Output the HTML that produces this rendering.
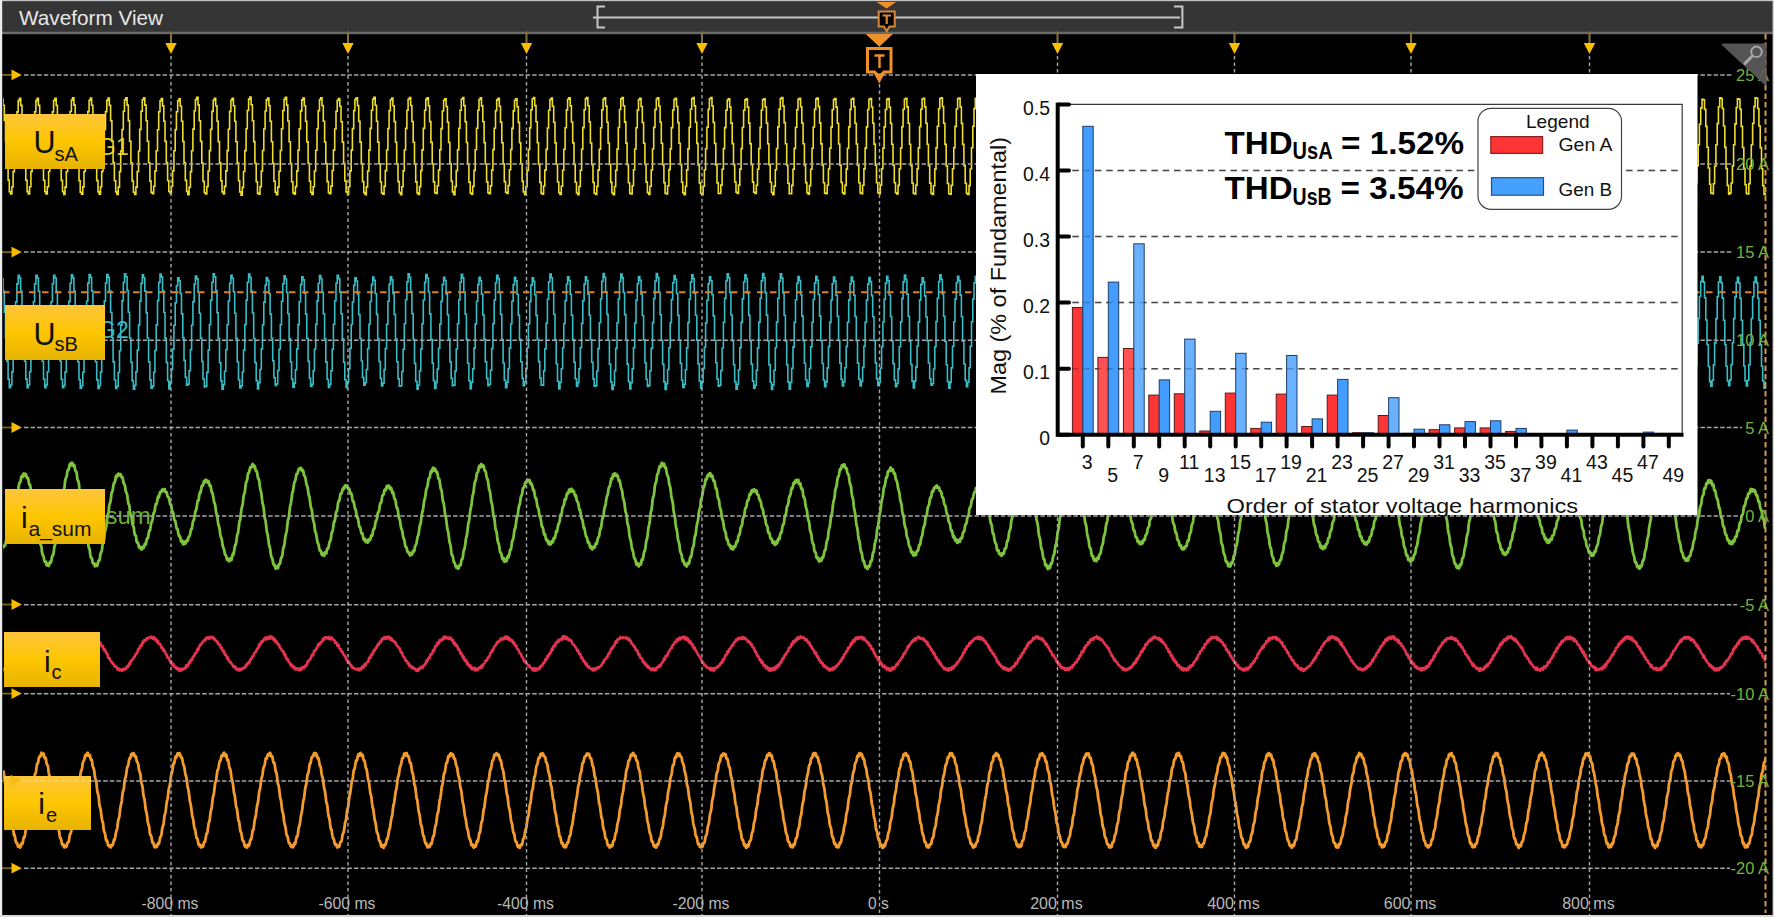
<!DOCTYPE html><html><head><meta charset="utf-8"><style>
html,body{margin:0;padding:0;background:#000;overflow:hidden}
body{width:1774px;height:917px;position:relative;font-family:"Liberation Sans",sans-serif}
svg{position:absolute;left:0;top:0}
text{font-family:"Liberation Sans",sans-serif}
</style></head><body>
<svg width="1774" height="917" viewBox="0 0 1774 917">
<defs>
<linearGradient id="lg" x1="0" y1="0" x2="0" y2="1"><stop offset="0" stop-color="#fdc53c"/><stop offset="0.5" stop-color="#fdc600"/><stop offset="1" stop-color="#e7b300"/></linearGradient>
<clipPath id="wc"><rect x="3" y="34" width="1763" height="881"/></clipPath>
</defs>
<rect width="1774" height="917" fill="#000"/>
<rect x="0" y="0" width="1774" height="1.5" fill="#c4c4c4"/>
<rect x="0" y="1.5" width="1774" height="30" fill="#353535"/>
<rect x="0" y="31.5" width="1774" height="2.7" fill="#6b6b6b"/>
<text x="19" y="25" font-size="21" fill="#e8e8e8" textLength="144" lengthAdjust="spacingAndGlyphs">Waveform View</text>
<g stroke="#c8c8c8" stroke-width="2" fill="none">
<path d="M593 17.4H1180"/>
<path d="M605 6.4H597.5V27.5H605"/>
<path d="M1174 6.4H1182.4V27.5H1174"/>
</g>
<path d="M876.5 2H896L886.7 8.4Z" fill="#f0902a"/>
<path d="M878.7 11.6H894.7V26.5H889.5L886.7 31L883.9 26.5H878.7Z" fill="#000" stroke="#d4883c" stroke-width="2"/>
<path d="M882.5 15.5H891M886.7 15.5V24" stroke="#d4883c" stroke-width="2.2"/>
<g clip-path="url(#wc)">
<text x="98" y="155" font-size="23" fill="#d8cc2a">G1</text>
<text x="98" y="338" font-size="23" fill="#35b8c2">G2</text>
<text x="60" y="524" font-size="24" fill="#6cae30">i_a_sum</text>
<path d="M3 98.2l0 7.1 1.3 0 0 15.2 1.2 0 0 20.3 1.3 0 0 21.3 1.3 0 0 18.1 1.2 0 0 11.4 1.3 0 0 2.4 1.3 0 0 -7.2 1.2 0 0 -15.2 1.3 0 0 -20.2 1.3 0 0 -21.3 1.2 0 0 -18.2 1.3 0 0 -11.3 1.3 0 0 -2.4 1.2 0 0 7.2 1.3 0 0 15.2 1.3 0 0 20.2 1.2 0 0 21.4 1.3 0 0 18.1 1.3 0 0 11.3 1.2 0 0 2.4 1.3 0 0 -7.2 1.3 0 0 -15.2 1.2 0 0 -20.3 1.3 0 0 -21.3 1.2 0 0 -18.1 1.3 0 0 -11.3 1.3 0 0 -2.4 1.2 0 0 7.2 1.3 0 0 15.2 1.3 0 0 20.3 1.2 0 0 21.3 1.3 0 0 18.1 1.3 0 0 11.4 1.2 0 0 2.3 1.3 0 0 -7.2 1.3 0 0 -15.3 1.2 0 0 -20.3 1.3 0 0 -21.3 1.3 0 0 -18 1.2 0 0 -11.4 1.3 0 0 -2.2 1.3 0 0 7.1 1.2 0 0 15.3 1.3 0 0 20.3 1.3 0 0 21.3 1.2 0 0 18.1 1.3 0 0 11.3 1.3 0 0 2.7 1.2 0 0 -7.3 1.3 0 0 -15.4 1.3 0 0 -20.5 1.2 0 0 -21.5 1.3 0 0 -18.2 1.3 0 0 -11.4 1.2 0 0 -2.3 1.3 0 0 7.3 1.3 0 0 15.4 1.2 0 0 20.5 1.3 0 0 21.5 1.3 0 0 18.3 1.2 0 0 11.4 1.3 0 0 1.9 1.3 0 0 -7.2 1.2 0 0 -15.4 1.3 0 0 -20.4 1.3 0 0 -21.4 1.2 0 0 -18.1 1.3 0 0 -11.3 1.3 0 0 -2.2 1.2 0 0 7.2 1.3 0 0 15.4 1.3 0 0 20.4 1.2 0 0 21.4 1.3 0 0 18.1 1.3 0 0 11.3 1.2 0 0 2.2 1.3 0 0 -7.3 1.2 0 0 -15.3 1.3 0 0 -20.4 1.3 0 0 -21.4 1.2 0 0 -18.1 1.3 0 0 -11.3 1.3 0 0 -2.2 1.2 0 0 7.3 1.3 0 0 15.4 1.3 0 0 20.4 1.2 0 0 21.3 1.3 0 0 18.2 1.3 0 0 11.2 1.2 0 0 2.6 1.3 0 0 -7.4 1.3 0 0 -15.5 1.2 0 0 -20.6 1.3 0 0 -21.5 1.3 0 0 -18.3 1.2 0 0 -11.3 1.3 0 0 -2.2 1.3 0 0 7.4 1.2 0 0 15.5 1.3 0 0 20.6 1.3 0 0 21.5 1.2 0 0 18.3 1.3 0 0 11.3 1.3 0 0 2.2 1.2 0 0 -7.4 1.3 0 0 -15.5 1.3 0 0 -20.6 1.2 0 0 -21.6 1.3 0 0 -18.2 1.3 0 0 -11.4 1.2 0 0 -2.1 1.3 0 0 7.4 1.3 0 0 15.6 1.2 0 0 20.6 1.3 0 0 21.5 1.3 0 0 18.3 1.2 0 0 11.3 1.3 0 0 1.2 1.3 0 0 -7.3 1.2 0 0 -15.3 1.3 0 0 -20.2 1.3 0 0 -21.1 1.2 0 0 -17.9 1.3 0 0 -11.1 1.2 0 0 -2.1 1.3 0 0 7.3 1.3 0 0 15.3 1.2 0 0 20.2 1.3 0 0 21.2 1.3 0 0 17.9 1.2 0 0 11 1.3 0 0 2 1.3 0 0 -7.3 1.2 0 0 -15.3 1.3 0 0 -20.2 1.3 0 0 -21.1 1.2 0 0 -17.8 1.3 0 0 -11.1 1.3 0 0 -2 1.2 0 0 7.3 1.3 0 0 15.3 1.3 0 0 20.2 1.2 0 0 21.1 1.3 0 0 17.8 1.3 0 0 11.1 1.2 0 0 3.3 1.3 0 0 -7.5 1.3 0 0 -15.7 1.2 0 0 -20.8 1.3 0 0 -21.7 1.3 0 0 -18.3 1.2 0 0 -11.3 1.3 0 0 -2.1 1.3 0 0 7.5 1.2 0 0 15.8 1.3 0 0 20.7 1.3 0 0 21.7 1.2 0 0 18.3 1.3 0 0 11.4 1.3 0 0 1.1 1.2 0 0 -7.4 1.3 0 0 -15.5 1.3 0 0 -20.4 1.2 0 0 -21.2 1.3 0 0 -18 1.3 0 0 -11.1 1.2 0 0 -2 1.3 0 0 7.5 1.3 0 0 15.4 1.2 0 0 20.4 1.3 0 0 21.3 1.3 0 0 17.9 1.2 0 0 11.1 1.3 0 0 2 1.2 0 0 -7.5 1.3 0 0 -15.5 1.3 0 0 -20.3 1.2 0 0 -21.3 1.3 0 0 -17.9 1.3 0 0 -11.1 1.2 0 0 -2 1.3 0 0 7.5 1.3 0 0 15.5 1.2 0 0 20.4 1.3 0 0 21.2 1.3 0 0 17.9 1.2 0 0 11.1 1.3 0 0 3.2 1.3 0 0 -7.7 1.2 0 0 -15.9 1.3 0 0 -20.9 1.3 0 0 -21.8 1.2 0 0 -18.3 1.3 0 0 -11.4 1.3 0 0 -2 1.2 0 0 7.7 1.3 0 0 15.9 1.3 0 0 20.9 1.2 0 0 21.8 1.3 0 0 18.4 1.3 0 0 11.3 1.2 0 0 1.1 1.3 0 0 -7.6 1.3 0 0 -15.6 1.2 0 0 -20.5 1.3 0 0 -21.5 1.3 0 0 -18 1.2 0 0 -11.1 1.3 0 0 -1.9 1.3 0 0 7.6 1.2 0 0 15.6 1.3 0 0 20.6 1.3 0 0 21.4 1.2 0 0 18 1.3 0 0 11.1 1.3 0 0 2.5 1.2 0 0 -7.7 1.3 0 0 -15.8 1.3 0 0 -20.8 1.2 0 0 -21.7 1.3 0 0 -18.3 1.3 0 0 -11.2 1.2 0 0 -1.9 1.3 0 0 7.7 1.2 0 0 15.9 1.3 0 0 20.8 1.3 0 0 21.7 1.2 0 0 18.2 1.3 0 0 11.2 1.3 0 0 1.3 1.2 0 0 -7.6 1.3 0 0 -15.7 1.3 0 0 -20.6 1.2 0 0 -21.4 1.3 0 0 -18 1.3 0 0 -11 1.2 0 0 -1.9 1.3 0 0 7.7 1.3 0 0 15.6 1.2 0 0 20.6 1.3 0 0 21.4 1.3 0 0 18 1.2 0 0 11 1.3 0 0 2.2 1.3 0 0 -7.8 1.2 0 0 -15.7 1.3 0 0 -20.7 1.3 0 0 -21.5 1.2 0 0 -18.1 1.3 0 0 -11.1 1.3 0 0 -1.9 1.2 0 0 7.8 1.3 0 0 15.8 1.3 0 0 20.7 1.2 0 0 21.5 1.3 0 0 18.1 1.3 0 0 11 1.2 0 0 1.1 1.3 0 0 -7.6 1.3 0 0 -15.6 1.2 0 0 -20.4 1.3 0 0 -21.1 1.3 0 0 -17.8 1.2 0 0 -10.9 1.3 0 0 -1.8 1.3 0 0 7.7 1.2 0 0 15.5 1.3 0 0 20.4 1.3 0 0 21.2 1.2 0 0 17.7 1.3 0 0 10.9 1.3 0 0 2.5 1.2 0 0 -7.7 1.3 0 0 -15.8 1.3 0 0 -20.8 1.2 0 0 -21.5 1.3 0 0 -18 1.2 0 0 -11 1.3 0 0 -1.8 1.3 0 0 7.8 1.2 0 0 15.8 1.3 0 0 20.7 1.3 0 0 21.5 1.2 0 0 18 1.3 0 0 11 1.3 0 0 2.2 1.2 0 0 -7.9 1.3 0 0 -15.9 1.3 0 0 -20.9 1.2 0 0 -21.7 1.3 0 0 -18.1 1.3 0 0 -11.1 1.2 0 0 -1.8 1.3 0 0 7.9 1.3 0 0 15.9 1.2 0 0 20.9 1.3 0 0 21.7 1.3 0 0 18.2 1.2 0 0 11 1.3 0 0 1.2 1.3 0 0 -7.8 1.2 0 0 -15.8 1.3 0 0 -20.6 1.3 0 0 -21.4 1.2 0 0 -18 1.3 0 0 -10.9 1.3 0 0 -1.7 1.2 0 0 7.8 1.3 0 0 15.8 1.3 0 0 20.6 1.2 0 0 21.5 1.3 0 0 17.9 1.3 0 0 10.9 1.2 0 0 2.1 1.3 0 0 -7.9 1.3 0 0 -15.9 1.2 0 0 -20.8 1.3 0 0 -21.6 1.3 0 0 -18.1 1.2 0 0 -11 1.3 0 0 -1.7 1.3 0 0 7.9 1.2 0 0 16 1.3 0 0 20.8 1.3 0 0 21.6 1.2 0 0 18 1.3 0 0 11 1.2 0 0 1.5 1.3 0 0 -7.8 1.3 0 0 -16 1.2 0 0 -20.7 1.3 0 0 -21.5 1.3 0 0 -18.1 1.2 0 0 -10.9 1.3 0 0 -1.6 1.3 0 0 7.9 1.2 0 0 15.9 1.3 0 0 20.8 1.3 0 0 21.5 1.2 0 0 18 1.3 0 0 10.9 1.3 0 0 0.7 1.2 0 0 -7.8 1.3 0 0 -15.6 1.3 0 0 -20.4 1.2 0 0 -21.1 1.3 0 0 -17.6 1.3 0 0 -10.7 1.2 0 0 -1.6 1.3 0 0 7.8 1.3 0 0 15.6 1.2 0 0 20.4 1.3 0 0 21.1 1.3 0 0 17.6 1.2 0 0 10.7 1.3 0 0 2.7 1.3 0 0 -8 1.2 0 0 -16 1.3 0 0 -20.9 1.3 0 0 -21.5 1.2 0 0 -18 1.3 0 0 -10.9 1.3 0 0 -1.7 1.2 0 0 8 1.3 0 0 16 1.3 0 0 20.9 1.2 0 0 21.6 1.3 0 0 18 1.3 0 0 10.9 1.2 0 0 1.3 1.3 0 0 -8 1.3 0 0 -15.9 1.2 0 0 -20.7 1.3 0 0 -21.5 1.3 0 0 -17.9 1.2 0 0 -10.8 1.3 0 0 -1.6 1.2 0 0 8 1.3 0 0 15.9 1.3 0 0 20.8 1.2 0 0 21.4 1.3 0 0 17.9 1.3 0 0 10.8 1.2 0 0 1.1 1.3 0 0 -7.9 1.3 0 0 -15.8 1.2 0 0 -20.5 1.3 0 0 -21.3 1.3 0 0 -17.7 1.2 0 0 -10.7 1.3 0 0 -1.5 1.3 0 0 7.9 1.2 0 0 15.8 1.3 0 0 20.6 1.3 0 0 21.2 1.2 0 0 17.7 1.3 0 0 10.7 1.3 0 0 1.1 1.2 0 0 -7.9 1.3 0 0 -15.7 1.3 0 0 -20.3 1.2 0 0 -21.1 1.3 0 0 -17.5 1.3 0 0 -10.6 1.2 0 0 -1.5 1.3 0 0 7.9 1.3 0 0 15.7 1.2 0 0 20.4 1.3 0 0 21 1.3 0 0 17.6 1.2 0 0 10.5 1.3 0 0 2.8 1.3 0 0 -8.1 1.2 0 0 -16.2 1.3 0 0 -20.9 1.3 0 0 -21.6 1.2 0 0 -18.1 1.3 0 0 -10.8 1.3 0 0 -1.5 1.2 0 0 8.1 1.3 0 0 16.2 1.3 0 0 21 1.2 0 0 21.6 1.3 0 0 18 1.3 0 0 10.8 1.2 0 0 0.9 1.3 0 0 -8.1 1.2 0 0 -15.9 1.3 0 0 -20.7 1.3 0 0 -21.4 1.2 0 0 -17.7 1.3 0 0 -10.7 1.3 0 0 -1.5 1.2 0 0 8.1 1.3 0 0 16 1.3 0 0 20.7 1.2 0 0 21.3 1.3 0 0 17.8 1.3 0 0 10.6 1.2 0 0 1.8 1.3 0 0 -8.1 1.3 0 0 -16.1 1.2 0 0 -20.9 1.3 0 0 -21.5 1.3 0 0 -17.9 1.2 0 0 -10.7 1.3 0 0 -1.4 1.3 0 0 8.1 1.2 0 0 16.1 1.3 0 0 20.9 1.3 0 0 21.5 1.2 0 0 17.9 1.3 0 0 10.7 1.3 0 0 1.7 1.2 0 0 -8.2 1.3 0 0 -16.2 1.3 0 0 -21 1.2 0 0 -21.7 1.3 0 0 -17.9 1.3 0 0 -10.8 1.2 0 0 -1.4 1.3 0 0 8.2 1.3 0 0 16.3 1.2 0 0 21 1.3 0 0 21.6 1.3 0 0 17.9 1.2 0 0 10.8 1.3 0 0 1.1 1.3 0 0 -8.2 1.2 0 0 -16.1 1.3 0 0 -20.9 1.3 0 0 -21.5 1.2 0 0 -17.9 1.3 0 0 -10.6 1.3 0 0 -1.4 1.2 0 0 8.2 1.3 0 0 16.2 1.2 0 0 20.8 1.3 0 0 21.5 1.3 0 0 17.9 1.2 0 0 10.6 1.3 0 0 1.7 1.3 0 0 -8.2 1.2 0 0 -16.3 1.3 0 0 -21.1 1.3 0 0 -21.6 1.2 0 0 -18 1.3 0 0 -10.7 1.3 0 0 -1.3 1.2 0 0 8.3 1.3 0 0 16.3 1.3 0 0 21 1.2 0 0 21.6 1.3 0 0 18 1.3 0 0 10.7 1.2 0 0 0.5 1.3 0 0 -8.2 1.3 0 0 -16 1.2 0 0 -20.7 1.3 0 0 -21.3 1.3 0 0 -17.6 1.2 0 0 -10.5 1.3 0 0 -1.3 1.3 0 0 8.2 1.2 0 0 16 1.3 0 0 20.7 1.3 0 0 21.3 1.2 0 0 17.6 1.3 0 0 10.5 1.3 0 0 1.9 1.2 0 0 -8.3 1.3 0 0 -16.2 1.3 0 0 -21 1.2 0 0 -21.6 1.3 0 0 -17.8 1.3 0 0 -10.6 1.2 0 0 -1.3 1.3 0 0 8.3 1.3 0 0 16.3 1.2 0 0 20.9 1.3 0 0 21.6 1.3 0 0 17.8 1.2 0 0 10.6 1.3 0 0 0.7 1.2 0 0 -8.2 1.3 0 0 -16.1 1.3 0 0 -20.7 1.2 0 0 -21.3 1.3 0 0 -17.6 1.3 0 0 -10.5 1.2 0 0 -1.2 1.3 0 0 8.2 1.3 0 0 16.1 1.2 0 0 20.7 1.3 0 0 21.3 1.3 0 0 17.7 1.2 0 0 10.4 1.3 0 0 2 1.3 0 0 -8.4 1.2 0 0 -16.4 1.3 0 0 -21 1.3 0 0 -21.7 1.2 0 0 -17.9 1.3 0 0 -10.6 1.3 0 0 -1.2 1.2 0 0 8.4 1.3 0 0 16.4 1.3 0 0 21.1 1.2 0 0 21.6 1.3 0 0 17.9 1.3 0 0 10.6 1.2 0 0 1.1 1.3 0 0 -8.4 1.3 0 0 -16.4 1.2 0 0 -21 1.3 0 0 -21.6 1.3 0 0 -17.8 1.2 0 0 -10.6 1.3 0 0 -1.2 1.3 0 0 8.4 1.2 0 0 16.4 1.3 0 0 21 1.3 0 0 21.6 1.2 0 0 17.9 1.3 0 0 10.5 1.3 0 0 0 1.2 0 0 -8.3 1.3 0 0 -15.9 1.3 0 0 -20.6 1.2 0 0 -21 1.3 0 0 -17.4 1.3 0 0 -10.2 1.2 0 0 -1.2 1.3 0 0 8.3 1.2 0 0 16 1.3 0 0 20.5 1.3 0 0 21 1.2 0 0 17.4 1.3 0 0 10.2 1.3 0 0 1.2 1.2 0 0 -8.3 1.3 0 0 -16 1.3 0 0 -20.5 1.2 0 0 -21.1 1.3 0 0 -17.3 1.3 0 0 -10.3 1.2 0 0 -1.1 1.3 0 0 8.3 1.3 0 0 16 1.2 0 0 20.5 1.3 0 0 21.1 1.3 0 0 17.4 1.2 0 0 10.2 1.3 0 0 1.2 1.3 0 0 -8.3 1.2 0 0 -16 1.3 0 0 -20.7 1.3 0 0 -21.1 1.2 0 0 -17.4 1.3 0 0 -10.2 1.3 0 0 -1.1 1.2 0 0 8.3 1.3 0 0 16.1 1.3 0 0 20.6 1.2 0 0 21.1 1.3 0 0 17.4 1.3 0 0 10.3 1.2 0 0 2.2 1.3 0 0 -8.6 1.3 0 0 -16.4 1.2 0 0 -21.2 1.3 0 0 -21.6 1.3 0 0 -17.8 1.2 0 0 -10.5 1.3 0 0 -1.1 1.3 0 0 8.6 1.2 0 0 16.5 1.3 0 0 21.1 1.3 0 0 21.6 1.2 0 0 17.9 1.3 0 0 10.4 1.3 0 0 0.2 1.2 0 0 -8.4 1.3 0 0 -16.2 1.2 0 0 -20.8 1.3 0 0 -21.2 1.3 0 0 -17.5 1.2 0 0 -10.3 1.3 0 0 -1 1.3 0 0 8.4 1.2 0 0 16.2 1.3 0 0 20.8 1.3 0 0 21.3 1.2 0 0 17.5 1.3 0 0 10.2 1.3 0 0 1.3 1.2 0 0 -8.5 1.3 0 0 -16.3 1.3 0 0 -21 1.2 0 0 -21.3 1.3 0 0 -17.6 1.3 0 0 -10.3 1.2 0 0 -1 1.3 0 0 8.5 1.3 0 0 16.3 1.2 0 0 21 1.3 0 0 21.4 1.3 0 0 17.5 1.2 0 0 10.3 1.3 0 0 0.5 1.3 0 0 -8.4 1.2 0 0 -16.2 1.3 0 0 -20.7 1.3 0 0 -21.2 1.2 0 0 -17.4 1.3 0 0 -10.1 1.3 0 0 -1 1.2 0 0 8.5 1.3 0 0 16.2 1.3 0 0 20.7 1.2 0 0 21.1 1.3 0 0 17.4 1.3 0 0 10.2 1.2 0 0 1.2 1.3 0 0 -8.5 1.3 0 0 -16.3 1.2 0 0 -20.9 1.3 0 0 -21.3 1.3 0 0 -17.5 1.2 0 0 -10.2 1.3 0 0 -0.9 1.3 0 0 8.5 1.2 0 0 16.4 1.3 0 0 20.8 1.2 0 0 21.3 1.3 0 0 17.5 1.3 0 0 10.2 1.2 0 0 0.7 1.3 0 0 -8.5 1.3 0 0 -16.3 1.2 0 0 -20.8 1.3 0 0 -21.2 1.3 0 0 -17.4 1.2 0 0 -10.1 1.3 0 0 -0.9 1.3 0 0 8.5 1.2 0 0 16.3 1.3 0 0 20.8 1.3 0 0 21.2 1.2 0 0 17.4 1.3 0 0 10.1 1.3 0 0 0.8 1.2 0 0 -8.5 1.3 0 0 -16.3 1.3 0 0 -20.7 1.2 0 0 -21.2 1.3 0 0 -17.4 1.3 0 0 -10.1 1.2 0 0 -0.8 1.3 0 0 8.5 1.3 0 0 16.3 1.2 0 0 20.8 1.3 0 0 21.1 1.3 0 0 17.4 1.2 0 0 10.1 1.3 0 0 1.2 1.3 0 0 -8.6 1.2 0 0 -16.5 1.3 0 0 -20.9 1.3 0 0 -21.3 1.2 0 0 -17.5 1.3 0 0 -10.2 1.3 0 0 -0.8 1.2 0 0 8.7 1.3 0 0 16.4 1.3 0 0 20.9 1.2 0 0 21.4 1.3 0 0 17.4 1.3 0 0 10.2 1.2 0 0 0.8 1.3 0 0 -8.7 1.3 0 0 -16.4 1.2 0 0 -21 1.3 0 0 -21.3 1.2 0 0 -17.4 1.3 0 0 -10.2 1.3 0 0 -0.8 1.2 0 0 8.7 1.3 0 0 16.4 1.3 0 0 21 1.2 0 0 21.3 1.3 0 0 17.5 1.3 0 0 10.1 1.2 0 0 1.3 1.3 0 0 -8.8 1.3 0 0 -16.6 1.2 0 0 -21.2 1.3 0 0 -21.6 1.3 0 0 -17.6 1.2 0 0 -10.2 1.3 0 0 -0.8 1.3 0 0 8.8 1.2 0 0 16.7 1.3 0 0 21.2 1.3 0 0 21.5 1.2 0 0 17.6 1.3 0 0 10.2 1.3 0 0 0.4 1.2 0 0 -8.7 1.3 0 0 -16.6 1.3 0 0 -21 1.2 0 0 -21.4 1.3 0 0 -17.4 1.3 0 0 -10.2 1.2 0 0 -0.7 1.3 0 0 8.8 1.3 0 0 16.5 1.2 0 0 21 1.3 0 0 21.4 1.3 0 0 17.5 1.2 0 0 10.1 1.3 0 0 1.1 1.3 0 0 -8.9 1.2 0 0 -16.6 1.3 0 0 -21.3 1.3 0 0 -21.5 1.2 0 0 -17.6 1.3 0 0 -10.2 1.3 0 0 -0.7 1.2 0 0 8.9 1.3 0 0 16.7 1.3 0 0 21.2 1.2 0 0 21.5 1.3 0 0 17.6 1.2 0 0 10.2 1.3 0 0 0.6 1.3 0 0 -8.9 1.2 0 0 -16.7 1.3 0 0 -21.1 1.3 0 0 -21.5 1.2 0 0 -17.6 1.3 0 0 -10.1 1.3 0 0 -0.7 1.2 0 0 8.9 1.3 0 0 16.7 1.3 0 0 21.2 1.2 0 0 21.4 1.3 0 0 17.6 1.3 0 0 10.1 1.2 0 0 0.9 1.3 0 0 -9 1.3 0 0 -16.7 1.2 0 0 -21.3 1.3 0 0 -21.6 1.3 0 0 -17.6 1.2 0 0 -10.1 1.3 0 0 -0.7 1.3 0 0 9 1.2 0 0 16.8 1.3 0 0 21.2 1.3 0 0 21.6 1.2 0 0 17.6 1.3 0 0 10.1 1.3 0 0 0.1 1.2 0 0 -8.8 1.3 0 0 -16.6 1.3 0 0 -21.1 1.2 0 0 -21.3 1.3 0 0 -17.4 1.3 0 0 -10 1.2 0 0 -0.6 1.3 0 0 8.8 1.3 0 0 16.6 1.2 0 0 21.1 1.3 0 0 21.4 1.3 0 0 17.3 1.2 0 0 10 1.3 0 0 -0.2 1.3 0 0 -8.7 1.2 0 0 -16.4 1.3 0 0 -20.7 1.3 0 0 -21 1.2 0 0 -17 1.3 0 0 -9.8 1.2 0 0 -0.6 1.3 0 0 8.7 1.3 0 0 16.4 1.2 0 0 20.7 1.3 0 0 21 1.3 0 0 17.1 1.2 0 0 9.8 1.3 0 0 1.6 1.3 0 0 -9 1.2 0 0 -16.7 1.3 0 0 -21.2 1.3 0 0 -21.5 1.2 0 0 -17.4 1.3 0 0 -10 1.3 0 0 -0.6 1.2 0 0 9 1.3 0 0 16.7 1.3 0 0 21.2 1.2 0 0 21.5 1.3 0 0 17.5 1.3 0 0 10 1.2 0 0 0.7 1.3 0 0 -9.1 1.3 0 0 -16.8 1.2 0 0 -21.3 1.3 0 0 -21.5 1.3 0 0 -17.5 1.2 0 0 -10 1.3 0 0 -0.6 1.3 0 0 9.1 1.2 0 0 16.8 1.3 0 0 21.3 1.3 0 0 21.5 1.2 0 0 17.5 1.3 0 0 10 1.3 0 0 0.5 1.2 0 0 -9.1 1.3 0 0 -16.8 1.3 0 0 -21.2 1.2 0 0 -21.5 1.3 0 0 -17.5 1.3 0 0 -9.9 1.2 0 0 -0.6 1.3 0 0 9.1 1.3 0 0 16.8 1.2 0 0 21.3 1.3 0 0 21.5 1.3 0 0 17.4 1.2 0 0 10 1.3 0 0 -0.1 1.2 0 0 -9 1.3 0 0 -16.6 1.3 0 0 -21 1.2 0 0 -21.3 1.3 0 0 -17.2 1.3 0 0 -9.8 1.2 0 0 -0.5 1.3 0 0 9 1.3 0 0 16.6 1.2 0 0 21.1 1.3 0 0 21.2 1.3 0 0 17.2 1.2 0 0 9.9 1.3 0 0 0.6 1.3 0 0 -9 1.2 0 0 -16.8 1.3 0 0 -21.1 1.3 0 0 -21.3 1.2 0 0 -17.3 1.3 0 0 -9.9 1.3 0 0 -0.4 1.2 0 0 9 1.3 0 0 16.8 1.3 0 0 21.1 1.2 0 0 21.4 1.3 0 0 17.3 1.3 0 0 9.8 1.2 0 0 -0.4 1.3 0 0 -8.9 1.3 0 0 -16.5 1.2 0 0 -20.8 1.3 0 0 -21 1.3 0 0 -17 1.2 0 0 -9.6 1.3 0 0 -0.4 1.3 0 0 8.9 1.2 0 0 16.5 1.3 0 0 20.8 1.3 0 0 21 1.2 0 0 17 1.3 0 0 9.6 1.3 0 0 1.4 1.2 0 0 -9.1 1.3 0 0 -16.9 1.3 0 0 -21.2 1.2 0 0 -21.4 1.3 0 0 -17.4 1.3 0 0 -9.8 1.2 0 0 -0.4 1.3 0 0 9.2 1.2 0 0 16.8 1.3 0 0 21.3 1.3 0 0 21.4 1.2 0 0 17.3 1.3 0 0 9.8 1.3 0 0 0 1.2 0 0 -9.1 1.3 0 0 -16.7 1.3 0 0 -21.1 1.2 0 0 -21.2 1.3 0 0 -17.2 1.3 0 0 -9.7 1.2 0 0 -0.4 1.3 0 0 9.1 1.3 0 0 16.8 1.2 0 0 21 1.3 0 0 21.3 1.3 0 0 17.1 1.2 0 0 9.7 1.3 0 0 -0.1 1.3 0 0 -9 1.2 0 0 -16.6 1.3 0 0 -20.9 1.3 0 0 -21 1.2 0 0 -17 1.3 0 0 -9.6 1.3 0 0 -0.3 1.2 0 0 9 1.3 0 0 16.6 1.3 0 0 20.9 1.2 0 0 21 1.3 0 0 17 1.3 0 0 9.6 1.2 0 0 -0.1 1.3 0 0 -8.9 1.3 0 0 -16.5 1.2 0 0 -20.8 1.3 0 0 -20.8 1.3 0 0 -16.9 1.2 0 0 -9.5 1.3 0 0 -0.2 1.3 0 0 9 1.2 0 0 16.5 1.3 0 0 20.7 1.3 0 0 20.8 1.2 0 0 16.9 1.3 0 0 9.5 1.3 0 0 1.5 1.2 0 0 -9.3 1.3 0 0 -16.9 1.3 0 0 -21.3 1.2 0 0 -21.4 1.3 0 0 -17.3 1.2 0 0 -9.7 1.3 0 0 -0.3 1.3 0 0 9.3 1.2 0 0 17 1.3 0 0 21.2 1.3 0 0 21.4 1.2 0 0 17.3 1.3 0 0 9.7 1.3 0 0 0.5 1.2 0 0 -9.4 1.3 0 0 -17 1.3 0 0 -21.4 1.2 0 0 -21.5 1.3 0 0 -17.3 1.3 0 0 -9.7 1.2 0 0 -0.3 1.3 0 0 9.4 1.3 0 0 17 1.2 0 0 21.4 1.3 0 0 21.5 1.3 0 0 17.3 1.2 0 0 9.7 1.3 0 0 -1.2 1.3 0 0 -9 1.2 0 0 -16.6 1.3 0 0 -20.8 1.3 0 0 -20.8 1.2 0 0 -16.8 1.3 0 0 -9.4 1.3 0 0 -0.2 1.2 0 0 9.1 1.3 0 0 16.5 1.3 0 0 20.8 1.2 0 0 20.8 1.3 0 0 16.8 1.3 0 0 9.5 1.2 0 0 1.2 1.3 0 0 -9.3 1.3 0 0 -17 1.2 0 0 -21.2 1.3 0 0 -21.4 1.3 0 0 -17.1 1.2 0 0 -9.7 1.3 0 0 -0.1 1.3 0 0 9.3 1.2 0 0 17 1.3 0 0 21.3 1.3 0 0 21.3 1.2 0 0 17.2 1.3 0 0 9.6 1.2 0 0 -0.5 1.3 0 0 -9.2 1.3 0 0 -16.8 1.2 0 0 -21 1.3 0 0 -21 1.3 0 0 -17 1.2 0 0 -9.5 1.3 0 0 -0.1 1.3 0 0 9.2 1.2 0 0 16.8 1.3 0 0 21 1.3 0 0 21.1 1.2 0 0 16.9 1.3 0 0 9.5 1.3 0 0 -0.3 1.2 0 0 -9.2 1.3 0 0 -16.6 1.3 0 0 -20.9 1.2 0 0 -20.8 1.3 0 0 -16.8 1.3 0 0 -9.4 1.2 0 0 -0.1 1.3 0 0 9.2 1.3 0 0 16.7 1.2 0 0 20.8 1.3 0 0 20.9 1.3 0 0 16.7 1.2 0 0 9.4 1.3 0 0 0.3 1.3 0 0 -9.2 1.2 0 0 -16.8 1.3 0 0 -20.9 1.3 0 0 -21 1.2 0 0 -16.8 1.3 0 0 -9.4 1.3 0 0 -0.1 1.2 0 0 9.3 1.3 0 0 16.7 1.3 0 0 21 1.2 0 0 20.9 1.3 0 0 16.9 1.3 0 0 9.3 1.2 0 0 0.8 1.3 0 0 -9.4 1.3 0 0 -17 1.2 0 0 -21.3 1.3 0 0 -21.3 1.3 0 0 -17.1 1.2 0 0 -9.5 1.3 0 0 0 1.2 0 0 9.4 1.3 0 0 17.1 1.3 0 0 21.2 1.2 0 0 21.3 1.3 0 0 17.1 1.3 0 0 9.5 1.2 0 0 0.2 1.3 0 0 -9.5 1.3 0 0 -17.1 1.2 0 0 -21.4 1.3 0 0 -21.3 1.3 0 0 -17.1 1.2 0 0 -9.6 1.3 0 0 0 1.3 0 0 9.5 1.2 0 0 17.1 1.3 0 0 21.4 1.3 0 0 21.4 1.2 0 0 17.1 1.3 0 0 9.5 1.3 0 0 -1.3 1.2 0 0 -9.3 1.3 0 0 -16.7 1.3 0 0 -20.7 1.2 0 0 -20.8 1.3 0 0 -16.7 1.3 0 0 -9.2 1.2 0 0 0 1.3 0 0 9.3 1.3 0 0 16.7 1.2 0 0 20.8 1.3 0 0 20.7 1.3 0 0 16.7 1.2 0 0 9.2 1.3 0 0 0.8 1.3 0 0 -9.4 1.2 0 0 -17 1.3 0 0 -21.2 1.3 0 0 -21.2 1.2 0 0 -16.9 1.3 0 0 -9.4 1.3 0 0 0.1 1.2 0 0 9.4 1.3 0 0 17.1 1.3 0 0 21.1 1.2 0 0 21.2 1.3 0 0 16.9 1.3 0 0 9.4 1.2 0 0 -1 1.3 0 0 -9.3 1.2 0 0 -16.7 1.3 0 0 -20.8 1.3 0 0 -20.7 1.2 0 0 -16.6 1.3 0 0 -9.2 1.3 0 0 0.1 1.2 0 0 9.3 1.3 0 0 16.7 1.3 0 0 20.8 1.2 0 0 20.8 1.3 0 0 16.6 1.3 0 0 9.1 1.2 0 0 1 1.3 0 0 -9.6 1.3 0 0 -17.1 1.2 0 0 -21.2 1.3 0 0 -21.3 1.3 0 0 -16.9 1.2 0 0 -9.4 1.3 0 0 0.1 1.3 0 0 9.6 1.2 0 0 17.1 1.3 0 0 21.3 1.3 0 0 21.2 1.2 0 0 16.9 1.3 0 0 9.4 1.3 0 0 -0.7 1.2 0 0 -9.5 1.3 0 0 -16.9 1.3 0 0 -21 1.2 0 0 -21 1.3 0 0 -16.7 1.3 0 0 -9.2 1.2 0 0 0.2 1.3 0 0 9.4 1.3 0 0 16.9 1.2 0 0 21 1.3 0 0 21 1.3 0 0 16.7 1.2 0 0 9.2 1.3 0 0 0.7 1.3 0 0 -9.7 1.2 0 0 -17.2 1.3 0 0 -21.4 1.3 0 0 -21.3 1.2 0 0 -17 1.3 0 0 -9.4 1.3 0 0 0.2 1.2 0 0 9.7 1.3 0 0 17.2 1.2 0 0 21.4 1.3 0 0 21.3 1.3 0 0 17 1.2 0 0 9.4 1.3 0 0 -0.1 1.3 0 0 -9.7 1.2 0 0 -17.3 1.3 0 0 -21.5 1.3 0 0 -21.3 1.2 0 0 -17.1 1.3 0 0 -9.3 1.3 0 0 0.2 1.2 0 0 9.7 1.3 0 0 17.3 1.3 0 0 21.5 1.2 0 0 21.4 1.3 0 0 17 1.3 0 0 9.3 1.2 0 0 -0.9 1.3 0 0 -9.6 1.3 0 0 -17.1 1.2 0 0 -21.1 1.3 0 0 -21.1 1.3 0 0 -16.7 1.2 0 0 -9.2 1.3 0 0 0.2 1.3 0 0 9.6 1.2 0 0 17.1 1.3 0 0 21.2 1.3 0 0 21 1.2 0 0 16.8 1.3 0 0 9.1 1.3 0 0 0.5 1.2 0 0 -9.7 1.3 0 0 -17.4 1.3 0 0 -21.5 1.2 0 0 -21.4 1.3 0 0 -17 1.3 0 0 -9.3 1.2 0 0 0.3 1.3 0 0 9.8 1.3 0 0 17.3 1.2 0 0 21.5 1.3 0 0 21.4 1.3 0 0 17 1.2 0 0 9.3 1.3 0 0 -1.4 1.3 0 0 -9.5 1.2 0 0 -17 1.3 0 0 -21.1 1.2 0 0 -20.8 1.3 0 0 -16.7 1.3 0 0 -9 1.2 0 0 0.3 1.3 0 0 9.6 1.3 0 0 17 1.2 0 0 21 1.3 0 0 20.9 1.3 0 0 16.6 1.2 0 0 9 1.3 0 0 -0.6 1.3 0 0 -9.6 1.2 0 0 -16.8 1.3 0 0 -20.9 1.3 0 0 -20.7 1.2 0 0 -16.5 1.3 0 0 -9 1.3 0 0 0.3 1.2 0 0 9.6 1.3 0 0 16.9 1.3 0 0 20.8 1.2 0 0 20.8 1.3 0 0 16.4 1.3 0 0 9 1.2 0 0 0.5 1.3 0 0 -9.8 1.3 0 0 -17.2 1.2 0 0 -21.2 1.3 0 0 -21.1 1.3 0 0 -16.7 1.2 0 0 -9.1 1.3 0 0 0.4 1.3 0 0 9.7 1.2 0 0 17.2 1.3 0 0 21.2 1.3 0 0 21.1 1.2 0 0 16.7 1.3 0 0 9.1 1.3 0 0 -1.2 1.2 0 0 -9.6 1.3 0 0 -16.9 1.3 0 0 -20.8 1.2 0 0 -20.7 1.3 0 0 -16.4 1.3 0 0 -8.9 1.2 0 0 0.4 1.3 0 0 9.5 1.3 0 0 16.9 1.2 0 0 20.9 1.3 0 0 20.7 1.2 0 0 16.4 1.3 0 0 8.8 1.3 0 0 -0.1 1.2 0 0 -9.7 1.3 0 0 -17 1.3 0 0 -20.9 1.2 0 0 -20.8 1.3 0 0 -16.5 1.3 0 0 -8.9 1.2 0 0 0.4 1.3 0 0 9.7 1.3 0 0 17 1.2 0 0 21 1.3 0 0 20.7 1.3 0 0 16.5 1.2 0 0 8.9 1.3 0 0 -0.1 1.3 0 0 -9.7 1.2 0 0 -17.2 1.3 0 0 -21.1 1.3 0 0 -20.9 1.2 0 0 -16.6 1.3 0 0 -9 1.3 0 0 0.5 1.2 0 0 9.8 1.3 0 0 17.1 1.3 0 0 21.1 1.2 0 0 21 1.3 0 0 16.5 1.3 0 0 9 1.2 0 0 -0.2 1.3 0 0 -9.8 1.3 0 0 -17.3 1.2 0 0 -21.3 1.3 0 0 -21 1.3 0 0 -16.7 1.2 0 0 -9 1.3 0 0 0.5 1.3 0 0 9.9 1.2 0 0 17.2 1.3 0 0 21.3 1.3 0 0 21.1 1.2 0 0 16.6 1.3 0 0 9 1.3 0 0 -1.2 1.2 0 0 -9.7 1.3 0 0 -17.1 1.3 0 0 -20.9 1.2 0 0 -20.8 1.3 0 0 -16.4 1.2 0 0 -8.8 1.3 0 0 0.5 1.3 0 0 9.8 1.2 0 0 17 1.3 0 0 21 1.3 0 0 20.7 1.2 0 0 16.4 1.3 0 0 8.8 1.3 0 0 -0.7 1.2 0 0 -9.7 1.3 0 0 -17 1.3 0 0 -20.9 1.2 0 0 -20.6 1.3 0 0 -16.4 1.3 0 0 -8.7 1.2 0 0 0.5 1.3 0 0 9.7 1.3 0 0 17 1.2 0 0 20.9 1.3 0 0 20.7 1.3 0 0 16.3 1.2 0 0 8.7 1.3 0 0 0.8 1.3 0 0 -10.1 1.2 0 0 -17.4 1.3 0 0 -21.5 1.3 0 0 -21.2 1.2 0 0 -16.8 1.3 0 0 -8.9 1.3 0 0 0.6 1.2 0 0 10 1.3 0 0 17.5 1.3 0 0 21.4 1.2 0 0 21.2 1.3 0 0 16.8 1.3 0 0 8.9 1.2 0 0 -1.4 1.3 0 0 -9.9 1.3 0 0 -17.1 1.2 0 0 -21.1 1.3 0 0 -20.9 1.3 0 0 -16.4 1.2 0 0 -8.8 1.3 0 0 0.6 1.3 0 0 9.9 1.2 0 0 17.2 1.3 0 0 21.1 1.3 0 0 20.8 1.2 0 0 16.4 1.3 0 0 8.8 1.2 0 0 0.4 1.3 0 0 -10.1 1.3 0 0 -17.6 1.2 0 0 -21.5 1.3 0 0 -21.3 1.3 0 0 -16.8 1.2 0 0 -8.9 1.3 0 0 0.6 1.3 0 0 10.2 1.2 0 0 17.5 1.3 0 0 21.6 1.3 0 0 21.2 1.2 0 0 16.8 1.3 0 0 8.9 1.3 0 0 -0.8 1.2 0" fill="none" stroke="#eedd2c" stroke-width="1.6" stroke-linejoin="miter"/>
<path d="M3 277.9l0 13.2 1.3 0 0 21.2 1.2 0 0 25 1.3 0 0 23.8 1.3 0 0 18 1.2 0 0 8.5 1.3 0 0 -2.6 1.3 0 0 -13.1 1.2 0 0 -21.2 1.3 0 0 -25 1.3 0 0 -23.8 1.2 0 0 -18 1.3 0 0 -8.5 1.3 0 0 2.6 1.2 0 0 13.2 1.3 0 0 21.2 1.3 0 0 24.9 1.2 0 0 23.9 1.3 0 0 17.9 1.3 0 0 8.5 1.2 0 0 -2.6 1.3 0 0 -13.2 1.3 0 0 -21.2 1.2 0 0 -25 1.3 0 0 -23.8 1.2 0 0 -17.9 1.3 0 0 -8.5 1.3 0 0 2.6 1.2 0 0 13.2 1.3 0 0 21.2 1.3 0 0 25 1.2 0 0 23.8 1.3 0 0 18 1.3 0 0 8.4 1.2 0 0 -2.6 1.3 0 0 -13.3 1.3 0 0 -21.2 1.2 0 0 -25 1.3 0 0 -23.8 1.3 0 0 -17.9 1.2 0 0 -8.4 1.3 0 0 2.6 1.3 0 0 13.3 1.2 0 0 21.2 1.3 0 0 25 1.3 0 0 23.8 1.2 0 0 17.9 1.3 0 0 8.4 1.3 0 0 -2.1 1.2 0 0 -13.4 1.3 0 0 -21.5 1.3 0 0 -25.2 1.2 0 0 -24 1.3 0 0 -18.1 1.3 0 0 -8.5 1.2 0 0 2.8 1.3 0 0 13.4 1.3 0 0 21.4 1.2 0 0 25.2 1.3 0 0 24.1 1.3 0 0 18 1.2 0 0 8.5 1.3 0 0 -2.5 1.3 0 0 -13.5 1.2 0 0 -21.6 1.3 0 0 -25.3 1.3 0 0 -24.1 1.2 0 0 -18.1 1.3 0 0 -8.5 1.3 0 0 2.8 1.2 0 0 13.5 1.3 0 0 21.5 1.3 0 0 25.3 1.2 0 0 24.1 1.3 0 0 18.1 1.3 0 0 8.5 1.2 0 0 -2.8 1.3 0 0 -13.5 1.2 0 0 -21.5 1.3 0 0 -25.4 1.3 0 0 -24.1 1.2 0 0 -18.1 1.3 0 0 -8.4 1.3 0 0 2.8 1.2 0 0 13.5 1.3 0 0 21.6 1.3 0 0 25.3 1.2 0 0 24.1 1.3 0 0 18.1 1.3 0 0 8.4 1.2 0 0 -2.2 1.3 0 0 -13.7 1.3 0 0 -21.8 1.2 0 0 -25.6 1.3 0 0 -24.4 1.3 0 0 -18.2 1.2 0 0 -8.6 1.3 0 0 2.9 1.3 0 0 13.7 1.2 0 0 21.8 1.3 0 0 25.7 1.3 0 0 24.3 1.2 0 0 18.3 1.3 0 0 8.5 1.3 0 0 -3.8 1.2 0 0 -13.5 1.3 0 0 -21.5 1.3 0 0 -25.2 1.2 0 0 -24 1.3 0 0 -17.9 1.3 0 0 -8.4 1.2 0 0 2.9 1.3 0 0 13.5 1.3 0 0 21.5 1.2 0 0 25.3 1.3 0 0 23.9 1.3 0 0 18 1.2 0 0 8.3 1.3 0 0 -2.1 1.3 0 0 -13.8 1.2 0 0 -21.8 1.3 0 0 -25.6 1.3 0 0 -24.3 1.2 0 0 -18.2 1.3 0 0 -8.4 1.2 0 0 2.9 1.3 0 0 13.8 1.3 0 0 21.8 1.2 0 0 25.6 1.3 0 0 24.3 1.3 0 0 18.2 1.2 0 0 8.4 1.3 0 0 -6.7 1.3 0 0 -12.8 1.2 0 0 -20.4 1.3 0 0 -23.8 1.3 0 0 -22.7 1.2 0 0 -16.9 1.3 0 0 -7.8 1.3 0 0 2.8 1.2 0 0 12.8 1.3 0 0 20.4 1.3 0 0 23.9 1.2 0 0 22.6 1.3 0 0 16.9 1.3 0 0 7.8 1.2 0 0 -1 1.3 0 0 -13.3 1.3 0 0 -21.1 1.2 0 0 -24.7 1.3 0 0 -23.4 1.3 0 0 -17.5 1.2 0 0 -8.1 1.3 0 0 2.9 1.3 0 0 13.3 1.2 0 0 21.1 1.3 0 0 24.8 1.3 0 0 23.4 1.2 0 0 17.5 1.3 0 0 8 1.3 0 0 -0.9 1.2 0 0 -13.9 1.3 0 0 -21.9 1.3 0 0 -25.6 1.2 0 0 -24.3 1.3 0 0 -18.2 1.3 0 0 -8.3 1.2 0 0 3 1.3 0 0 13.9 1.3 0 0 21.9 1.2 0 0 25.7 1.3 0 0 24.3 1.3 0 0 18.1 1.2 0 0 8.3 1.3 0 0 -4.3 1.2 0 0 -13.5 1.3 0 0 -21.5 1.3 0 0 -25.1 1.2 0 0 -23.7 1.3 0 0 -17.7 1.3 0 0 -8.1 1.2 0 0 3 1.3 0 0 13.6 1.3 0 0 21.4 1.2 0 0 25.1 1.3 0 0 23.7 1.3 0 0 17.7 1.2 0 0 8.2 1.3 0 0 -2 1.3 0 0 -13.9 1.2 0 0 -21.9 1.3 0 0 -25.6 1.3 0 0 -24.2 1.2 0 0 -18 1.3 0 0 -8.3 1.3 0 0 3.2 1.2 0 0 13.8 1.3 0 0 22 1.3 0 0 25.5 1.2 0 0 24.2 1.3 0 0 18 1.3 0 0 8.3 1.2 0 0 -6.4 1.3 0 0 -13.1 1.3 0 0 -20.6 1.2 0 0 -24 1.3 0 0 -22.8 1.3 0 0 -16.9 1.2 0 0 -7.7 1.3 0 0 2.9 1.3 0 0 13.1 1.2 0 0 20.6 1.3 0 0 24.1 1.3 0 0 22.7 1.2 0 0 16.9 1.3 0 0 7.7 1.3 0 0 -1.5 1.2 0 0 -13.5 1.3 0 0 -21.2 1.3 0 0 -24.7 1.2 0 0 -23.4 1.3 0 0 -17.4 1.3 0 0 -7.9 1.2 0 0 3.1 1.3 0 0 13.5 1.2 0 0 21.2 1.3 0 0 24.8 1.3 0 0 23.3 1.2 0 0 17.4 1.3 0 0 7.9 1.3 0 0 -4 1.2 0 0 -13.3 1.3 0 0 -20.9 1.3 0 0 -24.3 1.2 0 0 -22.9 1.3 0 0 -17.1 1.3 0 0 -7.7 1.2 0 0 3 1.3 0 0 13.3 1.3 0 0 20.9 1.2 0 0 24.3 1.3 0 0 23 1.3 0 0 17 1.2 0 0 7.7 1.3 0 0 -1.8 1.3 0 0 -13.6 1.2 0 0 -21.4 1.3 0 0 -24.9 1.3 0 0 -23.5 1.2 0 0 -17.4 1.3 0 0 -7.9 1.3 0 0 3.1 1.2 0 0 13.7 1.3 0 0 21.4 1.3 0 0 24.9 1.2 0 0 23.4 1.3 0 0 17.4 1.3 0 0 7.9 1.2 0 0 -3 1.3 0 0 -13.7 1.3 0 0 -21.5 1.2 0 0 -24.9 1.3 0 0 -23.5 1.3 0 0 -17.5 1.2 0 0 -7.9 1.3 0 0 3.3 1.3 0 0 13.6 1.2 0 0 21.5 1.3 0 0 24.9 1.3 0 0 23.6 1.2 0 0 17.4 1.3 0 0 7.9 1.3 0 0 -5.6 1.2 0 0 -13.1 1.3 0 0 -20.5 1.3 0 0 -23.9 1.2 0 0 -22.5 1.3 0 0 -16.6 1.2 0 0 -7.5 1.3 0 0 3.1 1.3 0 0 13.1 1.2 0 0 20.5 1.3 0 0 23.9 1.3 0 0 22.5 1.2 0 0 16.6 1.3 0 0 7.5 1.3 0 0 -2.3 1.2 0 0 -13.3 1.3 0 0 -20.9 1.3 0 0 -24.3 1.2 0 0 -22.8 1.3 0 0 -16.9 1.3 0 0 -7.6 1.2 0 0 3.2 1.3 0 0 13.3 1.3 0 0 20.9 1.2 0 0 24.3 1.3 0 0 22.8 1.3 0 0 16.9 1.2 0 0 7.6 1.3 0 0 -2.9 1.3 0 0 -13.5 1.2 0 0 -21 1.3 0 0 -24.4 1.3 0 0 -22.9 1.2 0 0 -17 1.3 0 0 -7.6 1.3 0 0 3.2 1.2 0 0 13.5 1.3 0 0 21 1.3 0 0 24.4 1.2 0 0 23 1.3 0 0 16.9 1.3 0 0 7.6 1.2 0 0 -0.6 1.3 0 0 -14.2 1.3 0 0 -22.1 1.2 0 0 -25.6 1.3 0 0 -24.1 1.3 0 0 -17.8 1.2 0 0 -8 1.3 0 0 3.5 1.3 0 0 14.1 1.2 0 0 22.1 1.3 0 0 25.7 1.3 0 0 24.1 1.2 0 0 17.8 1.3 0 0 7.9 1.2 0 0 -4.1 1.3 0 0 -14 1.3 0 0 -21.9 1.2 0 0 -25.3 1.3 0 0 -23.8 1.3 0 0 -17.6 1.2 0 0 -7.8 1.3 0 0 3.4 1.3 0 0 14 1.2 0 0 21.9 1.3 0 0 25.4 1.3 0 0 23.8 1.2 0 0 17.5 1.3 0 0 7.8 1.3 0 0 -5.9 1.2 0 0 -13.4 1.3 0 0 -20.9 1.3 0 0 -24.1 1.2 0 0 -22.7 1.3 0 0 -16.8 1.3 0 0 -7.4 1.2 0 0 3.3 1.3 0 0 13.4 1.3 0 0 20.9 1.2 0 0 24.2 1.3 0 0 22.7 1.3 0 0 16.7 1.2 0 0 7.4 1.3 0 0 -0.7 1.3 0 0 -14.1 1.2 0 0 -22 1.3 0 0 -25.4 1.3 0 0 -23.8 1.2 0 0 -17.6 1.3 0 0 -7.8 1.3 0 0 3.5 1.2 0 0 14.2 1.3 0 0 21.9 1.3 0 0 25.4 1.2 0 0 23.9 1.3 0 0 17.5 1.3 0 0 7.8 1.2 0 0 -6.3 1.3 0 0 -13.4 1.3 0 0 -20.8 1.2 0 0 -24.2 1.3 0 0 -22.6 1.3 0 0 -16.7 1.2 0 0 -7.3 1.3 0 0 3.4 1.2 0 0 13.4 1.3 0 0 20.9 1.3 0 0 24.1 1.2 0 0 22.6 1.3 0 0 16.7 1.3 0 0 7.3 1.2 0 0 -1.4 1.3 0 0 -14 1.3 0 0 -21.7 1.2 0 0 -25 1.3 0 0 -23.5 1.3 0 0 -17.3 1.2 0 0 -7.6 1.3 0 0 3.5 1.3 0 0 14 1.2 0 0 21.7 1.3 0 0 25.1 1.3 0 0 23.5 1.2 0 0 17.2 1.3 0 0 7.6 1.3 0 0 -5.6 1.2 0 0 -13.4 1.3 0 0 -20.9 1.3 0 0 -24.1 1.2 0 0 -22.6 1.3 0 0 -16.6 1.3 0 0 -7.3 1.2 0 0 3.5 1.3 0 0 13.5 1.3 0 0 20.8 1.2 0 0 24.2 1.3 0 0 22.5 1.3 0 0 16.6 1.2 0 0 7.3 1.3 0 0 -4 1.3 0 0 -13.4 1.2 0 0 -20.6 1.3 0 0 -23.9 1.3 0 0 -22.4 1.2 0 0 -16.4 1.3 0 0 -7.1 1.3 0 0 3.4 1.2 0 0 13.4 1.3 0 0 20.7 1.3 0 0 23.9 1.2 0 0 22.3 1.3 0 0 16.4 1.3 0 0 7.1 1.2 0 0 0.1 1.3 0 0 -14.3 1.2 0 0 -22.2 1.3 0 0 -25.5 1.3 0 0 -24 1.2 0 0 -17.5 1.3 0 0 -7.7 1.3 0 0 3.8 1.2 0 0 14.3 1.3 0 0 22.2 1.3 0 0 25.6 1.2 0 0 23.9 1.3 0 0 17.5 1.3 0 0 7.7 1.2 0 0 -6.5 1.3 0 0 -13.7 1.3 0 0 -21 1.2 0 0 -24.3 1.3 0 0 -22.7 1.3 0 0 -16.6 1.2 0 0 -7.3 1.3 0 0 3.6 1.3 0 0 13.7 1.2 0 0 21.1 1.3 0 0 24.2 1.3 0 0 22.7 1.2 0 0 16.6 1.3 0 0 7.3 1.3 0 0 -3.6 1.2 0 0 -13.7 1.3 0 0 -21.1 1.3 0 0 -24.3 1.2 0 0 -22.7 1.3 0 0 -16.6 1.3 0 0 -7.2 1.2 0 0 3.6 1.3 0 0 13.7 1.3 0 0 21.1 1.2 0 0 24.3 1.3 0 0 22.7 1.3 0 0 16.6 1.2 0 0 7.2 1.3 0 0 -0.5 1.3 0 0 -14.6 1.2 0 0 -22.4 1.3 0 0 -25.8 1.3 0 0 -24 1.2 0 0 -17.6 1.3 0 0 -7.7 1.3 0 0 3.9 1.2 0 0 14.6 1.3 0 0 22.4 1.2 0 0 25.8 1.3 0 0 24.1 1.3 0 0 17.6 1.2 0 0 7.6 1.3 0 0 -4.4 1.3 0 0 -14.4 1.2 0 0 -22.3 1.3 0 0 -25.6 1.3 0 0 -23.8 1.2 0 0 -17.5 1.3 0 0 -7.5 1.3 0 0 3.9 1.2 0 0 14.5 1.3 0 0 22.2 1.3 0 0 25.6 1.2 0 0 23.9 1.3 0 0 17.4 1.3 0 0 7.5 1.2 0 0 -6.3 1.3 0 0 -13.8 1.3 0 0 -21.3 1.2 0 0 -24.5 1.3 0 0 -22.8 1.3 0 0 -16.6 1.2 0 0 -7.1 1.3 0 0 3.7 1.3 0 0 13.9 1.2 0 0 21.3 1.3 0 0 24.4 1.3 0 0 22.8 1.2 0 0 16.6 1.3 0 0 7.1 1.3 0 0 -1 1.2 0 0 -14.6 1.3 0 0 -22.4 1.3 0 0 -25.8 1.2 0 0 -24 1.3 0 0 -17.5 1.3 0 0 -7.5 1.2 0 0 4 1.3 0 0 14.6 1.3 0 0 22.5 1.2 0 0 25.7 1.3 0 0 24 1.3 0 0 17.5 1.2 0 0 7.5 1.3 0 0 -5.7 1.2 0 0 -14.2 1.3 0 0 -21.7 1.3 0 0 -25 1.2 0 0 -23.2 1.3 0 0 -16.9 1.3 0 0 -7.2 1.2 0 0 3.8 1.3 0 0 14.2 1.3 0 0 21.8 1.2 0 0 24.9 1.3 0 0 23.2 1.3 0 0 16.9 1.2 0 0 7.2 1.3 0 0 -3.3 1.3 0 0 -14.4 1.2 0 0 -21.9 1.3 0 0 -25.3 1.3 0 0 -23.4 1.2 0 0 -17.1 1.3 0 0 -7.3 1.3 0 0 4 1.2 0 0 14.4 1.3 0 0 22 1.3 0 0 25.2 1.2 0 0 23.5 1.3 0 0 17 1.3 0 0 7.3 1.2 0 0 -5.9 1.3 0 0 -13.9 1.3 0 0 -21.2 1.2 0 0 -24.3 1.3 0 0 -22.6 1.3 0 0 -16.4 1.2 0 0 -7 1.3 0 0 3.9 1.3 0 0 13.9 1.2 0 0 21.2 1.3 0 0 24.3 1.3 0 0 22.5 1.2 0 0 16.4 1.3 0 0 7 1.3 0 0 -0.9 1.2 0 0 -14.7 1.3 0 0 -22.5 1.3 0 0 -25.7 1.2 0 0 -23.9 1.3 0 0 -17.4 1.3 0 0 -7.3 1.2 0 0 4.1 1.3 0 0 14.7 1.2 0 0 22.5 1.3 0 0 25.7 1.3 0 0 24 1.2 0 0 17.3 1.3 0 0 7.3 1.3 0 0 -5.1 1.2 0 0 -14.5 1.3 0 0 -22.1 1.3 0 0 -25.2 1.2 0 0 -23.5 1.3 0 0 -16.9 1.3 0 0 -7.2 1.2 0 0 4 1.3 0 0 14.5 1.3 0 0 22.1 1.2 0 0 25.3 1.3 0 0 23.4 1.3 0 0 17 1.2 0 0 7.1 1.3 0 0 -2.9 1.3 0 0 -14.9 1.2 0 0 -22.5 1.3 0 0 -25.8 1.3 0 0 -23.9 1.2 0 0 -17.3 1.3 0 0 -7.3 1.3 0 0 4.1 1.2 0 0 14.9 1.3 0 0 22.5 1.3 0 0 25.8 1.2 0 0 24 1.3 0 0 17.3 1.3 0 0 7.2 1.2 0 0 -4.5 1.3 0 0 -14.7 1.3 0 0 -22.5 1.2 0 0 -25.6 1.3 0 0 -23.8 1.3 0 0 -17.2 1.2 0 0 -7.2 1.3 0 0 4.2 1.3 0 0 14.8 1.2 0 0 22.4 1.3 0 0 25.7 1.3 0 0 23.7 1.2 0 0 17.2 1.3 0 0 7.2 1.3 0 0 -6.6 1.2 0 0 -14.1 1.3 0 0 -21.5 1.2 0 0 -24.5 1.3 0 0 -22.7 1.3 0 0 -16.4 1.2 0 0 -6.8 1.3 0 0 4 1.3 0 0 14.2 1.2 0 0 21.4 1.3 0 0 24.5 1.3 0 0 22.7 1.2 0 0 16.4 1.3 0 0 6.8 1.3 0 0 -3.8 1.2 0 0 -14.2 1.3 0 0 -21.6 1.3 0 0 -24.6 1.2 0 0 -22.8 1.3 0 0 -16.4 1.3 0 0 -6.9 1.2 0 0 4.1 1.3 0 0 14.2 1.3 0 0 21.6 1.2 0 0 24.6 1.3 0 0 22.8 1.3 0 0 16.5 1.2 0 0 6.8 1.3 0 0 -4.9 1.3 0 0 -14 1.2 0 0 -21.3 1.3 0 0 -24.2 1.3 0 0 -22.4 1.2 0 0 -16.2 1.3 0 0 -6.7 1.3 0 0 4 1.2 0 0 14.1 1.3 0 0 21.2 1.3 0 0 24.3 1.2 0 0 22.4 1.3 0 0 16.1 1.3 0 0 6.7 1.2 0 0 -4.1 1.3 0 0 -14.1 1.3 0 0 -21.2 1.2 0 0 -24.2 1.3 0 0 -22.4 1.3 0 0 -16.1 1.2 0 0 -6.7 1.3 0 0 4.1 1.3 0 0 14.1 1.2 0 0 21.2 1.3 0 0 24.2 1.2 0 0 22.4 1.3 0 0 16.1 1.3 0 0 6.7 1.2 0 0 -4.5 1.3 0 0 -14 1.3 0 0 -21.1 1.2 0 0 -24 1.3 0 0 -22.2 1.3 0 0 -16 1.2 0 0 -6.6 1.3 0 0 4.1 1.3 0 0 14 1.2 0 0 21.1 1.3 0 0 24 1.3 0 0 22.2 1.2 0 0 16 1.3 0 0 6.6 1.3 0 0 -3.1 1.2 0 0 -14.3 1.3 0 0 -21.5 1.3 0 0 -24.6 1.2 0 0 -22.6 1.3 0 0 -16.3 1.3 0 0 -6.7 1.2 0 0 4.3 1.3 0 0 14.3 1.3 0 0 21.5 1.2 0 0 24.5 1.3 0 0 22.6 1.3 0 0 16.3 1.2 0 0 6.7 1.3 0 0 -3.1 1.3 0 0 -14.6 1.2 0 0 -22.1 1.3 0 0 -25.1 1.3 0 0 -23.1 1.2 0 0 -16.7 1.3 0 0 -6.8 1.3 0 0 4.4 1.2 0 0 14.6 1.3 0 0 22.1 1.3 0 0 25.1 1.2 0 0 23.2 1.3 0 0 16.6 1.3 0 0 6.8 1.2 0 0 -6.8 1.3 0 0 -14 1.3 0 0 -21.1 1.2 0 0 -23.9 1.3 0 0 -22 1.2 0 0 -15.9 1.3 0 0 -6.5 1.3 0 0 4.2 1.2 0 0 14 1.3 0 0 21.1 1.3 0 0 23.9 1.2 0 0 22.1 1.3 0 0 15.8 1.3 0 0 6.5 1.2 0 0 -1.5 1.3 0 0 -14.8 1.3 0 0 -22.2 1.2 0 0 -25.3 1.3 0 0 -23.2 1.3 0 0 -16.7 1.2 0 0 -6.8 1.3 0 0 4.4 1.3 0 0 14.8 1.2 0 0 22.3 1.3 0 0 25.2 1.3 0 0 23.3 1.2 0 0 16.6 1.3 0 0 6.8 1.3 0 0 -5.8 1.2 0 0 -14.5 1.3 0 0 -21.6 1.3 0 0 -24.6 1.2 0 0 -22.6 1.3 0 0 -16.3 1.3 0 0 -6.5 1.2 0 0 4.3 1.3 0 0 14.5 1.3 0 0 21.6 1.2 0 0 24.6 1.3 0 0 22.7 1.3 0 0 16.2 1.2 0 0 6.5 1.3 0 0 -4.5 1.3 0 0 -14.4 1.2 0 0 -21.6 1.3 0 0 -24.5 1.3 0 0 -22.6 1.2 0 0 -16.2 1.3 0 0 -6.5 1.3 0 0 4.4 1.2 0 0 14.4 1.3 0 0 21.7 1.3 0 0 24.5 1.2 0 0 22.6 1.3 0 0 16.1 1.2 0 0 6.5 1.3 0 0 -2.3 1.3 0 0 -15.1 1.2 0 0 -22.5 1.3 0 0 -25.5 1.3 0 0 -23.5 1.2 0 0 -16.8 1.3 0 0 -6.7 1.3 0 0 4.6 1.2 0 0 15 1.3 0 0 22.5 1.3 0 0 25.6 1.2 0 0 23.4 1.3 0 0 16.8 1.3 0 0 6.7 1.2 0 0 -5.9 1.3 0 0 -14.7 1.3 0 0 -22 1.2 0 0 -24.8 1.3 0 0 -22.9 1.3 0 0 -16.3 1.2 0 0 -6.6 1.3 0 0 4.6 1.3 0 0 14.6 1.2 0 0 22 1.3 0 0 24.9 1.3 0 0 22.8 1.2 0 0 16.3 1.3 0 0 6.6 1.3 0 0 -5.2 1.2 0 0 -14.6 1.3 0 0 -21.6 1.3 0 0 -24.6 1.2 0 0 -22.5 1.3 0 0 -16.1 1.3 0 0 -6.4 1.2 0 0 4.5 1.3 0 0 14.5 1.3 0 0 21.7 1.2 0 0 24.5 1.3 0 0 22.6 1.3 0 0 16 1.2 0 0 6.4 1.3 0 0 -3.8 1.3 0 0 -14.7 1.2 0 0 -22 1.3 0 0 -24.9 1.3 0 0 -22.8 1.2 0 0 -16.3 1.3 0 0 -6.5 1.2 0 0 4.6 1.3 0 0 14.8 1.3 0 0 22 1.2 0 0 24.8 1.3 0 0 22.9 1.3 0 0 16.2 1.2 0 0 6.5 1.3 0 0 -3.7 1.3 0 0 -15.1 1.2 0 0 -22.3 1.3 0 0 -25.4 1.3 0 0 -23.2 1.2 0 0 -16.5 1.3 0 0 -6.6 1.3 0 0 4.7 1.2 0 0 15.1 1.3 0 0 22.4 1.3 0 0 25.3 1.2 0 0 23.2 1.3 0 0 16.5 1.3 0 0 6.6 1.2 0 0 -7.4 1.3 0 0 -14.3 1.3 0 0 -21.3 1.2 0 0 -24 1.3 0 0 -22 1.3 0 0 -15.7 1.2 0 0 -6.2 1.3 0 0 4.5 1.3 0 0 14.3 1.2 0 0 21.3 1.3 0 0 24 1.3 0 0 22.1 1.2 0 0 15.6 1.3 0 0 6.2 1.3 0 0 -0.8 1.2 0 0 -15.4 1.3 0 0 -22.9 1.3 0 0 -25.8 1.2 0 0 -23.7 1.3 0 0 -16.8 1.3 0 0 -6.7 1.2 0 0 4.9 1.3 0 0 15.4 1.3 0 0 22.9 1.2 0 0 25.9 1.3 0 0 23.6 1.3 0 0 16.8 1.2 0 0 6.7 1.3 0 0 -8.8 1.2 0 0 -14.3 1.3 0 0 -21.2 1.3 0 0 -24 1.2 0 0 -22 1.3 0 0 -15.6 1.3 0 0 -6.1 1.2 0 0 4.6 1.3 0 0 14.3 1.3 0 0 21.3 1.2 0 0 24 1.3 0 0 21.9 1.3 0 0 15.6 1.2 0 0 6.1 1.3 0 0 -1.7 1.3 0 0 -15.2 1.2 0 0 -22.5 1.3 0 0 -25.4 1.3 0 0 -23.2 1.2 0 0 -16.5 1.3 0 0 -6.5 1.3 0 0 4.9 1.2 0 0 15.2 1.3 0 0 22.5 1.3 0 0 25.4 1.2 0 0 23.3 1.3 0 0 16.4 1.3 0 0 6.5 1.2 0 0 -4.5 1.3 0 0 -15.4 1.3 0 0 -22.7 1.2 0 0 -25.6 1.3 0 0 -23.4 1.3 0 0 -16.5 1.2 0 0 -6.5 1.3 0 0 4.9 1.3 0 0 15.4 1.2 0 0 22.7 1.3 0 0 25.6 1.3 0 0 23.4 1.2 0 0 16.6 1.3 0 0 6.4 1.3 0 0 -8.3 1.2 0 0 -14.4 1.3 0 0 -21.3 1.3 0 0 -23.9 1.2 0 0 -21.9 1.3 0 0 -15.5 1.3 0 0 -6.1 1.2 0 0 4.7 1.3 0 0 14.4 1.2 0 0 21.3 1.3 0 0 24 1.3 0 0 21.9 1.2 0 0 15.5 1.3 0 0 6 1.3 0 0 -1.6 1.2 0 0 -15.3 1.3 0 0 -22.7 1.3 0 0 -25.5 1.2 0 0 -23.2 1.3 0 0 -16.5 1.3 0 0 -6.3 1.2 0 0 4.9 1.3 0 0 15.4 1.3 0 0 22.6 1.2 0 0 25.5 1.3 0 0 23.3 1.3 0 0 16.4 1.2 0 0 6.3 1.3 0 0 -6.6 1.3 0 0 -14.9 1.2 0 0 -21.9 1.3 0 0 -24.7 1.3 0 0 -22.5 1.2 0 0 -15.9 1.3 0 0 -6.1 1.3 0 0 4.9 1.2 0 0 14.8 1.3 0 0 22 1.3 0 0 24.6 1.2 0 0 22.5 1.3 0 0 15.9 1.3 0 0 6.1 1.2 0 0 -4 1.3 0 0 -15.2 1.3 0 0 -22.3 1.2 0 0 -25.1 1.3 0 0 -22.8 1.3 0 0 -16.1 1.2 0 0 -6.2 1.3 0 0 4.9 1.3 0 0 15.2 1.2 0 0 22.3 1.3 0 0 25.1 1.3 0 0 22.8 1.2 0 0 16.2 1.3 0 0 6.1 1.3 0 0 -7.2 1.2 0 0 -14.5 1.3 0 0 -21.4 1.3 0 0 -23.9 1.2 0 0 -21.9 1.3 0 0 -15.3 1.2 0 0 -5.9 1.3 0 0 4.8 1.3 0 0 14.5 1.2 0 0 21.3 1.3 0 0 24 1.3 0 0 21.8 1.2 0 0 15.4 1.3 0 0 5.8 1.3 0 0 -4.6 1.2 0 0 -14.6 1.3 0 0 -21.4 1.3 0 0 -24 1.2 0 0 -21.9 1.3 0 0 -15.4 1.3 0 0 -5.9 1.2 0 0 4.8 1.3 0 0 14.6 1.3 0 0 21.4 1.2 0 0 24.1 1.3 0 0 21.9 1.3 0 0 15.3 1.2 0 0 5.9 1.3 0 0 -4.3 1.3 0 0 -14.8 1.2 0 0 -21.6 1.3 0 0 -24.3 1.3 0 0 -22.1 1.2 0 0 -15.6 1.3 0 0 -5.9 1.3 0 0 4.9 1.2 0 0 14.8 1.3 0 0 21.7 1.3 0 0 24.3 1.2 0 0 22.1 1.3 0 0 15.5 1.3 0 0 5.9 1.2 0 0 -1.9 1.3 0 0 -15.7 1.3 0 0 -23 1.2 0 0 -25.8 1.3 0 0 -23.5 1.3 0 0 -16.5 1.2 0 0 -6.2 1.3 0 0 5.3 1.3 0 0 15.7 1.2 0 0 23 1.3 0 0 25.8 1.3 0 0 23.5 1.2 0 0 16.5 1.3 0 0 6.2 1.2 0 0 -8.3 1.3 0 0 -14.8 1.3 0 0 -21.8 1.2 0 0 -24.3 1.3 0 0 -22.1 1.3 0 0 -15.5 1.2 0 0 -5.9 1.3 0 0 5 1.3 0 0 14.9 1.2 0 0 21.7 1.3 0 0 24.3 1.3 0 0 22.1 1.2 0 0 15.5 1.3 0 0 5.9 1.3 0 0 -2.8 1.2 0 0 -15.5 1.3 0 0 -22.8 1.3 0 0 -25.4 1.2 0 0 -23.1 1.3 0 0 -16.2 1.3 0 0 -6 1.2 0 0 5.2 1.3 0 0 15.6 1.3 0 0 22.7 1.2 0 0 25.4 1.3 0 0 23.1 1.3 0 0 16.2 1.2 0 0 6 1.3 0 0 -4.6 1.3 0 0 -15.7 1.2 0 0 -23.1 1.3 0 0 -25.7 1.3 0 0 -23.4 1.2 0 0 -16.4 1.3 0 0 -6.1 1.3 0 0 5.4 1.2 0 0 15.7 1.3 0 0 23.1 1.3 0 0 25.8 1.2 0 0 23.3 1.3 0 0 16.4 1.3 0 0 6.1 1.2 0 0 -5.3 1.3 0 0 -15.8 1.3 0 0 -23.1 1.2 0 0 -25.8 1.3 0 0 -23.4 1.3 0 0 -16.4 1.2 0 0 -6 1.3 0 0 5.4 1.2 0 0 15.8 1.3 0 0 23.1 1.3 0 0 25.8 1.2 0 0 23.3 1.3 0 0 16.4 1.3 0 0 6 1.2 0 0 -7.8 1.3 0 0 -15.1 1.3 0 0 -22 1.2 0 0 -24.6 1.3 0 0 -22.4 1.3 0 0 -15.5 1.2 0 0 -5.8 1.3 0 0 5.2 1.3 0 0 15.1 1.2 0 0 22.1 1.3 0 0 24.6 1.3 0 0 22.3 1.2 0 0 15.6 1.3 0 0 5.7 1.3 0 0 -5.2 1.2 0 0 -15.1 1.3 0 0 -22.1 1.3 0 0 -24.6 1.2 0 0 -22.3 1.3 0 0 -15.6 1.3 0 0 -5.8 1.2 0 0 5.3 1.3 0 0 15.1 1.3 0 0 22.1 1.2 0 0 24.7 1.3 0 0 22.3 1.3 0 0 15.5 1.2 0 0 5.8 1.3 0 0 -4.6 1.3 0 0 -15.4 1.2 0 0 -22.4 1.3 0 0 -25 1.3 0 0 -22.6 1.2 0 0 -15.7 1.3 0 0 -5.8 1.3 0 0 5.3 1.2 0 0 15.4 1.3 0 0 22.4 1.3 0 0 25 1.2 0 0 22.6 1.3 0 0 15.7 1.3 0 0 5.8 1.2 0 0 -4.3 1.3 0 0 -15.8 1.2 0 0 -22.8 1.3 0 0 -25.5 1.3 0 0 -23 1.2 0 0 -16 1.3 0 0 -5.9 1.3 0 0 5.5 1.2 0 0 15.7 1.3 0 0 22.9 1.3 0 0 25.4 1.2 0 0 23 1.3 0 0 16.1 1.3 0 0 5.8 1.2 0 0 -8.1 1.3 0 0 -15 1.3 0 0 -21.7 1.2 0 0 -24.1 1.3 0 0 -21.9 1.3 0 0 -15.1 1.2 0 0 -5.6 1.3 0 0 5.3 1.3 0 0 14.9 1.2 0 0 21.7 1.3 0 0 24.2 1.3 0 0 21.8 1.2 0 0 15.2 1.3 0 0 5.5 1.3 0 0 -2.7 1.2 0 0 -15.8 1.3 0 0 -22.8 1.3 0 0 -25.4 1.2 0 0 -23 1.3 0 0 -15.9 1.3 0 0 -5.8 1.2 0 0 5.5 1.3 0 0 15.8 1.3 0 0 22.8 1.2 0 0 25.5 1.3 0 0 22.9 1.3 0 0 15.9 1.2 0 0 5.8 1.3 0 0 -5.4 1.3 0 0 -15.8 1.2 0 0 -22.9 1.3 0 0 -25.5 1.3 0 0 -23.1 1.2 0 0 -15.9 1.3 0 0 -5.8 1.3 0 0 5.6 1.2 0 0 15.8 1.3 0 0 23 1.2 0 0 25.5 1.3 0 0 23 1.3 0 0 16 1.2 0 0 5.7 1.3 0 0 -5.4 1.3 0 0 -15.9 1.2 0 0 -23 1.3 0 0 -25.7 1.3 0 0 -23.1 1.2 0 0 -16 1.3 0 0 -5.8 1.3 0 0 5.7 1.2 0 0 15.9 1.3 0 0 23.1 1.3 0 0 25.6 1.2 0 0 23.1 1.3 0 0 16 1.3 0 0 5.8 1.2 0 0 -9 1.3 0 0 -14.9 1.3 0 0 -21.6 1.2 0 0 -24.1 1.3 0 0 -21.6 1.3 0 0 -15 1.2 0 0 -5.4 1.3 0 0 5.4 1.3 0 0 14.9 1.2 0 0 21.7 1.3 0 0 24 1.3 0 0 21.6 1.2 0 0 15 1.3 0 0 9.4 1.3 0 0 -5.8 1.2 0 0 -16.1 1.3 0 0 -23.2 1.3 0 0 -25.8 1.2 0 0 -23.3 1.3 0 0 -16 1.3 0 0 -5.8 1.2 0 0 5.8 1.3 0 0 16.1 1.3 0 0 23.3 1.2 0 0 25.8 1.3 0 0 23.2 1.3 0 0 16.1 1.2 0 0 1.9 1.3 0 0 -5.4 1.3 0 0 -15.1 1.2 0 0 -21.7 1.3 0 0 -24.2 1.2 0 0 -21.7 1.3 0 0 -15 1.3 0 0 -5.3 1.2 0 0 5.4 1.3 0 0 15.1 1.3 0 0 21.8 1.2 0 0 24.1 1.3 0 0 21.7 1.3 0 0 15 1.2 0 0 6.4 1.3 0 0 -5.5 1.3 0 0 -15.5 1.2 0 0 -22.2 1.3 0 0 -24.6 1.3 0 0 -22.1 1.2 0 0 -15.3 1.3 0 0 -5.4 1.3 0 0 5.6 1.2 0 0 15.4 1.3 0 0 22.2 1.3 0 0 24.6 1.2 0 0 22.2 1.3 0 0 15.2 1.3 0 0 6.6 1.2 0 0 -5.7 1.3 0 0 -15.8 1.3 0 0 -22.7 1.2 0 0 -25.1 1.3 0 0 -22.6 1.3 0 0 -15.6 1.2 0 0 -5.5 1.3 0 0 5.7 1.3 0 0 15.8 1.2 0 0 22.7 1.3 0 0 25.2 1.3 0 0 22.6 1.2 0 0 15.5 1.3 0 0 6.8 1.3 0 0 -5.8 1.2 0 0 -16.2 1.3 0 0 -23.3 1.3 0 0 -25.7 1.2 0 0 -23.1 1.3 0 0 -16 1.3 0 0 -5.5 1.2 0 0 5.9 1.3 0 0 16.1 1.3 0 0 23.3 1.2 0 0 25.8 1.3 0 0 23.1 1.2 0 0 15.9 1.3 0 0 3 1.3 0 0 -5.7 1.2 0 0 -15.4 1.3 0 0 -22.3 1.3 0 0 -24.6 1.2 0 0 -22.1 1.3 0 0 -15.2 1.3 0 0 -5.3 1.2 0 0 5.7 1.3 0 0 15.5 1.3 0 0 22.2 1.2 0 0 24.6 1.3 0 0 22.1 1.3 0 0 15.2 1.2 0 0 7.9 1.3 0 0 -6 1.3 0 0 -16.2 1.2 0 0 -23.3 1.3 0 0 -25.8 1.3 0 0 -23.1 1.2 0 0 -15.9 1.3 0 0 -5.5 1.3 0 0 6 1.2 0 0 16.2 1.3 0 0 23.4 1.3 0 0 25.7 1.2 0 0 23.1 1.3 0 0 15.9 1.3 0 0 3.8 1.2 0 0 -5.8 1.3 0 0 -15.8 1.3 0 0 -22.7 1.2 0 0 -25 1.3 0 0 -22.4 1.3 0 0 -15.4 1.2 0 0 -5.3 1.3 0 0 5.8 1.3 0 0 15.8 1.2 0 0 22.7 1.3 0 0 25 1.3 0 0 22.4 1.2 0 0 15.4 1.3 0 0 4.3 1.3 0 0 -5.8 1.2 0 0 -15.5 1.3 0 0 -22.2 1.3 0 0 -24.6 1.2 0 0 -22 1.3 0 0 -15.1 1.2 0 0 -5.2 1.3 0 0 5.8 1.3 0 0 15.5 1.2 0 0 22.3 1.3 0 0 24.5 1.3 0 0 22 1.2 0 0 15.1 1.3 0 0 5.2 1.3 0 0 -5.8 1.2 0 0 -15.5 1.3 0 0 -22.3 1.3 0 0 -24.6 1.2 0 0 -22 1.3 0 0 -15 1.3 0 0 -5.2 1.2 0 0 5.8 1.3 0 0 15.6 1.3 0 0 22.3 1.2 0 0 24.5 1.3 0 0 22 1.3 0 0 15.1 1.2 0 0 4.5 1.3 0 0 -5.8 1.3 0 0 -15.4 1.2 0 0 -22 1.3 0 0 -24.3 1.3 0 0 -21.8 1.2 0 0 -14.8 1.3 0 0 -5.1 1.3 0 0 5.8 1.2 0 0 15.4 1.3 0 0 22.1 1.3 0 0 24.3 1.2 0 0 21.7 1.3 0 0 14.8 1.3 0 0 4.6 1.2 0 0 -5.7 1.3 0 0 -15.3 1.3 0 0 -21.9 1.2 0 0 -24.1 1.3 0 0 -21.5 1.3 0 0 -14.8 1.2 0 0 -4.9 1.3 0 0 5.7 1.3 0 0 15.3 1.2 0 0 21.9 1.3 0 0 24.1 1.3 0 0 21.6 1.2 0 0 14.7 1.3 0 0 5.2 1.2 0 0 -5.7 1.3 0 0 -15.5 1.3 0 0 -22 1.2 0 0 -24.2 1.3 0 0 -21.7 1.3 0 0 -14.8 1.2 0 0 -4.9 1.3 0 0 5.8 1.3 0 0 15.4 1.2 0 0 22 1.3 0 0 24.3 1.3 0 0 21.6 1.2 0 0 14.8 1.3 0 0 7.3 1.3 0 0 -6.1 1.2 0" fill="none" stroke="#38bcc6" stroke-width="1.6" stroke-linejoin="miter"/>
<path d="M3 548.5l0.6 -2.7 0.5 -0.3 0.5 0.5 0.6 -0.5 0.5 -3.4 0.6 -1.9 0.5 0.8 0.6 -2.2 0.5 -3.5 0.6 -2.6 0.5 -0.2 0.6 -1.9 0.6 -4 0.5 -3.4 0.6 -0.6 0.5 -2.1 0.6 -4.4 0.5 -3.3 0.6 -1 0.5 -2.1 0.6 -5.7 0.5 -2.1 0.6 -1.3 0.5 -2.6 0.6 -4.6 0.5 -2.4 0.6 0.1 0.5 -2.7 0.6 -3.7 0.5 -2 0.6 -0.1 0.5 -1.3 0.6 -3.9 0.5 -1.4 0.6 1.1 0.5 -0.1 0.6 -2.9 0.5 -0.6 0.6 2.1 0.5 0.1 0.6 -1.8 0.5 0.9 0.6 2.7 0.5 0.7 0.6 -0.4 0.5 1.3 0.6 4 0.5 1.8 0.6 -0.3 0.5 2.8 0.6 3.5 0.5 3 0.6 1.1 0.5 2.1 0.6 5.3 0.5 2.8 0.6 1.8 0.5 3.2 0.6 5 0.5 3.8 0.6 0.8 0.5 3.6 0.5 5.2 0.6 3.4 0.5 1.1 0.6 3.4 0.5 5.1 0.6 2.6 0.5 1 0.6 2 0.5 5.1 0.6 2.4 0.5 0.6 0.6 1.6 0.5 3.2 0.6 1.8 0.5 -0.4 0.6 0.2 0.5 3.3 0.6 0.4 0.5 -1.7 0.6 -0.2 0.5 2.5 0.6 -1 0.5 -2.5 0.6 -1 0.5 1.2 0.6 -2.1 0.5 -3.3 0.6 -2 0.5 0.2 0.6 -2.3 0.5 -4.5 0.6 -3.5 0.5 -0.8 0.6 -2.9 0.5 -4.7 0.6 -3.4 0.5 -2.2 0.6 -3.4 0.5 -5.5 0.6 -3.8 0.5 -1.4 0.6 -3.4 0.5 -6 0.6 -4 0.5 -1.2 0.6 -3.4 0.5 -5.3 0.6 -3 0.5 -1.5 0.6 -3.1 0.5 -4.8 0.6 -2.9 0.5 -1.2 0.6 -1.3 0.5 -4.3 0.6 -1.9 0.5 0.2 0.6 -1.7 0.5 -3.2 0.6 -1.3 0.5 1.8 0.6 -0.8 0.5 -2.1 0.6 0.1 0.5 2.3 0.6 1 0.5 -1.3 0.6 1 0.5 3.5 0.6 1.8 0.5 0.2 0.6 1.7 0.5 5.2 0.6 2.4 0.5 0.3 0.6 2.9 0.5 5.1 0.6 3.4 0.5 1.1 0.6 4.1 0.5 5.6 0.6 3.2 0.5 1.7 0.6 3.1 0.5 5.7 0.6 4.1 0.5 1.5 0.6 4.1 0.5 4.8 0.6 3.4 0.5 2.3 0.6 2.7 0.5 4.6 0.6 3.5 0.5 0.3 0.6 2.9 0.5 4.8 0.6 2.2 0.5 -0.2 0.6 1.1 0.5 3.6 0.6 1.1 0.5 -0.3 0.6 0.3 0.5 2.7 0.6 -0.1 0.5 -2.1 0.6 0.1 0.5 1.6 0.6 -0.8 0.5 -3.1 0.6 -1.4 0.5 0.3 0.6 -2.1 0.5 -3.6 0.6 -2.5 0.5 -0.7 0.6 -2.4 0.5 -4.4 0.6 -3 0.5 -0.5 0.6 -2.7 0.5 -5.7 0.6 -2.8 0.5 -1.3 0.6 -3.2 0.5 -6 0.6 -3.6 0.5 -1.4 0.6 -3.2 0.5 -5.2 0.6 -2.9 0.5 -0.9 0.6 -2.9 0.5 -5.2 0.6 -2.7 0.5 -0.5 0.6 -3.1 0.5 -3.6 0.6 -2 0.5 0 0.6 -1.6 0.5 -3.8 0.6 -1.7 0.5 1.6 0.6 -1.1 0.5 -2.1 0.6 -0.3 0.5 1.3 0.6 0.2 0.5 -1 0.6 0.2 0.5 2.2 0.6 1.1 0.5 -0.7 0.6 2 0.5 3.5 0.6 1.2 0.5 0.7 0.6 2.1 0.5 3.9 0.6 2.2 0.5 0.7 0.6 2.1 0.5 4.5 0.6 3.8 0.5 0.5 0.6 2.5 0.5 5.3 0.6 2.4 0.5 1.3 0.6 2.6 0.5 4.1 0.6 2.8 0.5 0.7 0.6 2.3 0.5 4.7 0.6 2.1 0.5 0.3 0.6 1.6 0.5 4.6 0.6 1.2 0.5 -0.4 0.6 1.3 0.5 3.5 0.6 0.6 0.5 -0.8 0.6 0 0.5 2.4 0.6 0.2 0.5 -2.5 0.6 0 0.5 1.3 0.6 -0.7 0.5 -2 0.6 -1.8 0.5 1.1 0.6 -0.9 0.5 -3.7 0.6 -2 0.5 0.4 0.6 -1.7 0.5 -3.7 0.6 -2.9 0.5 0.3 0.6 -2.4 0.6 -4.3 0.5 -1.9 0.6 -0.6 0.5 -2.2 0.6 -4.1 0.5 -2.3 0.6 -0.8 0.5 -1.9 0.6 -4.2 0.5 -2.2 0.6 0.2 0.5 -2 0.6 -3.6 0.5 -1.9 0.6 1 0.5 -1.5 0.6 -3 0.5 -1.1 0.6 0.5 0.5 -0.3 0.6 -2.1 0.5 -0.6 0.6 1.1 0.5 0.2 0.6 -1.5 0.5 -0.1 0.6 2.7 0.5 0.7 0.6 -0.5 0.5 1 0.6 3.3 0.5 0.7 0.6 0.1 0.5 1.4 0.6 3.2 0.5 2.7 0.6 0 0.5 1.1 0.6 4.8 0.5 1.7 0.6 0.2 0.5 2.6 0.6 4 0.5 1.6 0.6 0.4 0.5 2.1 0.6 3.9 0.5 2 0.6 0.1 0.5 2.1 0.6 3 0.5 2.3 0.6 -0.6 0.5 0.8 0.6 3.5 0.5 1.5 0.6 -1.1 0.5 0.1 0.6 3.5 0.5 0.3 0.6 -1.5 0.5 -1 0.6 2 0.5 -0.4 0.6 -1.8 0.5 -1.3 0.6 0.9 0.5 -0.6 0.6 -2.7 0.5 -1.6 0.6 -0.1 0.5 -1.6 0.6 -3 0.5 -2.5 0.6 0.1 0.5 -2.6 0.6 -4.2 0.5 -1.9 0.6 -0.6 0.5 -2.6 0.6 -3.6 0.5 -2.9 0.6 -0.3 0.5 -3 0.6 -3.6 0.5 -3.3 0.6 0.4 0.5 -2.5 0.6 -4.2 0.5 -2 0.6 0.4 0.5 -2.3 0.6 -3.8 0.5 -1.2 0.6 0.3 0.5 -1.1 0.6 -2.9 0.5 -1.1 0.6 1.5 0.5 -0.1 0.6 -2.2 0.5 0.3 0.6 1.7 0.5 0.8 0.6 -1.6 0.5 0.8 0.6 2.7 0.5 1.6 0.6 -0.7 0.5 2.2 0.6 3.6 0.5 1.7 0.6 0.5 0.5 2.6 0.6 3.5 0.5 3.4 0.6 0.3 0.5 2.7 0.6 5.2 0.5 2.6 0.6 1 0.5 3.1 0.6 5.2 0.5 2.5 0.6 1.5 0.5 2.7 0.6 4.8 0.5 2.7 0.6 0.7 0.5 2.2 0.6 4.5 0.5 2.5 0.6 0.9 0.5 1.5 0.6 3.7 0.5 1.8 0.6 0.3 0.5 1.2 0.6 2.9 0.5 0.6 0.6 -1.4 0.5 0.3 0.6 2.3 0.5 -0.2 0.6 -2 0.5 -0.9 0.6 1.9 0.5 -0.9 0.6 -3.6 0.5 -2 0.6 1 0.5 -2.4 0.6 -4.1 0.5 -2.8 0.6 -0.2 0.5 -2.4 0.6 -4.8 0.5 -3.4 0.6 -0.8 0.5 -3.5 0.6 -5.1 0.5 -3.6 0.6 -1.2 0.5 -3.7 0.6 -5.4 0.5 -3.4 0.6 -1.5 0.5 -3 0.6 -5.4 0.5 -3.2 0.6 -1.3 0.5 -2.9 0.6 -4.8 0.5 -3.4 0.6 -0.8 0.5 -1.7 0.6 -5.1 0.5 -1.7 0.6 0 0.5 -2.1 0.6 -2.6 0.5 -1.3 0.6 0.8 0.5 -0.5 0.6 -2.3 0.5 -1 0.6 2.5 0.5 0.5 0.6 -1.1 0.5 0.8 0.6 3.1 0.5 1.3 0.6 0 0.5 1.5 0.6 4.1 0.5 2 0.6 0.3 0.5 2.7 0.6 5.1 0.5 2.9 0.6 1.9 0.5 3 0.6 5.4 0.5 3.7 0.6 1.7 0.5 3.3 0.6 5.2 0.5 4.6 0.6 1.7 0.5 3.3 0.6 5.7 0.5 3.8 0.6 1 0.5 3.9 0.6 4.8 0.5 3.1 0.6 1.2 0.5 3.2 0.6 4.1 0.5 3.2 0.6 0.5 0.5 1.4 0.6 3.6 0.5 1.8 0.6 -0.4 0.5 1 0.6 2.6 0.5 0.7 0.6 -2.3 0.5 0 0.6 1.8 0.5 0.1 0.6 -3.2 0.5 -1 0.6 0.1 0.5 -1.3 0.6 -3.6 0.5 -1.7 0.6 -0.3 0.5 -2.3 0.6 -5 0.5 -2.7 0.6 -1 0.5 -3 0.6 -5.5 0.5 -2.7 0.6 -2.2 0.5 -2.6 0.6 -5.5 0.5 -4.7 0.6 -1.2 0.5 -3.1 0.6 -5.4 0.5 -4.2 0.6 -1.6 0.5 -3.4 0.6 -4.5 0.5 -4.1 0.6 -0.7 0.5 -3.2 0.6 -4.3 0.5 -2.3 0.6 -1.2 0.5 -1.4 0.6 -4.2 0.5 -1.5 0.6 0.2 0.5 -1.6 0.6 -2.3 0.5 -1.4 0.6 1 0.5 -0.2 0.6 -1.5 0.5 0 0.6 2.3 0.5 0.7 0.6 -0.8 0.5 1 0.6 3.9 0.5 0.9 0.6 0.6 0.5 1.9 0.6 3.5 0.5 3.3 0.6 0.4 0.5 2.7 0.6 4.1 0.5 3.1 0.6 1.1 0.5 3.5 0.6 4.7 0.5 3.1 0.6 1.3 0.5 2.9 0.6 4.9 0.5 3.3 0.6 1.9 0.5 2.3 0.6 5.6 0.5 2.3 0.6 0.8 0.5 2.8 0.6 4.1 0.5 2.6 0.6 0.8 0.5 1.8 0.6 3.7 0.5 1.5 0.6 -0.2 0.5 1 0.6 2.6 0.5 1.1 0.6 -2.1 0.5 0.8 0.6 1.8 0.5 0.3 0.6 -2.4 0.5 -1.1 0.6 1 0.5 0.1 0.6 -4 0.5 -1.1 0.6 0.3 0.5 -1.6 0.6 -3.4 0.5 -1.9 0.6 -0.8 0.5 -1.8 0.6 -4.6 0.5 -2.3 0.6 -0.7 0.5 -2.7 0.6 -4.6 0.5 -2.7 0.6 0 0.5 -2.9 0.6 -4.9 0.5 -2 0.6 -0.5 0.5 -2.8 0.6 -4.7 0.5 -2.4 0.6 -0.3 0.5 -1.6 0.6 -4.2 0.5 -1.8 0.6 0.4 0.5 -1 0.6 -3 0.5 -1.4 0.6 0.7 0.5 -0.6 0.6 -2.4 0.5 -0.7 0.6 1.7 0.5 -0.1 0.6 -1.5 0.5 0.9 0.6 1.7 0.5 1.2 0.6 -0.9 0.5 1.2 0.6 2.6 0.5 1.5 0.6 -0.4 0.5 1.6 0.6 3.8 0.5 2.6 0.6 -0.2 0.5 2 0.6 3.2 0.5 2.3 0.6 0.9 0.5 2.3 0.6 3.8 0.5 2.5 0.6 -0.4 0.5 2.4 0.6 4.7 0.5 2.1 0.6 0 0.5 1.9 0.6 3 0.5 1.7 0.6 -0.4 0.5 1.7 0.6 3.4 0.5 1.5 0.6 -1.2 0.5 0.6 0.6 2.7 0.5 0.3 0.6 -1.6 0.5 -0.5 0.6 2.6 0.5 -0.6 0.6 -1.7 0.5 -1.1 0.6 0.9 0.5 -1 0.6 -2.9 0.5 -1 0.6 0.7 0.5 -2 0.6 -3.7 0.5 -1.4 0.6 0.1 0.5 -2 0.6 -4.2 0.5 -1.8 0.6 -0.8 0.5 -1.8 0.6 -4 0.5 -1.9 0.6 -0.5 0.5 -1.9 0.6 -4.5 0.5 -2.5 0.6 -0.1 0.5 -1.1 0.6 -4.1 0.5 -2.4 0.6 0.1 0.5 -1 0.6 -3.2 0.5 -1.6 0.6 0.7 0.5 -0.4 0.6 -2.5 0.5 -1.5 0.6 1.4 0.5 0.2 0.6 -1.9 0.5 0.2 0.6 1.9 0.5 1.3 0.6 -1.4 0.5 0.6 0.6 2.7 0.5 2.2 0.6 -1.2 0.5 2 0.6 3.1 0.5 2 0.6 0.6 0.5 1.5 0.6 4.9 0.5 2.1 0.6 0.1 0.5 2.4 0.6 4.7 0.5 3 0.6 1 0.5 1.7 0.6 4.8 0.5 2.6 0.6 1.3 0.5 1.5 0.6 4.4 0.5 2.5 0.6 0.6 0.5 2.5 0.6 3.9 0.5 1.9 0.6 0 0.5 1.3 0.6 2.8 0.5 1.1 0.6 -0.2 0.5 0.5 0.6 1.8 0.5 1.2 0.6 -2.2 0.5 -0.2 0.6 1.7 0.5 -0.5 0.6 -2.9 0.5 -0.8 0.6 0.9 0.5 -0.7 0.6 -4.3 0.5 -1.1 0.6 -0.7 0.5 -1.9 0.6 -3.8 0.5 -2.6 0.6 -1 0.5 -2.9 0.6 -4.4 0.5 -3.2 0.6 -0.5 0.5 -3.6 0.6 -5 0.5 -2.8 0.6 -2 0.5 -2.7 0.6 -4.7 0.5 -3.3 0.6 -1.8 0.5 -2.9 0.6 -4.8 0.5 -2.1 0.6 -1.4 0.5 -1.9 0.6 -4.2 0.5 -2.9 0.6 -0.1 0.5 -1 0.6 -4 0.5 -1.9 0.6 1.3 0.5 -1.3 0.6 -2.7 0.5 -0.9 0.6 2.5 0.5 0.3 0.6 -2 0.5 0.7 0.6 1.8 0.5 1.4 0.6 -0.5 0.5 1.8 0.6 3.7 0.5 1.5 0.6 0.1 0.5 2.4 0.6 4.6 0.5 3.3 0.6 0.1 0.5 3.5 0.6 5.1 0.5 3.5 0.6 1.4 0.5 3.1 0.6 5.2 0.5 3.7 0.6 1.7 0.5 3.9 0.6 4.8 0.5 3.8 0.6 2.1 0.5 2.8 0.6 5.1 0.5 3.4 0.6 1.6 0.5 2.6 0.6 5.5 0.5 2.7 0.6 0.5 0.5 1.4 0.6 3.8 0.5 2 0.6 0 0.5 1.4 0.6 2.8 0.5 0.8 0.6 -1.3 0.5 0.4 0.6 2 0.5 0 0.6 -2.4 0.5 -1.1 0.6 0.4 0.5 -0.4 0.6 -4.1 0.5 -1.6 0.6 -0.3 0.5 -1.7 0.6 -4.9 0.5 -2.8 0.6 -0.8 0.5 -3 0.6 -4.4 0.5 -3.7 0.6 -1.7 0.5 -3.2 0.6 -5 0.5 -4.3 0.6 -2 0.5 -3 0.6 -5.8 0.5 -3.5 0.6 -2.6 0.5 -3.1 0.6 -5.2 0.5 -3.5 0.6 -1.3 0.5 -3.9 0.6 -4.8 0.5 -3.3 0.6 -0.6 0.5 -1.7 0.6 -4.7 0.5 -1.9 0.6 -0.5 0.5 -1 0.6 -3.8 0.5 -1.5 0.6 1.6 0.5 -0.3 0.6 -3.2 0.5 0.2 0.6 2.1 0.5 0.2 0.6 -1.2 0.5 0.6 0.6 3.2 0.5 1.6 0.6 0 0.5 1.8 0.6 3.6 0.5 2.2 0.6 0.9 0.5 2.8 0.6 4.3 0.5 3.3 0.6 1 0.5 3.6 0.6 5 0.5 3.1 0.6 1.5 0.5 3.6 0.6 5.6 0.5 3.7 0.6 1 0.5 3.4 0.6 5.8 0.5 3.2 0.6 1.1 0.5 3 0.6 5.6 0.5 2.4 0.6 1 0.5 2.1 0.6 4.4 0.5 2.8 0.6 0.1 0.5 1 0.6 3.3 0.5 2 0.6 -1.5 0.5 0.5 0.6 3.5 0.5 0 0.6 -1.5 0.5 -0.7 0.6 2.1 0.5 -0.9 0.6 -3.1 0.5 -1.4 0.6 1.2 0.5 -1.2 0.6 -3.4 0.5 -2.9 0.6 0.5 0.5 -2.4 0.6 -4.2 0.5 -3 0.6 -0.5 0.5 -2.4 0.6 -4.3 0.5 -3.9 0.6 -0.6 0.5 -2.5 0.6 -4.8 0.5 -3.9 0.6 -1.1 0.5 -2 0.6 -4.9 0.5 -3.5 0.6 -1.2 0.5 -1.7 0.6 -5.1 0.5 -2.1 0.6 -0.6 0.5 -1.8 0.6 -4.7 0.5 -1.3 0.6 -0.3 0.5 -1.1 0.6 -2.8 0.5 -1.3 0.6 0.5 0.5 -0.5 0.6 -2.3 0.5 -0.3 0.6 1.8 0.5 0.1 0.6 -1.5 0.5 0.9 0.6 3 0.5 0.2 0.6 -0.3 0.5 1.4 0.6 2.7 0.5 2.6 0.6 -0.9 0.5 2.2 0.6 4 0.5 2.4 0.6 -0.1 0.5 2.3 0.6 4.5 0.5 2.4 0.6 0.7 0.5 2.1 0.6 4.5 0.5 2.1 0.6 1.1 0.5 2.1 0.6 4.1 0.5 2.9 0.6 0.2 0.5 1.6 0.6 3.7 0.5 2.2 0.6 -0.6 0.5 1.4 0.6 3.7 0.5 1.1 0.6 -0.6 0.5 0.9 0.6 2.2 0.5 1.3 0.6 -2.1 0.5 0.6 0.6 2.1 0.5 -0.3 0.6 -2.8 0.5 -0.3 0.6 1.2 0.5 -0.2 0.6 -3.8 0.5 -0.7 0.6 0.8 0.5 -1.6 0.6 -3.5 0.5 -2.5 0.6 1 0.5 -2.3 0.6 -3.5 0.5 -2.2 0.6 -0.9 0.5 -1.4 0.6 -4 0.5 -3.2 0.6 0.1 0.5 -1.6 0.6 -4.7 0.5 -1.5 0.6 -0.6 0.5 -1.3 0.6 -4.5 0.5 -1.5 0.6 0.8 0.5 -2.1 0.6 -3.3 0.5 -1.1 0.6 0.7 0.5 -1.1 0.6 -2.6 0.5 -0.7 0.6 2.3 0.5 -0.4 0.6 -1.8 0.5 -0.7 0.6 2.9 0.5 -0.1 0.6 -0.9 0.5 0.8 0.6 2.7 0.5 1.8 0.6 -1 0.5 1.3 0.6 3.9 0.5 1.1 0.6 0.8 0.5 1.4 0.6 3.8 0.5 2.7 0.6 -0.3 0.5 2.8 0.6 3.8 0.5 2.3 0.6 0.7 0.5 1.9 0.6 4 0.5 3 0.6 -0.4 0.5 2.8 0.6 3.5 0.5 2.5 0.6 0.2 0.5 1.3 0.6 3.7 0.5 1.3 0.6 -0.9 0.5 1.1 0.6 3.1 0.5 1.4 0.6 -1.4 0.5 0.4 0.6 2.6 0.5 -0.5 0.6 -2 0.5 0 0.6 0.8 0.5 -0.5 0.6 -2.6 0.5 -1.4 0.6 0.9 0.5 -1.4 0.6 -3.3 0.5 -1.9 0.6 -0.4 0.5 -1.5 0.6 -4.4 0.5 -2.8 0.6 0.3 0.5 -3.1 0.6 -4.8 0.5 -2.9 0.5 -0.2 0.6 -2.4 0.5 -4.9 0.6 -3.3 0.5 -1 0.6 -2.9 0.5 -4.1 0.6 -2.8 0.5 -0.9 0.6 -2 0.5 -4.6 0.6 -1.9 0.5 -0.3 0.6 -2.3 0.5 -3.1 0.6 -2.7 0.5 1.1 0.6 -1.3 0.5 -3.1 0.6 -1.2 0.5 2.1 0.6 -1 0.5 -1.6 0.6 0.4 0.5 1.4 0.6 0.8 0.5 -0.8 0.6 0.8 0.5 3.3 0.6 1.8 0.5 -1 0.6 1.9 0.5 4 0.6 2.1 0.5 1.3 0.6 2.3 0.5 4.7 0.6 2.3 0.5 1.8 0.6 2.8 0.5 4.9 0.6 3.7 0.5 1 0.6 3 0.5 5.2 0.6 3.6 0.5 1.1 0.6 3.5 0.5 5.6 0.6 3.3 0.5 1.2 0.6 2.7 0.5 4.3 0.6 3.2 0.5 0.4 0.6 2.6 0.5 3.9 0.6 1.8 0.5 0.2 0.6 1.7 0.5 2.6 0.6 1.9 0.5 -2 0.6 0.7 0.5 2.2 0.6 0.8 0.5 -2 0.6 -0.8 0.5 0.9 0.6 -0.3 0.5 -3.7 0.6 -1.7 0.5 1 0.6 -2.1 0.5 -4 0.6 -2.5 0.5 -0.3 0.6 -3.1 0.5 -4.5 0.6 -3.3 0.5 -1.1 0.6 -3.6 0.5 -5.1 0.6 -3.8 0.5 -1.9 0.6 -3.6 0.5 -5.2 0.6 -4.4 0.5 -0.8 0.6 -4.3 0.5 -5.7 0.6 -3.6 0.5 -0.6 0.6 -3.8 0.5 -5.4 0.6 -3.4 0.5 -0.9 0.6 -2 0.5 -4.6 0.6 -2.4 0.5 -0.2 0.6 -2.5 0.5 -3.1 0.6 -1.8 0.5 1.2 0.6 -0.8 0.5 -2.6 0.6 -1.4 0.5 2.6 0.6 0.3 0.5 -1.6 0.6 -0.3 0.5 3 0.6 1.2 0.5 -0.7 0.6 2.4 0.5 3.8 0.6 2.1 0.5 0.6 0.6 2.2 0.5 4.3 0.6 2.9 0.5 1.1 0.6 3.7 0.5 4.7 0.6 3.7 0.5 1.7 0.6 3 0.5 5.8 0.6 3.9 0.5 2.1 0.6 3.2 0.5 5.6 0.6 4.3 0.5 1.1 0.6 3.7 0.5 5.1 0.6 2.7 0.5 1.5 0.6 2.8 0.5 5.1 0.6 2.3 0.5 0.8 0.6 1.8 0.5 3.7 0.6 2.5 0.5 -1.3 0.6 1.9 0.5 2.3 0.6 0.7 0.5 -1.3 0.6 0.7 0.5 2.1 0.6 -1.1 0.5 -2 0.6 -1 0.5 1.3 0.6 -1.8 0.5 -3.1 0.6 -2.1 0.5 0.6 0.6 -2.6 0.5 -3.6 0.6 -3.3 0.5 -0.8 0.6 -2.2 0.5 -5.1 0.6 -3.6 0.5 -0.6 0.6 -3.7 0.5 -4.5 0.6 -3.6 0.5 -1.2 0.6 -3.4 0.5 -5.6 0.6 -3.4 0.5 -1.3 0.6 -2.5 0.5 -5.9 0.6 -2.3 0.5 -1.8 0.6 -2.4 0.5 -4.6 0.6 -1.9 0.5 -0.7 0.6 -2.1 0.5 -3.4 0.6 -2.5 0.5 0.8 0.6 -1.1 0.5 -2.8 0.6 -0.9 0.5 1.2 0.6 -0.5 0.5 -2.1 0.6 -0.2 0.5 3 0.6 0.5 0.5 -1.1 0.6 0.3 0.5 3.4 0.6 1.9 0.5 -0.6 0.6 1.2 0.5 4.2 0.6 2.7 0.5 -0.4 0.6 2.2 0.5 4.5 0.6 3.1 0.5 0.9 0.6 1.8 0.5 4.8 0.6 3 0.5 0.9 0.6 2.9 0.5 4.4 0.6 3.1 0.5 0.6 0.6 3.3 0.5 4.3 0.6 2 0.5 1.3 0.6 1.2 0.5 4.4 0.6 2.7 0.5 -0.3 0.6 1.5 0.5 3.1 0.6 1.2 0.5 -0.4 0.6 0.3 0.5 2.8 0.6 0.9 0.5 -2 0.6 0.4 0.5 2.3 0.6 -0.3 0.5 -2.6 0.6 -0.6 0.5 1 0.6 -1.2 0.5 -2.7 0.6 -1.7 0.5 0.9 0.6 -1.4 0.5 -4.2 0.6 -1.8 0.5 0.1 0.6 -2.2 0.5 -4.4 0.6 -1.8 0.5 -0.2 0.6 -2.2 0.5 -4.4 0.6 -2.3 0.5 -0.5 0.6 -2.2 0.5 -4.4 0.6 -2.5 0.5 0.1 0.6 -2.4 0.5 -3.7 0.6 -1.6 0.5 0.2 0.6 -1.6 0.5 -3.8 0.6 -1.3 0.5 0.8 0.6 -0.7 0.5 -3.1 0.6 -0.5 0.5 1.7 0.6 -1 0.5 -1.6 0.6 0 0.5 1.8 0.6 0.6 0.5 -0.9 0.6 -0.4 0.5 3.4 0.6 0.8 0.5 -0.1 0.6 1.3 0.5 3.1 0.6 1.3 0.5 0.2 0.6 1.7 0.5 4.1 0.6 1.9 0.5 0.2 0.6 2.2 0.5 3.8 0.6 2.2 0.5 0.7 0.6 1.3 0.5 4.6 0.6 2 0.5 0.4 0.6 1.3 0.5 4.7 0.6 1.4 0.5 -0.5 0.6 1.7 0.5 3.6 0.6 1.1 0.5 -0.4 0.6 1 0.5 3.1 0.6 0.6 0.5 -1.5 0.6 0.2 0.5 2.7 0.6 0.4 0.5 -2.6 0.6 -0.7 0.5 2 0.6 -1 0.5 -3 0.6 -1.3 0.5 1.4 0.6 -1.2 0.5 -3.7 0.6 -2 0.5 0.3 0.6 -2.1 0.5 -3.3 0.6 -2.9 0.5 0 0.6 -2 0.5 -4.4 0.6 -2.9 0.5 -0.6 0.6 -2.1 0.5 -4.9 0.6 -1.9 0.5 -0.9 0.6 -1.7 0.5 -4.9 0.6 -2.3 0.5 -0.3 0.6 -1.8 0.5 -4.1 0.6 -2.1 0.5 1 0.6 -1.8 0.5 -3.4 0.6 -1.3 0.5 1.2 0.6 -0.7 0.5 -2.4 0.6 -0.5 0.5 1.4 0.6 0.8 0.5 -1.9 0.6 -0.5 0.5 3.4 0.6 1 0.5 -1 0.6 0.4 0.5 4.2 0.6 1.5 0.5 -0.8 0.6 1.9 0.5 5 0.6 2.2 0.5 0 0.6 2.3 0.5 4.7 0.6 3 0.5 1.4 0.6 2.3 0.5 4.7 0.6 3.9 0.5 0.9 0.6 2.3 0.5 5.7 0.6 2.8 0.5 1.1 0.6 2.6 0.5 4.9 0.6 2.7 0.5 0.6 0.6 1.6 0.5 4.7 0.6 2.1 0.5 0.2 0.6 1.2 0.5 4 0.6 1.1 0.5 -1.1 0.6 0.7 0.5 2.5 0.6 1 0.5 -2.3 0.6 0.2 0.5 1.4 0.6 -0.1 0.5 -2.7 0.6 -1.1 0.5 1 0.6 -2.2 0.5 -2.8 0.6 -2.5 0.5 0 0.6 -2.1 0.5 -4.3 0.6 -3.3 0.5 -0.8 0.6 -2.2 0.5 -6 0.6 -2.8 0.5 -1.3 0.6 -3.8 0.5 -4.9 0.6 -3.5 0.5 -1.3 0.6 -3.9 0.5 -4.8 0.6 -4.1 0.5 -1.4 0.6 -2.8 0.5 -6 0.6 -2.6 0.5 -1.1 0.6 -3 0.5 -4.1 0.6 -3.2 0.5 -0.2 0.6 -2 0.5 -3.6 0.6 -2.4 0.5 0.7 0.6 -1 0.5 -2.9 0.6 -0.5 0.5 0.9 0.6 0.5 0.5 -2.3 0.6 0.3 0.5 2.4 0.6 1.2 0.5 -0.4 0.6 0.9 0.5 3.7 0.6 1.6 0.5 0.1 0.6 2.1 0.5 4.8 0.6 2.9 0.5 1 0.6 2.2 0.5 5.8 0.6 3.6 0.5 1.1 0.6 2.9 0.5 5.9 0.6 3.5 0.5 1.9 0.6 4.3 0.5 5.3 0.6 3.9 0.5 1.8 0.6 3.6 0.5 5.2 0.6 3.6 0.5 1.3 0.6 3.1 0.5 4.9 0.6 3.1 0.5 0.2 0.6 2.8 0.5 4 0.6 2.5 0.5 -0.8 0.6 1.6 0.5 3.1 0.6 2 0.5 -1 0.6 0.1 0.5 2 0.6 0.6 0.5 -2.2 0.6 -0.9 0.5 0.9 0.6 -0.9 0.5 -3.1 0.6 -1.8 0.5 0.3 0.6 -1.6 0.5 -3.9 0.6 -3.4 0.5 -0.1 0.6 -3.2 0.5 -4.8 0.6 -2.6 0.5 -1.5 0.6 -2.8 0.5 -5.9 0.6 -4 0.5 -1.2 0.6 -3.2 0.5 -5.3 0.6 -3.7 0.5 -2.1 0.6 -3.4 0.5 -5.8 0.6 -3 0.5 -1.7 0.6 -3.1 0.5 -5.2 0.6 -3.1 0.5 -0.1 0.6 -3 0.5 -3.5 0.6 -3.2 0.5 0.8 0.6 -2.4 0.5 -3.6 0.6 -0.7 0.5 0.4 0.6 -0.2 0.5 -3.1 0.6 -0.6 0.5 2.7 0.6 0.3 0.5 -1.4 0.6 0.4 0.5 2.2 0.6 1.9 0.5 -0.5 0.6 1.2 0.5 4.2 0.6 1.5 0.5 0.9 0.6 1.9 0.5 3.8 0.6 2.8 0.5 1.4 0.6 2.9 0.5 4.3 0.6 3.4 0.5 1.5 0.6 2.5 0.5 5.8 0.6 3 0.5 0.7 0.6 3.3 0.5 5.3 0.6 3.1 0.5 1.2 0.6 2.1 0.5 5.4 0.6 2.3 0.5 0.8 0.6 2.2 0.5 3.9 0.6 2.1 0.5 0.2 0.6 1.6 0.5 3.3 0.6 1.1 0.5 -1.3 0.6 0.4 0.5 3.4 0.6 0.2 0.5 -1.7 0.6 -0.8 0.5 2 0.6 -0.1 0.5 -2.8 0.6 -1.4 0.5 0.6 0.6 -1.1 0.5 -3 0.6 -2.4 0.5 0.5 0.6 -1.9 0.5 -3.8 0.6 -2.5 0.5 -0.9 0.6 -2.5 0.5 -4.2 0.6 -2.6 0.5 -0.4 0.6 -2.3 0.5 -4.5 0.6 -3.6 0.5 0.1 0.6 -2.4 0.5 -4.5 0.6 -2.8 0.5 -0.7 0.6 -1.6 0.5 -4.2 0.6 -2.3 0.5 0.3 0.6 -2.2 0.5 -3.9 0.6 -1.1 0.5 0.9 0.6 -1.5 0.5 -2.4 0.6 -0.7 0.5 0.7 0.6 0.1 0.5 -2.1 0.6 -0.3 0.5 1.9 0.6 0.6 0.5 -0.9 0.6 0.6 0.5 2.6 0.6 0.8 0.5 0 0.6 1.2 0.5 3 0.6 2.1 0.5 0.1 0.6 1.8 0.5 3.5 0.6 2.2 0.5 0.2 0.6 1.6 0.5 4.2 0.6 2.4 0.5 0.7 0.6 1.8 0.5 4.4 0.6 2.1 0.5 0.3 0.6 1.5 0.5 3.8 0.6 3 0.5 -0.8 0.6 1.3 0.5 4 0.6 1.7 0.5 -1.3 0.6 1.4 0.5 2.7 0.6 1.1 0.5 -1.8 0.6 0.3 0.5 3.2 0.6 0.1 0.5 -2.4 0.6 -0.3 0.5 1.2 0.6 0.1 0.5 -3.1 0.6 -0.6 0.5 0.7 0.6 -1.1 0.5 -3.2 0.6 -2.4 0.5 0.1 0.6 -1.4 0.5 -3.9 0.6 -2.2 0.5 -0.1 0.6 -1.5 0.5 -3.8 0.6 -2.8 0.5 0.3 0.6 -2.2 0.5 -5 0.6 -1.8 0.5 -0.4 0.6 -2.3 0.5 -3.2 0.6 -2.8 0.5 0.4 0.6 -1.6 0.5 -3.3 0.6 -2 0.5 0.3 0.6 -1.1 0.5 -3.4 0.6 -0.3 0.5 1.3 0.6 -1.3 0.5 -2.5 0.6 -0.2 0.5 2 0.6 0.9 0.5 -1.6 0.6 0.3 0.5 1.9 0.6 1.8 0.5 -1 0.6 1.1 0.5 3.7 0.6 0.9 0.5 -0.2 0.6 2.4 0.5 4.2 0.6 2 0.5 -0.1 0.6 2.6 0.5 4.5 0.6 2.1 0.5 0.8 0.6 2.4 0.5 4.5 0.6 3.1 0.5 0.3 0.6 2.6 0.5 4.4 0.6 3.2 0.5 -0.2 0.6 3 0.5 3.7 0.6 2.1 0.5 1 0.6 1 0.5 4.4 0.6 1.6 0.5 -0.5 0.6 0.3 0.5 3.3 0.6 0.6 0.5 -0.6 0.6 0.2 0.5 1.9 0.6 -0.1 0.5 -2.4 0.6 -0.1 0.5 0.9 0.6 -0.7 0.5 -3.6 0.6 -1.4 0.5 0.2 0.6 -0.9 0.5 -4.1 0.6 -2.7 0.5 0.4 0.6 -2.9 0.5 -4.4 0.6 -3.2 0.5 -0.7 0.6 -2.2 0.5 -5.5 0.6 -3.4 0.5 -0.9 0.6 -3.2 0.5 -4.6 0.6 -4.1 0.5 -0.3 0.6 -3.9 0.5 -4.3 0.6 -3.3 0.5 -1.4 0.6 -2.4 0.5 -4.9 0.6 -2.7 0.5 -0.5 0.6 -1.9 0.5 -3.4 0.6 -2 0.5 0.2 0.6 -2.1 0.5 -3 0.6 -0.5 0.5 0.4 0.6 0.3 0.5 -2.7 0.6 0.5 0.5 1.3 0.6 1.4 0.5 -1.7 0.6 0.7 0.5 3.1 0.6 2.4 0.5 -0.6 0.6 1.5 0.5 4.4 0.6 2.9 0.5 -0.1 0.6 2.9 0.5 4.4 0.6 3.3 0.5 1.7 0.6 3.1 0.5 4.9 0.6 3.4 0.5 1.6 0.6 4 0.5 5.4 0.6 3.5 0.5 1.6 0.6 3.8 0.5 5.6 0.6 3.7 0.5 1.1 0.6 2.8 0.5 4.9 0.6 3.8 0.5 0.6 0.6 2.8 0.5 3.8 0.6 3.1 0.5 -0.4 0.6 2.2 0.5 3.6 0.6 1.1 0.5 -1.3 0.6 1.6 0.5 2.1 0.6 0.9 0.5 -2.6 0.6 -0.4 0.5 2.1 0.6 -1 0.5 -3.2 0.6 -1.2 0.5 0.7 0.6 -2.2 0.5 -3.5 0.6 -2.4 0.5 -0.4 0.6 -2.9 0.5 -4.2 0.6 -3 0.5 -1.1 0.6 -3.7 0.5 -4.9 0.6 -4 0.5 -1.2 0.6 -4.2 0.5 -4.9 0.6 -3.7 0.5 -2.2 0.6 -3.6 0.5 -5.6 0.6 -3.8 0.5 -2 0.6 -2.4 0.5 -6.1 0.6 -3.4 0.5 -1.2 0.6 -2.6 0.5 -4.1 0.6 -3.5 0.5 -0.3 0.6 -1.4 0.5 -4.4 0.6 -2 0.5 1.1 0.6 -1.1 0.5 -2.9 0.6 -0.7 0.5 1 0.6 0.8 0.5 -2 0.6 -0.5 0.5 2.7 0.6 1.4 0.5 -0.8 0.6 1 0.5 3.5 0.6 2.3 0.5 -0.2 0.6 2.6 0.5 4.7 0.6 2 0.5 1.3 0.6 3 0.5 4.4 0.6 4 0.5 1.4 0.6 2.7 0.5 5.4 0.6 4.1 0.5 1.1 0.6 3.3 0.5 5.9 0.6 3.4 0.5 1 0.6 3.1 0.5 5.3 0.6 3.3 0.5 1.6 0.6 2.5 0.5 4.8 0.6 2.6 0.5 0.4 0.6 1.2 0.5 4.4 0.6 2.4 0.5 -0.5 0.6 0.5 0.5 3.2 0.6 1.2 0.5 -1.7 0.6 0.4 0.5 1.7 0.6 0.3 0.5 -2.2 0.6 -1.2 0.5 1.2 0.6 -0.1 0.5 -3.4 0.6 -1.5 0.5 0 0.6 -1.5 0.5 -3.9 0.6 -2.4 0.5 -1.2 0.6 -1.8 0.5 -4.9 0.6 -2.5 0.5 -1.2 0.6 -2.4 0.5 -4.6 0.6 -3.4 0.5 -1.4 0.6 -2.6 0.5 -5 0.6 -2.6 0.5 -1.6 0.6 -2.7 0.5 -4.4 0.6 -3.3 0.5 -0.1 0.6 -2 0.5 -4.7 0.6 -2.5 0.5 0.1 0.6 -1.6 0.5 -4 0.6 -1.7 0.5 0.7 0.6 -0.7 0.5 -2.8 0.6 -0.9 0.5 1.5 0.6 -0.3 0.5 -1.6 0.6 0.3 0.5 2.2 0.6 0.6 0.5 -1.1 0.6 0.4 0.5 3.6 0.6 1.2 0.5 -0.4 0.6 1.5 0.5 3.6 0.6 1.9 0.5 0 0.6 2 0.5 4.5 0.6 2.3 0.5 0.6 0.6 1.6 0.5 4.8 0.6 3.1 0.5 -0.1 0.6 2.6 0.5 4.3 0.6 2.3 0.5 1.1 0.6 1.4 0.5 4.6 0.6 1.6 0.5 -0.1 0.6 2.5 0.5 3.2 0.6 1.3 0.5 -0.2 0.6 1.1 0.5 3.4 0.6 0.4 0.5 -1.1 0.6 1.1 0.5 2.1 0.6 -0.3 0.5 -1.7 0.6 -0.4 0.5 2 0.6 -0.5 0.5 -2.5 0.6 -1 0.5 0.6 0.6 -0.8 0.5 -3.3 0.6 -1.6 0.5 0 0.6 -1.2 0.5 -3.9 0.6 -1.9 0.5 -0.8 0.6 -1.1 0.5 -5 0.6 -1.5 0.5 -0.4 0.6 -2.1 0.5 -3.7 0.6 -2.7 0.5 -0.3 0.6 -1.5 0.5 -3.9 0.6 -2.4 0.5 0 0.6 -1.6 0.5 -3.6 0.6 -1.3 0.5 0.1 0.6 -1 0.5 -2.9 0.6 -1.2 0.5 1.2 0.6 0 0.5 -2.3 0.6 -0.7 0.5 1.8 0.6 0 0.5 -1.5 0.6 0.2 0.5 3 0.6 1 0.5 -1.5 0.6 1.9 0.5 2.7 0.6 2.1 0.5 -0.3 0.6 1.7 0.5 3 0.6 2.4 0.5 0.5 0.6 1.1 0.5 4.2 0.6 3 0.5 0.2 0.6 2.6 0.5 4.2 0.6 2.2 0.5 0.8 0.6 1.7 0.5 4.2 0.6 2.5 0.5 -0.2 0.6 1.9 0.5 4.1 0.6 1.7 0.5 0.2 0.6 1.1 0.5 3.2 0.6 1 0.5 -0.7 0.6 0.7 0.5 2.8 0.6 0.7 0.5 -1.4 0.6 0.1 0.5 1.3 0.6 -0.2 0.5 -2.3 0.6 -0.4 0.5 0.4 0.6 -0.8 0.5 -2.9 0.6 -2.3 0.5 0.5 0.6 -1 0.5 -4.1 0.6 -2.6 0.5 -0.6 0.6 -1.5 0.5 -4.6 0.6 -2.6 0.5 -0.5 0.6 -2.7 0.5 -5.2 0.6 -3.3 0.5 -0.7 0.6 -2.4 0.5 -4.8 0.6 -3.3 0.5 -0.8 0.6 -2.1 0.5 -4.6 0.6 -2.9 0.5 0.3 0.6 -2.5 0.5 -4.7 0.6 -1.8 0.5 0.6 0.6 -2 0.5 -3.1 0.6 -2 0.5 1.2 0.6 -0.2 0.5 -2.8 0.6 -0.5 0.5 1.4 0.6 0.5 0.5 -1.6 0.6 0.1 0.5 3.1 0.6 1 0.5 -0.3 0.6 0.9 0.5 3.5 0.6 1.7 0.5 0.1 0.6 2.7 0.5 3.7 0.6 2.7 0.5 0.9 0.6 3 0.5 5.3 0.6 3 0.5 1.4 0.6 2.4 0.5 5.2 0.6 4.2 0.5 1 0.6 3.6 0.5 4.9 0.6 3.3 0.5 1.4 0.6 2.8 0.5 5.9 0.6 2.8 0.5 0.7 0.6 2.6 0.5 4.5 0.6 2.2 0.5 1 0.6 1.6 0.5 4.1 0.6 1.2 0.5 -0.4 0.6 0.6 0.5 2.6 0.6 1.6 0.5 -1.6 0.6 -0.6 0.5 2.4 0.6 -0.4 0.5 -3.2 0.6 -0.7 0.5 1.1 0.6 -1.7 0.5 -3.2 0.6 -2.8 0.5 0 0.6 -1.9 0.5 -5 0.6 -2.7 0.5 -0.4 0.6 -3.3 0.5 -4.8 0.6 -4 0.5 -1.6 0.6 -3.1 0.5 -5.8 0.6 -3 0.5 -2.3 0.6 -3.3 0.5 -6.1 0.6 -3.4 0.5 -1.8 0.6 -3.3 0.5 -5.8 0.6 -3.4 0.5 -0.6 0.6 -3.4 0.5 -5.1 0.6 -2.9 0.5 -0.6 0.6 -2.3 0.5 -4.3 0.6 -1.5 0.5 -0.1 0.6 -1.5 0.5 -2.7 0.6 -1.7 0.5 1.4 0.6 0.3 0.5 -2.9 0.6 0.3 0.5 2.7 0.6 0.7 0.5 -1.7 0.6 1.2 0.5 3.7 0.6 1.5 0.5 0.5 0.6 1.2 0.5 5 0.6 2.2 0.5 0.5 0.6 2.9 0.5 4.7 0.6 3.9 0.5 0.9 0.6 3.9 0.5 5.2 0.6 3.5 0.5 1.5 0.6 3.9 0.5 5.3 0.6 4.4 0.5 0.9 0.6 3.9 0.5 5.5 0.6 3.3 0.5 1.9 0.6 2.7 0.5 5.3 0.6 3 0.5 0.6 0.6 2.5 0.5 4.1 0.6 2.4 0.5 0.7 0.6 1 0.5 3.9 0.6 0.8 0.5 -0.5 0.6 0.4 0.5 2.7 0.6 0.2 0.5 -2.3 0.6 -0.1 0.5 1.3 0.6 -0.7 0.5 -2.4 0.6 -1.8 0.5 0.6 0.6 -1.1 0.5 -4 0.6 -2.1 0.5 -0.4 0.6 -3.1 0.5 -4.5 0.6 -3.1 0.5 -0.3 0.6 -2.9 0.5 -5.4 0.6 -3.3 0.5 -1.1 0.6 -3.1 0.5 -5.8 0.6 -2.8 0.5 -1.9 0.6 -2.9 0.5 -5.6 0.6 -3.4 0.5 -0.3 0.6 -3.1 0.5 -4.8 0.6 -3.6 0.5 -0.6 0.6 -2.2 0.5 -4.2 0.6 -2.2 0.5 0.2 0.6 -1.9 0.5 -3.2 0.6 -1.1 0.5 0.5 0.6 -0.1 0.5 -2.8 0.6 -0.4 0.5 1.4 0.6 0.4 0.5 -1.4 0.6 0.1 0.5 2.4 0.6 1.9 0.5 -0.8 0.6 0.7 0.5 3.3 0.6 2.7 0.5 -0.3 0.6 1.4 0.5 4.4 0.6 2.3 0.5 1.2 0.6 1.8 0.5 5.3 0.6 2.7 0.5 0.1 0.6 3.3 0.5 4.5 0.6 3.3 0.5 0.8 0.6 2.1 0.5 4.5 0.6 3.6 0.5 0.1 0.6 2.9 0.5 4.1 0.6 2.4 0.5 0.2 0.6 1.7 0.5 3.6 0.6 1.4 0.5 0.1 0.6 0.9 0.5 3.2 0.6 1.5 0.5 -2 0.6 1 0.5 1.6 0.6 0.9 0.5 -1.9 0.6 -0.9 0.5 1.8 0.6 -0.1 0.5 -3.1 0.6 -1.2 0.5 0.5 0.6 -1.4 0.5 -3.2 0.6 -1.7 0.5 0 0.6 -1.6 0.5 -4.1 0.6 -1.6 0.5 -0.2 0.6 -2.5 0.5 -4.3 0.6 -2.1 0.5 -0.4 0.6 -1.7 0.5 -4.9 0.6 -2.5 0.5 0.3 0.6 -2.8 0.5 -3.6 0.6 -2.5 0.5 0.5 0.6 -1.9 0.5 -3.5 0.6 -2.4 0.5 1 0.6 -1.2 0.5 -3.3 0.6 -0.9 0.5 1.2 0.6 -1.2 0.5 -2.3 0.6 -0.4 0.5 1.6 0.6 0.1 0.5 -1.6 0.6 0.2 0.5 3 0.6 0.7 0.5 -1.4 0.6 1.1 0.5 3.3 0.6 1.4 0.5 -0.7 0.6 1.4 0.5 3.7 0.6 2.9 0.5 -0.3 0.6 1.2 0.5 4.7 0.6 2.5 0.5 -0.3 0.6 1.6 0.5 4.6 0.6 2.2 0.5 0 0.6 2.3 0.5 3.5 0.6 3.1 0.5 -0.4 0.6 1.7 0.5 4 0.6 1.5 0.5 -0.8 0.6 1.2 0.5 3.1 0.6 1.1 0.5 -0.3 0.6 0.6 0.5 2 0.6 0.4 0.5 -1.3 0.6 0.1 0.5 1.9 0.6 -0.9 0.5 -1.9 0.6 -0.8 0.5 1 0.6 -1.4 0.5 -3.3 0.6 -0.9 0.5 -0.1 0.6 -1.5 0.5 -3.6 0.6 -2.3 0.5 0.4 0.6 -2.6 0.5 -4.4 0.6 -2 0.5 -0.3 0.6 -2.1 0.5 -4.6 0.6 -2.4 0.5 -0.5 0.6 -2.8 0.5 -4.4 0.6 -2.9 0.5 -0.2 0.6 -1.8 0.5 -4.7 0.6 -1.6 0.5 -0.5 0.6 -1.4 0.5 -3.1 0.6 -2.5 0.5 0.5 0.6 -0.6 0.5 -3.2 0.6 -0.5 0.5 0.7 0.6 0.5 0.5 -2.1 0.6 -0.3 0.5 1.9 0.6 0.4 0.5 -1 0.6 0.6 0.5 2.9 0.6 1.3 0.5 -0.4 0.6 1.7 0.5 3.9 0.6 2.2 0.5 -0.5 0.6 2.2 0.5 4.6 0.6 2.8 0.5 0.5 0.6 2.5 0.5 4.7 0.6 3.3 0.5 1.1 0.6 3.4 0.5 4.9 0.6 3.2 0.5 1.1 0.6 2.8 0.5 4.6 0.6 3.2 0.5 0 0.6 3.1 0.5 4.5 0.6 2.2 0.5 0.6 0.6 2.4 0.5 3.4 0.6 2 0.5 -0.7 0.6 1.2 0.5 3.7 0.6 0.2 0.5 -1.2 0.6 0.8 0.5 2 0.6 -0.3 0.5 -1.7 0.6 -0.9 0.5 1.4 0.6 -1.1 0.5 -3.1 0.6 -1.5 0.5 0.1 0.6 -2.1 0.5 -4 0.6 -1.7 0.5 -0.9 0.6 -3 0.5 -4 0.6 -3.7 0.5 -1.3 0.6 -2.6 0.5 -5.6 0.6 -3.3 0.5 -1.4 0.6 -3.6 0.5 -5.1 0.6 -4.1 0.5 -1.2 0.6 -3.2 0.5 -5.9 0.6 -3.1 0.5 -1.6 0.6 -2.6 0.5 -4.6 0.6 -3.3 0.5 -0.6 0.6 -2.3 0.5 -5 0.6 -1.4 0.5 -0.3 0.6 -2.1 0.5 -2.8 0.6 -1.8 0.5 0.8 0.6 0.2 0.5 -2.9 0.6 -0.1 0.5 1.4 0.6 1.1 0.5 -2.2 0.6 0.9 0.5 3.2 0.6 1.2 0.5 0.2 0.6 1.3 0.5 4.1 0.6 2.8 0.5 0.3 0.6 3 0.5 4.5 0.6 3.5 0.5 0.9 0.6 3.5 0.5 5.3 0.6 3 0.5 2.2 0.6 3.1 0.5 6.1 0.6 3.8 0.5 1.8 0.6 2.9 0.5 5.9 0.6 4.1 0.5 1.7 0.6 3.1 0.5 4.6 0.6 3.9 0.5 0.6 0.6 3.1 0.5 5 0.6 1.9 0.5 1.1 0.6 1.7 0.5 3.4 0.6 1.7 0.5 -0.4 0.6 1.4 0.5 2.5 0.6 0.3 0.5 -1.7 0.6 -0.1 0.5 2.5 0.6 -1 0.5 -2.3 0.6 -1.4 0.5 1.1 0.6 -1.7 0.5 -4 0.6 -1.3 0.5 -0.6 0.6 -2.1 0.5 -4.4 0.6 -2.8 0.5 -1.9 0.6 -2.6 0.5 -5.3 0.6 -3.1 0.5 -1.1 0.6 -3.4 0.5 -6.3 0.6 -3.5 0.5 -1 0.6 -3.6 0.5 -5.8 0.6 -3.6 0.5 -1.8 0.6 -2.6 0.5 -5.7 0.6 -2.9 0.5 -1.3 0.6 -3.3 0.5 -4.5 0.6 -2.9 0.5 0.3 0.6 -2.4 0.5 -4.5 0.6 -1.8 0.5 0.7 0.6 -1.1 0.5 -3 0.6 -1.1 0.5 1.4 0.6 -0.6 0.5 -1.5 0.6 -0.2 0.5 2.1 0.6 1.2 0.5 -0.5 0.6 0 0.5 3.5 0.6 2.2 0.5 -0.6 0.6 1.9 0.5 4.3 0.6 2.3 0.5 0.8 0.6 2.4 0.5 5.2 0.6 3 0.5 0 0.6 3.5 0.5 5.2 0.6 3.4 0.5 1.1 0.6 2.9 0.5 5.1 0.6 3 0.5 1 0.6 3.4 0.5 5 0.6 3.1 0.5 0.5 0.6 2.1 0.5 4.9 0.6 2.4 0.5 0 0.6 1.9 0.5 3.5 0.6 2 0.5 -0.7 0.6 0.7 0.5 3.2 0.6 0.9 0.5 -0.7 0.6 -0.4 0.5 2 0.6 -0.1 0.5 -2.3 0.6 -0.5 0.5 1 0.6 -0.9 0.5 -2.3 0.6 -1.9 0.5 0.5 0.6 -1.4 0.5 -4.1 0.6 -2.2 0.5 -0.2 0.6 -1.9 0.5 -4.3 0.6 -2.1 0.5 -0.7 0.6 -2 0.5 -5.1 0.6 -2.2 0.5 -1 0.6 -3 0.5 -4.4 0.6 -2.3 0.5 -0.1 0.6 -3 0.5 -3.9 0.6 -2.7 0.5 0.2 0.6 -2.7 0.5 -3.4 0.6 -1.5 0.5 -0.3 0.6 -1.3 0.5 -3.5 0.6 -1.1 0.5 1.1 0.6 -0.1 0.5 -3.1 0.6 -0.3 0.5 1.6 0.6 0.5 0.5 -1.5 0.6 0.1 0.5 2.1 0.6 1.4 0.5 -0.9 0.6 0.6 0.5 2.7 0.6 2.3 0.5 -0.4 0.6 1 0.5 3.5 0.6 2.1 0.5 0.3 0.6 2.2 0.5 3.9 0.6 2.6 0.5 -0.5 0.6 2.2 0.5 4.6 0.6 2.2 0.5 0 0.6 2.3 0.5 3.7 0.6 1.9 0.5 0.4 0.6 1.4 0.5 4.3 0.6 1.5 0.5 -0.3 0.6 1.4 0.5 2.9 0.6 1.5 0.5 -1.5 0.6 1.5 0.5 2.3 0.6 1 0.5 -2.6 0.6 0.5 0.5 2 0.6 -0.6 0.5 -2.6 0.6 -0.7 0.5 1.2 0.6 -0.2 0.5 -3.8 0.6 -0.6 0.5 0.1 0.6 -1.2 0.5 -3.6 0.6 -2 0.5 0.2 0.6 -1.9 0.5 -4.3 0.6 -1.8 0.5 -0.7 0.6 -1.6 0.5 -4.2 0.6 -2.3 0.5 -0.8 0.6 -1.6 0.5 -3.9 0.6 -2.8 0.5 -0.3 0.6 -1.6 0.5 -3.5 0.6 -2.7 0.5 0.2 0.6 -1 0.5 -3.2 0.6 -1.3 0.5 0.5 0.6 -0.2 0.5 -3.5 0.6 -0.2 0.5 0.9 0.6 -0.2 0.5 -1.9 0.6 -0.1 0.5 2.8 0.6 0.7 0.5 -1.6 0.6 1.5 0.5 2.5 0.6 1.2 0.5 -0.5 0.6 2.1 0.5 3.9 0.6 1.3 0.5 -0.1 0.6 2.8 0.5 3.7 0.6 3.3 0.5 0 0.6 2.5 0.5 4.3 0.6 3.2 0.5 0.3 0.6 2.4 0.5 5.2 0.6 2 0.5 1.2 0.6 1.8 0.5 5 0.6 2.3 0.5 0.7 0.6 1.2 0.5 4.6 0.6 1.8 0.5 0.3 0.6 1.5 0.5 3 0.6 1 0.5 -1 0.6 0.7 0.5 2.8 0.6 0.3 0.5 -1.8 0.6 0.3 0.5 1.6 0.6 -0.7 0.5 -2 0.6 -1.8 0.5 1.2 0.6 -1.7 0.5 -2.8 0.6 -1.9 0.5 -0.6 0.6 -1.5 0.5 -4.2 0.6 -3.1 0.5 -0.6 0.6 -2.4 0.5 -4.4 0.6 -3.9 0.5 -0.5 0.6 -3 0.5 -5.3 0.6 -3.2 0.5 -0.9 0.6 -3.8 0.5 -4.5 0.6 -3.8 0.5 -0.7 0.6 -2.8 0.5 -5.6 0.6 -2.3 0.5 -0.6 0.6 -3.1 0.5 -4.7 0.6 -2.3 0.5 0.8 0.6 -2.7 0.5 -2.8 0.6 -2.3 0.5 1.3 0.6 -1.5 0.5 -2.7 0.6 -0.1 0.5 1.1 0.6 0.3 0.5 -1.1 0.6 0.1 0.5 2.9 0.6 1.2 0.5 -1.7 0.6 1.5 0.5 4.2 0.6 2 0.5 -0.5 0.6 2.7 0.5 4.2 0.6 3 0.5 0.6 0.6 2.8 0.5 6.1 0.6 2.8 0.5 1.9 0.6 2.6 0.5 5.9 0.6 3.3 0.5 2 0.6 3.2 0.5 6.1 0.6 3.1 0.5 2.2 0.6 3.1 0.5 4.9 0.6 3.7 0.5 1.3 0.6 3.3 0.5 4.2 0.6 2.7 0.5 1.3 0.6 2 0.5 3.9 0.6 1.6 0.5 -0.5 0.6 1.3 0.5 2.9 0.6 1 0.5 -0.9 0.6 0.1 0.5 2.2 0.6 -0.2 0.5 -2.8 0.6 -0.2 0.5 1 0.6 -1.3 0.5 -3.4 0.6 -1.8 0.5 0.3 0.6 -2.1 0.5 -4.6 0.6 -3 0.5 -0.9 0.6 -2.8 0.5 -4.5 0.6 -4 0.5 -1.4 0.6 -3.3 0.5 -5.8 0.6 -2.9 0.5 -2.7 0.6 -3 0.5 -5.4 0.6 -4.5 0.5 -1.3 0.6 -3.7 0.5 -5.7 0.6 -3.6 0.5 -1.5 0.6 -2.3 0.5 -5.2 0.6 -2.9 0.5 -1.6 0.6 -1.8 0.5 -4.7 0.6 -2 0.5 -0.1 0.6 -1.8 0.5 -2.7 0.6 -2.4 0.5 1.8 0.6 -0.4 0.5 -2.8 0.6 -0.2 0.5 2.5 0.6 -0.3 0.5 -1 0.6 0.9 0.5 2.7 0.6 1.9 0.5 -0.7 0.6 1.8 0.5 4.1 0.6 2.4 0.5 0.2 0.6 2.7 0.5 4.7 0.6 2.8 0.5 1.4 0.6 2.7 0.5 5.9 0.6 3 0.5 1.7 0.6 3.1 0.5 5.4 0.6 3.4 0.5 1.4 0.6 4.1 0.5 4.9 0.6 3.4 0.5 1.3 0.6 3.2 0.5 4.4 0.6 3 0.5 1.3 0.6 2.1 0.5 4.5 0.6 2.5 0.5 0 0.6 1.6 0.5 2.7 0.6 1.8 0.5 -0.4 0.6 0.7 0.5 1.9 0.6 0.5 0.5 -1.7 0.6 -0.4 0.5 1.9 0.6 0 0.5 -3.1 0.6 -1.2 0.5 0.3 0.6 -1 0.5 -3 0.6 -2.3 0.5 -0.3 0.6 -2 0.5 -4 0.6 -2.6 0.5 -1.3 0.6 -2 0.5 -5 0.6 -2.9 0.5 -1.2 0.6 -2.7 0.5 -5 0.6 -3.1 0.5 -1.3 0.6 -2.6 0.5 -4.5 0.6 -3.5 0.5 -0.7 0.6 -2 0.5 -4.9 0.6 -2.6 0.5 -0.4 0.6 -1.4 0.5 -4.7 0.6 -1.5 0.5 0.6 0.6 -2 0.5 -3 0.6 -0.9 0.5 0.9 0.6 -0.7 0.5 -2.8 0.6 0 0.5 1.8 0.6 0.7 0.5 -2.1 0.6 0.6 0.5 2.9 0.6 1.3 0.5 -1.3 0.6 1.2 0.5 3.6 0.6 2.1 0.5 -0.9 0.6 2.5 0.5 3.7 0.6 2 0.5 0.5 0.6 1.8 0.5 4.1 0.6 3.2 0.5 0.1 0.6 2.4 0.5 4.4 0.6 3 0.5 0.3 0.6 1.5 0.5 4.8 0.6 2.3 0.5 0.1 0.6 2.3 0.5 3.5 0.6 2 0.5 0.1 0.6 1 0.5 3.4 0.6 1.4 0.5 -0.6 0.6 0.6 0.5 2.8 0.6 0.3 0.5 -1.9 0.6 0.6 0.5 1.9 0.6 0.1 0.5 -2.3 0.6 -1.4 0.5 1.4 0.6 -0.9 0.5 -2.3 0.6 -2 0.5 0.6 0.6 -0.7 0.5 -3.8 0.6 -2.4 0.5 0.8 0.6 -1.7 0.5 -4.2 0.6 -2.7 0.5 0.5 0.6 -2.2 0.5 -4 0.6 -1.9 0.5 -0.4 0.6 -1.9 0.5 -4.8 0.6 -2.1 0.5 0.2 0.6 -2.3 0.5 -2.8 0.6 -2.6 0.5 0.3 0.6 -1.3 0.5 -3.4 0.6 -0.7 0.5 0.6 0.6 -0.9 0.5 -2.8 0.6 -1.1 0.5 1.9 0.6 0.4 0.5 -2 0.6 0 0.5 1.7 0.6 0.6 0.5 -1.5 0.6 1.2 0.5 2.8 0.6 1.4 0.5 -0.6 0.6 1.5 0.5 3.3 0.6 2.3 0.5 -0.7 0.6 2.6 0.5 3.7 0.6 1.7 0.5 0.5 0.6 2.4 0.5 4.1 0.6 2.7 0.5 0.1 0.6 2.2 0.5 4.8 0.6 1.9 0.5 0.7" fill="none" stroke="#7dc33b" stroke-width="2.8" stroke-linejoin="round"/>
<path d="M3 670.6l0.6 -1.5 0.5 -0.4 0.5 1.9 0.6 -1 0.5 -0.5 0.6 -1.9 0.5 1.5 0.6 0.1 0.5 -2.7 0.6 1 0.5 -0.9 0.6 0.5 0.6 -2.5 0.5 0.6 0.6 -0.2 0.5 -0.2 0.6 -2.5 0.5 -0.5 0.6 0.3 0.5 -1.4 0.6 -2.2 0.5 0.2 0.6 -1 0.5 0.5 0.6 -3.3 0.5 -1.2 0.6 0.2 0.5 0.3 0.6 -1.7 0.5 -2 0.6 0.7 0.5 -1.6 0.6 -0.8 0.5 -1.4 0.6 -0.7 0.5 -0.9 0.6 -0.8 0.5 -2 0.6 1.8 0.5 -1.6 0.6 -1.9 0.5 -0.1 0.6 0.1 0.5 0 0.6 -2.4 0.5 0.9 0.6 -0.4 0.5 0.7 0.6 -2.7 0.5 0.9 0.6 1.2 0.5 -1.1 0.6 -1.8 0.5 0.5 0.6 1.6 0.5 -0.6 0.6 -0.4 0.5 -0.7 0.6 2 0.5 0.9 0.6 -1.3 0.5 0.7 0.5 0.6 0.6 1.8 0.5 -1.8 0.6 1.9 0.5 1.9 0.6 0.6 0.5 -1.1 0.6 0.2 0.5 2 0.6 1.6 0.5 -0.8 0.6 1.6 0.5 0.5 0.6 1.7 0.5 0.4 0.6 0.4 0.5 1.9 0.6 0.2 0.5 -0.1 0.6 1.1 0.5 3.2 0.6 0.9 0.5 -1.3 0.6 2.1 0.5 0.4 0.6 1.9 0.5 0.4 0.6 -0.4 0.5 3 0.6 0.4 0.5 -1.5 0.6 1.1 0.5 2 0.6 0.3 0.5 0.4 0.6 -0.6 0.5 2.7 0.6 -0.4 0.5 -1.1 0.6 1.1 0.5 0.6 0.6 1.1 0.5 -0.5 0.6 -0.3 0.5 0.9 0.6 -0.6 0.5 -0.3 0.6 -1 0.5 2 0.6 -1 0.5 -0.6 0.6 -0.8 0.5 0.8 0.6 0.2 0.5 -2.5 0.6 -0.6 0.5 2 0.6 -1.6 0.5 -0.9 0.6 -0.7 0.5 -0.3 0.6 -1.2 0.5 -2 0.6 0.5 0.5 -1.1 0.6 -0.1 0.5 -1.9 0.6 -1.7 0.5 0.8 0.6 -1.4 0.5 -1.4 0.6 -1 0.5 -0.1 0.6 -1.1 0.5 -1.7 0.6 -1.4 0.5 0.1 0.6 -0.6 0.5 -0.9 0.6 -1.6 0.5 1 0.6 -2.3 0.5 -0.3 0.6 -1.6 0.5 0.9 0.6 -1 0.5 -1.5 0.6 -1.5 0.5 1.5 0.6 -1.5 0.5 -1.4 0.6 -0.9 0.5 1.4 0.6 -0.1 0.5 -1.8 0.6 0.8 0.5 -0.5 0.6 0.9 0.5 -1.8 0.6 0.6 0.5 1.5 0.6 0.1 0.5 -2.2 0.6 0.5 0.5 2 0.6 1.1 0.5 -2.4 0.6 1.4 0.5 1.7 0.6 0.8 0.5 -1.4 0.6 1.4 0.5 1.1 0.6 1.6 0.5 -2 0.6 2.3 0.5 1 0.6 0.8 0.5 -0.8 0.6 1 0.5 2.9 0.6 0.9 0.5 -1.1 0.6 1.1 0.5 1.7 0.6 1.2 0.5 -0.2 0.6 1 0.5 3.3 0.6 1 0.5 -0.6 0.6 0.3 0.5 2 0.6 1.4 0.5 0 0.6 0.4 0.5 1.7 0.6 0.1 0.5 0.3 0.6 1 0.5 1.6 0.6 -0.5 0.5 0.5 0.6 -0.2 0.5 1.2 0.6 1.9 0.5 -1.3 0.6 0.4 0.5 0.3 0.6 1.5 0.5 -0.8 0.6 0 0.5 0.9 0.6 0.2 0.5 -1.3 0.6 -0.6 0.5 0.7 0.6 0.6 0.5 -1.5 0.6 -0.3 0.5 -0.3 0.6 0.9 0.5 -2.4 0.6 0.1 0.5 -0.9 0.6 1 0.5 -2.1 0.6 -1.8 0.5 1.5 0.6 -1.8 0.5 -2 0.6 -0.4 0.5 -0.1 0.6 -0.4 0.5 -1.2 0.6 -1.4 0.5 0.2 0.6 -1.4 0.5 -1.3 0.6 -1 0.5 0 0.6 -0.4 0.5 -2.3 0.6 -1.7 0.5 -0.4 0.6 0.2 0.5 -1.6 0.6 -1.9 0.5 0.8 0.6 -0.3 0.5 -2 0.6 -2.2 0.5 1.3 0.6 -1.4 0.5 -1.6 0.6 0.6 0.5 -0.1 0.6 -0.1 0.5 -1.8 0.6 -0.7 0.5 0.6 0.6 0 0.5 -0.5 0.6 -0.7 0.5 0.4 0.6 -0.3 0.6 -0.8 0.5 0.7 0.6 0.7 0.5 0.7 0.6 -0.7 0.5 -1.1 0.6 2.5 0.5 -0.8 0.6 0.7 0.5 -0.8 0.6 1.8 0.5 1.9 0.6 -1.6 0.5 0.3 0.6 3 0.5 0.2 0.6 0.2 0.5 -0.2 0.6 2.1 0.5 1.7 0.6 -1.1 0.5 1.7 0.6 0.6 0.5 2.1 0.6 -1.4 0.5 1.5 0.6 1.1 0.5 1.3 0.6 1.2 0.5 0 0.6 2.7 0.5 0 0.6 -0.1 0.5 0.4 0.6 2.8 0.5 1.5 0.6 -1 0.5 0.5 0.6 2.9 0.5 0.7 0.6 -0.8 0.5 -0.5 0.6 2.7 0.5 0.3 0.6 0.3 0.5 -0.6 0.6 2 0.5 0.5 0.6 -1.3 0.5 0.5 0.6 1.6 0.5 0.6 0.6 -1.7 0.5 -0.3 0.6 2.3 0.5 -1.6 0.6 0.1 0.5 -0.5 0.6 0.7 0.5 -0.4 0.6 -0.9 0.5 -0.2 0.6 0.5 0.5 -0.4 0.6 -2.9 0.5 -0.1 0.6 0.2 0.5 0.9 0.6 -1.9 0.5 -2.2 0.6 1.2 0.5 -0.7 0.6 -2.9 0.5 -0.3 0.6 0.9 0.5 -1 0.6 -2.7 0.5 -0.1 0.6 -0.6 0.5 -0.4 0.6 -2.3 0.5 0 0.6 -0.4 0.5 -0.6 0.6 -2.3 0.5 -1.5 0.6 1.3 0.5 -1.3 0.6 -2 0.5 -1.6 0.6 0.1 0.5 0 0.6 -1.4 0.5 -0.9 0.6 -0.3 0.5 -1 0.6 -1 0.5 0 0.6 -0.7 0.5 0.7 0.6 -2.6 0.5 -0.2 0.6 0.4 0.5 0.3 0.6 -1.2 0.5 0.8 0.6 1 0.5 -1.4 0.6 -0.9 0.5 1.2 0.6 -0.1 0.5 0.4 0.6 -0.6 0.5 -0.4 0.6 1.7 0.5 0.7 0.6 -0.7 0.5 1.4 0.6 0.4 0.5 0.5 0.6 0.8 0.5 -0.3 0.6 2.6 0.5 0.4 0.6 -0.1 0.5 -0.1 0.6 1.6 0.5 2 0.6 -0.8 0.5 1 0.6 2.2 0.5 1.2 0.6 -1.1 0.5 1 0.6 3.1 0.5 0.3 0.6 -0.6 0.5 1.4 0.6 1.4 0.5 1.9 0.6 -1.5 0.5 2.2 0.6 1.5 0.5 0.5 0.6 0.7 0.5 -0.5 0.6 1.8 0.5 0.5 0.6 0.4 0.5 0.9 0.6 1.6 0.5 0.2 0.6 0 0.5 -0.9 0.6 1.9 0.5 1.1 0.6 -0.3 0.5 -0.4 0.6 1.4 0.5 0.4 0.6 -1.7 0.5 0.9 0.6 0.7 0.5 -0.7 0.6 -1.2 0.5 0.5 0.6 0.1 0.5 -0.5 0.6 -0.3 0.5 -1 0.6 0.6 0.5 -0.1 0.6 -1.3 0.5 -2 0.6 0.9 0.5 -1.1 0.6 -1.2 0.5 -0.7 0.6 1 0.5 -1 0.6 -2.1 0.5 -1.3 0.6 0.6 0.5 -1.4 0.6 -1 0.5 -1.1 0.6 0.3 0.5 -2.1 0.6 -1.1 0.5 -0.9 0.6 -0.2 0.5 -0.1 0.6 -2.1 0.5 -1.2 0.6 0.3 0.5 -1.1 0.6 -1.5 0.5 -2.3 0.6 1.4 0.5 -0.7 0.6 -2 0.5 -1.4 0.6 0.1 0.5 0.4 0.6 -1.3 0.5 -1.6 0.6 0.6 0.5 -0.4 0.6 -1.7 0.5 0.6 0.6 1.4 0.5 -0.5 0.6 -2.1 0.5 0.4 0.6 0 0.5 1.4 0.6 -2 0.5 -0.6 0.6 2.4 0.5 -0.6 0.6 -0.6 0.5 -0.2 0.6 2.2 0.5 0.7 0.6 -0.2 0.5 -1 0.6 3.1 0.5 -0.6 0.6 -0.3 0.5 1.3 0.6 1.4 0.5 0.8 0.6 0 0.5 0.1 0.6 3 0.5 -0.1 0.6 0.9 0.5 0.8 0.6 1.5 0.5 0.1 0.6 1.1 0.5 -0.5 0.6 3 0.5 0.8 0.6 -0.8 0.5 1.9 0.6 2.2 0.5 0.7 0.6 -0.6 0.5 1 0.6 2.1 0.5 0.2 0.6 0.8 0.5 1 0.6 1.5 0.5 1 0.6 -1.6 0.5 1.7 0.6 0 0.5 1.4 0.6 -1.3 0.5 0.9 0.6 1.9 0.5 0.5 0.6 -1.4 0.5 0 0.6 1 0.5 0.6 0.6 -1.3 0.5 -0.3 0.6 2.1 0.5 -0.4 0.6 -1.5 0.5 -0.7 0.6 1.8 0.5 -1.2 0.6 -1.4 0.5 0.1 0.6 0.9 0.5 0 0.6 -2.1 0.5 -0.3 0.6 0.4 0.5 -0.9 0.6 -1.9 0.5 -2 0.6 0.6 0.5 -1.1 0.6 -0.4 0.5 -1.2 0.6 0.1 0.5 -1.5 0.6 -1.9 0.5 -1.3 0.6 1 0.5 -0.2 0.6 -3.3 0.5 -1.5 0.6 0.5 0.5 -0.5 0.6 -1.1 0.5 -1.1 0.6 -0.4 0.5 -1.4 0.6 -2 0.5 -0.8 0.6 1.5 0.5 -1.2 0.6 -0.9 0.5 -0.9 0.6 0.3 0.5 -1.1 0.6 -1.1 0.5 -1.8 0.6 0.6 0.5 0.5 0.6 -1.6 0.5 -0.9 0.6 1 0.5 -0.6 0.6 0.3 0.5 -0.5 0.6 1.5 0.5 0.2 0.6 -2.1 0.5 0.6 0.6 0.7 0.5 1.1 0.6 -0.8 0.5 -1 0.6 1.3 0.5 0.9 0.6 0 0.5 0.1 0.6 1 0.5 2.2 0.6 -0.6 0.5 0 0.6 1.1 0.5 2.4 0.6 -1 0.5 -0.1 0.6 2.5 0.5 1.5 0.6 0.2 0.5 0.1 0.6 2.3 0.5 0.2 0.6 -0.1 0.5 2.1 0.6 1.1 0.5 0.5 0.6 0.7 0.5 0 0.6 2.1 0.5 1.5 0.6 -0.1 0.5 0.9 0.6 2.1 0.5 0.4 0.6 -1.1 0.5 1.9 0.6 0.6 0.5 1.5 0.6 -0.6 0.5 0.9 0.6 1.8 0.5 -0.3 0.6 0.1 0.5 0.3 0.6 1.1 0.5 -0.2 0.6 0.5 0.5 -0.5 0.6 0.3 0.5 0.5 0.6 0.3 0.5 -1.5 0.6 1.3 0.5 0.7 0.6 -1.3 0.5 -0.7 0.6 1.1 0.5 -1.6 0.6 -1.4 0.5 1.1 0.6 0.3 0.5 -1.9 0.6 -1.7 0.5 -0.3 0.6 1.7 0.5 -1.9 0.6 -1.1 0.5 -0.4 0.6 -0.2 0.5 -0.2 0.6 -3.2 0.5 -1.1 0.6 0 0.5 0.5 0.6 -3.2 0.5 0.5 0.6 -0.3 0.5 -1.8 0.6 -0.9 0.5 -2.2 0.6 0.9 0.5 -1.6 0.6 -0.8 0.5 -0.8 0.6 0.3 0.5 -2.4 0.6 -0.4 0.5 -1.4 0.6 0.9 0.5 -1.3 0.6 -1.6 0.5 -0.7 0.6 0.8 0.5 -1.7 0.6 -1.7 0.5 0.3 0.6 0.2 0.5 -0.1 0.6 -2.1 0.5 0.9 0.6 -0.4 0.5 1.4 0.6 -1.3 0.5 -0.8 0.6 0.5 0.5 1.1 0.6 -1.8 0.5 0.5 0.6 0.7 0.5 1.9 0.6 -1.6 0.5 0 0.6 1.1 0.5 1.6 0.6 -0.4 0.5 0.5 0.6 0.4 0.5 1.2 0.6 -0.6 0.5 1.5 0.6 0.8 0.5 1.6 0.6 0.4 0.5 0.4 0.6 0.6 0.5 1.1 0.6 -0.2 0.5 1.9 0.6 1.9 0.5 0.8 0.6 -0.3 0.5 0.8 0.6 2.4 0.5 1.1 0.6 0.3 0.5 0.5 0.6 2.1 0.5 1.2 0.6 -0.4 0.5 0.5 0.6 0.7 0.5 2 0.6 0 0.5 -0.2 0.6 2.7 0.5 -0.6 0.6 0.9 0.5 -0.5 0.6 2.2 0.5 -0.3 0.6 -0.6 0.5 0.3 0.6 1.4 0.5 0 0.6 -0.3 0.5 1 0.6 0.6 0.5 0.7 0.6 -1.5 0.5 0 0.6 1.3 0.5 -0.5 0.6 -2.2 0.5 -0.4 0.6 1.1 0.5 -1 0.6 -1.2 0.5 0.6 0.6 0.7 0.5 -1.6 0.6 -0.9 0.5 -0.7 0.6 0.6 0.5 -0.8 0.6 -2.4 0.5 -1.6 0.6 1.6 0.5 -1.7 0.6 -1.4 0.5 -1.4 0.6 0.5 0.5 -0.1 0.6 -3.5 0.5 -0.3 0.6 0.4 0.5 -1 0.6 -1.4 0.5 -2 0.6 1.2 0.5 -1.3 0.6 -1.5 0.5 -2.5 0.6 0.5 0.5 -0.6 0.6 -0.8 0.5 -2.5 0.6 0.8 0.5 0.2 0.6 -1.3 0.5 -2.2 0.6 1.1 0.5 -0.1 0.6 -1.6 0.5 -0.4 0.6 0.7 0.5 -1.1 0.6 -1.5 0.5 -0.7 0.6 2.1 0.5 -0.9 0.6 -1.1 0.5 1.1 0.6 0.6 0.5 0.1 0.6 -0.9 0.5 0 0.6 1.5 0.5 -0.3 0.6 -1.2 0.5 0.3 0.6 1.5 0.5 1.2 0.6 -1 0.5 0.4 0.6 2.5 0.5 1.6 0.6 -1 0.5 -0.1 0.6 2.8 0.5 -0.2 0.6 -0.4 0.5 1.1 0.6 2.2 0.5 1.5 0.6 -0.7 0.5 1.4 0.6 0.9 0.5 2.5 0.6 -1.3 0.5 1.8 0.6 0.6 0.5 2.4 0.6 -1.3 0.5 2 0.6 1.9 0.5 0.7 0.6 -1 0.5 0.3 0.6 2.2 0.5 2.2 0.6 -1.8 0.5 1.5 0.6 1.7 0.5 0.8 0.6 -1.4 0.5 0.4 0.6 1.5 0.5 2.1 0.6 -1.8 0.5 0.8 0.6 1.2 0.5 -0.3 0.6 -1.2 0.5 -0.1 0.6 2.7 0.5 -1.2 0.6 0.4 0.5 -1.3 0.6 1.6 0.5 -1.1 0.6 -0.2 0.5 -1.4 0.6 1 0.5 -0.1 0.6 -2.3 0.5 -0.3 0.6 1.6 0.5 -1.5 0.6 -1.6 0.5 0 0.6 -0.6 0.5 -0.7 0.6 -1.9 0.5 -0.5 0.6 0.2 0.5 -0.3 0.6 -2.3 0.5 -0.2 0.6 -1.3 0.5 0.3 0.6 -1.8 0.5 -2.1 0.6 -0.1 0.5 -0.2 0.6 -2.6 0.5 -0.4 0.6 0.7 0.5 -1.9 0.6 -2 0.5 -0.3 0.6 -0.3 0.5 -0.6 0.6 -1.5 0.5 -1.4 0.6 0.3 0.5 -0.1 0.6 -1.6 0.5 0.2 0.6 -0.1 0.5 -1.3 0.6 -1.4 0.5 0.5 0.6 0.4 0.5 0.3 0.6 -1.2 0.5 -0.5 0.6 -0.4 0.5 1.5 0.6 -2 0.5 -0.6 0.6 1.1 0.5 1.4 0.6 -2.1 0.5 -0.1 0.6 1.7 0.5 1.6 0.6 -1.6 0.5 0.8 0.6 0.5 0.5 1.2 0.6 -0.8 0.5 0.3 0.6 2.6 0.5 0.3 0.6 -0.9 0.5 2.2 0.6 1 0.5 0.4 0.6 -0.6 0.5 1.9 0.6 1.8 0.5 0.1 0.6 0.6 0.5 1.3 0.6 1.7 0.5 0.5 0.6 0.2 0.5 1.1 0.6 2.1 0.5 0.1 0.6 1 0.5 1.1 0.6 1.6 0.5 1.1 0.6 -1.1 0.5 1.6 0.6 0.7 0.5 0.9 0.6 0.2 0.5 1.2 0.6 0.2 0.5 1 0.6 -0.9 0.5 1.1 0.6 1.1 0.5 0.5 0.6 0.3 0.5 -0.1 0.6 2 0.5 -0.7 0.6 -0.4 0.5 -1.2 0.6 2.8 0.5 -1.2 0.6 -0.7 0.5 -0.2 0.6 1.7 0.5 -0.9 0.6 -0.5 0.5 -1.1 0.6 0 0.5 0.8 0.6 -2.8 0.5 0.8 0.6 -0.4 0.5 -0.9 0.6 -0.5 0.5 -1.9 0.6 0.5 0.5 -0.8 0.6 -1.3 0.5 -2.1 0.6 1 0.5 -1.2 0.6 -0.8 0.5 -2.5 0.6 1.3 0.5 -1.5 0.6 -1.7 0.5 -0.8 0.6 0.5 0.5 -1.9 0.6 -1.9 0.5 -1.2 0.6 1.7 0.5 -2.2 0.6 -2.1 0.5 -0.2 0.6 0.4 0.5 -0.2 0.6 -3.3 0.5 -0.5 0.6 0.3 0.5 0.1 0.6 -2 0.5 -0.7 0.6 1.5 0.5 -0.9 0.6 -1.2 0.5 -0.3 0.6 -0.4 0.5 1 0.6 -2.4 0.5 -0.9 0.6 2.6 0.5 -1.5 0.6 -1.3 0.5 0.4 0.6 1.3 0.5 1.4 0.6 -1.1 0.5 -0.7 0.6 1.7 0.5 1 0.6 -0.8 0.5 0.1 0.6 1.3 0.5 -0.1 0.6 -0.3 0.5 1.3 0.6 1.7 0.5 1.1 0.6 -0.2 0.5 0.8 0.6 0.6 0.5 0.7 0.6 1.2 0.5 0.2 0.6 1.3 0.5 1.9 0.6 -1 0.5 0.8 0.6 2.3 0.5 1.3 0.6 0.1 0.5 -0.2 0.6 3.2 0.5 0.8 0.6 -0.5 0.5 1.2 0.6 2.2 0.5 -0.5 0.6 0.5 0.5 1.1 0.6 1.9 0.5 0.7 0.6 -1.3 0.5 2 0.6 1.4 0.5 -0.3 0.6 -0.2 0.5 1.3 0.6 0.2 0.5 0.8 0.6 0.2 0.5 0.1 0.6 0.2 0.5 1.1 0.6 -1.7 0.5 0.6 0.6 1.3 0.5 -1.1 0.6 -1.1 0.5 -0.2 0.6 1 0.5 -0.6 0.6 -1.3 0.5 0.1 0.6 0.7 0.5 -1 0.6 -0.7 0.5 0 0.6 -0.1 0.5 -1 0.6 -1.1 0.5 -1.3 0.5 -0.1 0.6 -0.2 0.5 -2.7 0.6 0.2 0.5 -0.6 0.6 -0.4 0.5 -1 0.6 -1.3 0.5 0.3 0.6 -1.2 0.5 -2.1 0.6 -0.9 0.5 0.7 0.6 -2.2 0.5 -1.1 0.6 -1.8 0.5 0.2 0.6 0.2 0.5 -2.4 0.6 -0.5 0.5 0.4 0.6 -1.2 0.5 -2.6 0.6 -1.1 0.5 1.4 0.6 -0.3 0.5 -2.5 0.6 -1 0.5 0.5 0.6 -0.1 0.5 -0.6 0.6 -1.7 0.5 1.2 0.6 -0.1 0.5 -0.5 0.6 0.2 0.5 -0.7 0.6 0.2 0.5 0.4 0.6 0 0.5 -0.2 0.6 0.6 0.5 -0.6 0.6 -0.2 0.5 1.7 0.6 0.5 0.5 -1.1 0.6 0.1 0.5 1.7 0.6 0.7 0.5 -0.6 0.6 1.5 0.5 2 0.6 0 0.5 0.6 0.6 0.6 0.5 1.2 0.6 1.2 0.5 -0.8 0.6 2.1 0.5 1.4 0.6 0.1 0.5 -0.1 0.6 1.9 0.5 1.5 0.6 1.6 0.5 -1.1 0.6 1.9 0.5 2 0.6 -0.2 0.5 0.6 0.6 0.1 0.5 2.9 0.6 1.1 0.5 -0.4 0.6 -0.3 0.5 1.6 0.6 1.8 0.5 -0.6 0.6 -0.2 0.5 1.8 0.6 1.3 0.5 -1.5 0.6 1.4 0.5 0.8 0.6 0.5 0.5 -0.6 0.6 0.4 0.5 1.7 0.6 -1.1 0.5 0.2 0.6 -0.9 0.5 1.2 0.6 0.7 0.5 -1.2 0.6 -0.4 0.5 1.4 0.6 -1.5 0.5 -1.2 0.6 0.1 0.5 0 0.6 -0.6 0.5 -1.5 0.6 0.3 0.5 0.6 0.6 -0.8 0.5 -1.4 0.6 -1.1 0.5 -0.5 0.6 -0.7 0.5 -1.2 0.6 -2.2 0.5 1.3 0.6 -1.7 0.5 -2.1 0.6 -0.2 0.5 -0.5 0.6 0.6 0.5 -2.2 0.6 -1.7 0.5 -0.3 0.6 -1 0.5 -1.3 0.6 -1 0.5 0 0.6 -0.2 0.5 -2.3 0.6 -0.5 0.5 -0.8 0.6 -0.8 0.5 -1.3 0.6 -0.6 0.5 0.1 0.6 0.2 0.5 -2.5 0.6 -0.5 0.5 1 0.6 0 0.5 -1.4 0.6 -1.1 0.5 1 0.6 0.7 0.5 -1.3 0.6 -0.8 0.5 0.1 0.6 0.7 0.5 -0.7 0.6 -0.7 0.5 0.9 0.6 1.9 0.5 -1 0.6 -1.1 0.5 2 0.6 0.8 0.5 -1.2 0.6 0 0.5 2.9 0.6 0.7 0.5 -1.1 0.6 -0.1 0.5 2.4 0.6 0.3 0.5 1.2 0.6 -0.9 0.5 2.4 0.6 1.8 0.5 -1.4 0.6 0.7 0.5 2 0.6 1.2 0.5 0.4 0.6 1.4 0.5 0.9 0.6 1 0.5 0.9 0.6 0.2 0.5 1.9 0.6 0.6 0.5 0 0.6 2.1 0.5 0.4 0.6 1.2 0.5 0.5 0.6 0.9 0.5 1.9 0.6 0 0.5 0.4 0.6 -0.1 0.5 1.1 0.6 0.9 0.5 -0.2 0.6 0.4 0.5 0.4 0.6 0.5 0.5 0.5 0.6 -1.4 0.5 2.6 0.6 -0.7 0.5 -1.2 0.6 -0.1 0.5 1.5 0.6 0.9 0.5 -2.8 0.6 1 0.5 -0.1 0.6 -0.5 0.5 -0.5 0.6 -1.2 0.5 0.4 0.6 0 0.5 -1 0.6 -0.6 0.5 0 0.6 -1.7 0.5 -0.4 0.6 -1.2 0.5 0.9 0.6 -0.6 0.5 -3.1 0.6 0 0.5 0.2 0.6 -1.8 0.5 -1.9 0.6 -1 0.5 0.2 0.6 -0.8 0.5 -2.6 0.6 -0.8 0.5 1.5 0.6 -1.8 0.5 -1.6 0.6 -0.5 0.5 0 0.6 -1.7 0.5 -0.8 0.6 -1.1 0.5 0.7 0.6 -1.1 0.5 -1.8 0.6 -0.7 0.5 -0.5 0.6 0.2 0.5 -2.1 0.6 0.2 0.5 -0.6 0.6 0.4 0.5 -1.9 0.6 0.5 0.5 0 0.6 0.8 0.5 -1.3 0.6 -0.1 0.5 -0.2 0.6 1.5 0.5 -1.4 0.6 -0.1 0.5 1.3 0.6 -0.8 0.5 0.6 0.6 -0.3 0.5 1.4 0.6 0.3 0.5 0.1 0.6 0.5 0.5 1.8 0.6 -0.5 0.5 -0.2 0.6 0.4 0.5 1.6 0.6 1.3 0.5 -0.9 0.6 2.1 0.5 1 0.6 0.6 0.5 -0.2 0.6 2 0.5 1.1 0.6 1.4 0.5 -0.3 0.6 1.6 0.5 2.4 0.6 -0.2 0.5 0.4 0.6 1.3 0.5 1.3 0.6 1.7 0.5 -0.5 0.6 0 0.5 2.9 0.6 0.4 0.5 -1.2 0.6 1.5 0.5 2.3 0.6 0.1 0.5 -0.5 0.6 0.4 0.5 2.5 0.6 0.1 0.5 -1.5 0.6 0.6 0.5 1.5 0.6 1.5 0.5 -1.4 0.6 -0.9 0.5 2.7 0.6 -1.5 0.5 -0.1 0.6 -0.4 0.5 1.6 0.6 -0.6 0.5 -1.9 0.6 0.5 0.5 1.3 0.6 -0.3 0.5 -2.3 0.6 -0.8 0.5 1.6 0.6 -0.4 0.5 -2.7 0.6 0.5 0.5 0.6 0.6 -1.6 0.5 -2 0.6 -0.2 0.5 0.7 0.6 -2 0.5 -1.8 0.6 -0.9 0.5 0.9 0.6 -1.8 0.5 -1.4 0.6 -1.1 0.5 0.5 0.6 -1.8 0.5 -0.6 0.6 -0.9 0.5 -0.6 0.6 -0.4 0.5 -3.1 0.6 0.3 0.5 -0.4 0.6 -0.4 0.5 -1.7 0.6 -1.8 0.5 1.4 0.6 -2 0.5 -2.1 0.6 0.1 0.5 1.2 0.6 -0.4 0.5 -1.6 0.6 -1.4 0.5 1.5 0.6 -1 0.5 -2.2 0.6 0.5 0.5 1.2 0.6 -0.7 0.5 -1 0.6 -0.7 0.5 1.1 0.6 0.4 0.5 -0.9 0.6 0 0.5 0.7 0.6 0.2 0.5 -0.2 0.6 0.9 0.5 1.6 0.6 -0.4 0.5 -0.6 0.6 1 0.5 1.1 0.6 1.5 0.5 0.1 0.6 -0.7 0.5 2.6 0.6 1.1 0.5 -0.3 0.6 0.7 0.5 2 0.6 0.2 0.5 0.8 0.6 0.9 0.5 0.5 0.6 2.6 0.5 -1.1 0.6 0.3 0.5 2 0.6 2.3 0.5 -0.4 0.6 -0.1 0.5 2.5 0.6 1.3 0.5 0.4 0.6 -0.4 0.5 2.7 0.6 -0.1 0.5 -0.4 0.6 0.5 0.5 2.3 0.6 1.1 0.5 -1.1 0.6 0.2 0.5 1.7 0.6 0.4 0.5 -0.6 0.6 0.5 0.5 1.8 0.6 -0.2 0.5 -0.4 0.6 0 0.5 2.2 0.6 -0.7 0.5 -0.3 0.6 -1 0.5 0.5 0.6 0.6 0.5 -2.1 0.6 -0.3 0.5 0.6 0.6 0.8 0.5 -1.1 0.6 -1.5 0.5 0.5 0.6 -0.4 0.5 -1.8 0.6 -0.1 0.5 -0.1 0.6 -1.1 0.5 -0.6 0.6 -1.4 0.5 -0.7 0.6 0.7 0.5 -2.2 0.6 -1.6 0.5 0.7 0.6 -0.3 0.5 -3 0.6 -0.9 0.5 -0.1 0.6 -0.4 0.5 -1.8 0.6 -0.9 0.5 0.6 0.6 -2.3 0.5 -1.6 0.6 -0.1 0.5 0.2 0.6 -1.1 0.5 -1.8 0.6 -1.5 0.5 1.5 0.6 -1.3 0.5 -2.1 0.6 -1.1 0.5 0.4 0.6 1 0.5 -1.8 0.6 -2 0.5 1.3 0.6 0 0.5 -1.4 0.6 -0.6 0.5 1.9 0.6 -1 0.5 -0.9 0.6 0.6 0.5 0.6 0.6 -0.1 0.5 -1.3 0.6 0.2 0.5 1.8 0.6 0.6 0.5 -1.7 0.6 0.5 0.5 1.6 0.6 0.5 0.5 0.4 0.6 -0.1 0.5 1.2 0.6 0.9 0.5 0.4 0.6 -0.5 0.5 2.8 0.6 -0.3 0.5 0 0.6 0.5 0.5 3.4 0.6 -0.2 0.5 -0.1 0.6 0.5 0.5 2.4 0.6 1.9 0.5 -0.2 0.6 1.2 0.5 2.1 0.6 0.3 0.5 0.4 0.6 -0.6 0.5 3.5 0.6 0.1 0.5 -0.8 0.6 1.8 0.5 2.1 0.6 0 0.5 -0.9 0.6 2 0.5 1.6 0.6 0.4 0.5 0.1 0.6 -1.2 0.5 1.6 0.6 0.7 0.5 -1 0.6 1.5 0.5 1.3 0.6 -0.6 0.5 -0.9 0.6 0.1 0.5 2 0.6 0.2 0.5 -0.6 0.6 -1.3 0.5 2.1 0.6 -1.1 0.5 -1.4 0.6 -0.7 0.5 0.8 0.6 1 0.5 -1.6 0.6 -1.1 0.5 -0.3 0.6 -0.5 0.5 -1.8 0.6 -0.4 0.5 1.1 0.6 -1.9 0.5 -1.1 0.6 -0.6 0.5 -0.8 0.6 -0.1 0.5 -1.3 0.6 -1.4 0.5 0 0.6 -0.1 0.5 -2.5 0.6 -1.5 0.5 0.3 0.6 0.1 0.5 -2.2 0.6 -0.9 0.5 -0.4 0.6 -1.6 0.5 -2 0.6 -0.5 0.5 0.8 0.6 -1.9 0.5 -0.5 0.6 -0.9 0.5 -0.1 0.6 -1.5 0.5 -0.3 0.6 -1.4 0.5 1 0.6 -0.6 0.5 -1.3 0.6 -1.1 0.5 1.7 0.6 -0.2 0.5 -1.5 0.6 -0.8 0.5 0.4 0.6 0.1 0.5 -1.4 0.6 1 0.5 1 0.6 0.2 0.5 -0.9 0.6 0.4 0.5 0.9 0.6 -0.3 0.5 0 0.6 -0.5 0.5 2.2 0.6 -0.2 0.5 0.7 0.6 -0.2 0.5 1.4 0.6 1.9 0.5 -1.9 0.6 2.2 0.5 1.6 0.6 -0.2 0.5 0.8 0.6 0.4 0.5 2.7 0.6 0.4 0.5 -0.6 0.6 1.8 0.5 0.5 0.6 2.3 0.5 -1.4 0.6 1.2 0.5 1.7 0.6 2.4 0.5 -1 0.6 1.3 0.5 1.2 0.6 1.8 0.5 -0.5 0.6 -0.2 0.5 2.6 0.6 1.2 0.5 -1.3 0.6 1.4 0.5 1.1 0.6 0.8 0.5 0.4 0.6 0.5 0.5 1.7 0.6 -0.6 0.5 -0.5 0.6 0.7 0.5 1.3 0.6 -0.3 0.5 -0.2 0.6 -0.8 0.5 2.1 0.6 -0.8 0.5 -1.8 0.6 0.9 0.5 -0.1 0.6 0.8 0.5 -2.5 0.6 1.3 0.5 -0.1 0.6 0 0.5 -2.7 0.6 0.3 0.5 0.1 0.6 -0.8 0.5 -0.7 0.6 -2.2 0.5 1.2 0.6 -1.4 0.5 -0.5 0.6 -0.8 0.5 -1.3 0.6 0 0.5 -2 0.6 -0.6 0.5 0.3 0.6 -1.6 0.5 -1 0.6 -2.3 0.5 0.1 0.6 0.4 0.5 -3.4 0.6 -0.8 0.5 0.8 0.6 -1.1 0.5 -2.4 0.6 0.5 0.5 -0.5 0.6 -0.2 0.5 -2.9 0.6 0.4 0.5 -0.8 0.6 0.7 0.5 -2.3 0.6 0 0.5 0.2 0.6 -0.7 0.5 -1.7 0.6 0.1 0.5 0 0.6 -0.8 0.5 0.1 0.6 -0.5 0.5 0.8 0.6 0.1 0.5 -2.1 0.6 0.4 0.5 1.8 0.6 0.5 0.5 -1 0.6 -1.2 0.5 2.3 0.6 0.2 0.5 -1 0.6 0 0.5 1.5 0.6 1.2 0.5 -0.5 0.6 0.2 0.5 1.9 0.6 1.2 0.5 -0.1 0.6 0.4 0.5 1.2 0.6 2.2 0.5 -1.2 0.6 1.8 0.5 2.1 0.6 -0.5 0.5 0.5 0.6 1.6 0.5 1 0.6 1.3 0.5 -0.6 0.6 0.3 0.5 2.4 0.6 0.8 0.5 0.1 0.6 1.4 0.5 1.9 0.6 1.6 0.5 -0.8 0.6 0.2 0.5 2.9 0.6 0.3 0.5 -0.6 0.6 1.1 0.5 1.4 0.6 0.1 0.5 -0.2 0.6 -0.1 0.5 2.8 0.6 -0.9 0.5 0.5 0.6 -1.4 0.5 1.3 0.6 1.2 0.5 -1.6 0.6 0.5 0.5 0.4 0.6 1.4 0.5 -1.6 0.6 -0.2 0.5 1.4 0.6 -0.1 0.5 -2 0.6 -0.3 0.5 -0.6 0.6 -0.3 0.5 -1 0.6 0.4 0.5 -0.7 0.6 0 0.5 -2.9 0.6 0 0.5 1.2 0.6 -1.2 0.5 -1.5 0.6 -2.4 0.5 0.6 0.6 -0.8 0.5 -0.9 0.6 -2.3 0.5 1.7 0.6 -2 0.5 -1 0.6 -1.7 0.5 -0.1 0.6 0.3 0.5 -3.1 0.6 -0.4 0.5 -0.9 0.6 0.5 0.5 -1.7 0.6 -2.5 0.5 1.5 0.6 -1.6 0.5 -2.1 0.6 -0.4 0.5 1 0.6 0 0.5 -1.7 0.6 -0.6 0.5 -0.1 0.6 -0.3 0.5 -2.4 0.6 0.5 0.5 0.5 0.6 -0.5 0.5 -0.4 0.6 -1.4 0.5 0.8 0.6 0.1 0.5 -1.1 0.6 0.7 0.5 1.6 0.6 -0.9 0.5 -0.3 0.6 0.4 0.5 1.4 0.6 0.2 0.5 -0.5 0.6 -0.5 0.5 1.7 0.6 1.3 0.5 -0.9 0.6 1.5 0.5 0.9 0.6 1.9 0.5 -1.5 0.6 0.5 0.5 2.6 0.6 0.8 0.5 -0.4 0.6 1.6 0.5 1 0.6 1.8 0.5 0.1 0.6 0.2 0.5 2.1 0.6 1.8 0.5 -0.8 0.6 0.1 0.5 1.9 0.6 1 0.5 0.2 0.6 0.4 0.5 2.9 0.6 0.6 0.5 -0.6 0.6 1.1 0.5 2.6 0.6 -0.4 0.5 -0.7 0.6 0.9 0.5 1.7 0.6 1.7 0.5 -1 0.6 -0.1 0.5 1 0.6 0.3 0.5 -0.7 0.6 1.4 0.5 1 0.6 -0.6 0.5 -0.2 0.6 -1.1 0.5 1.9 0.6 -0.3 0.5 -1.7 0.6 0.9 0.5 0.9 0.6 -0.6 0.5 -2.1 0.6 0.5 0.5 0.2 0.6 0 0.5 -2.7 0.6 0.8 0.5 -1.1 0.6 -0.1 0.5 -1.6 0.6 -1.1 0.5 0.1 0.6 0.4 0.5 -1.4 0.6 -2.1 0.5 0.1 0.6 0 0.5 -2.9 0.6 -0.7 0.5 0.8 0.6 -1.4 0.5 -2.5 0.6 -1.2 0.5 1.1 0.6 -0.1 0.5 -2.1 0.6 -2.5 0.5 1 0.6 -0.9 0.5 -2.5 0.6 0 0.5 0 0.6 -0.1 0.5 -2.8 0.6 0.4 0.5 0.2 0.6 -1.1 0.5 -2.3 0.6 0 0.5 0 0.6 0.6 0.5 -1.5 0.6 -0.6 0.5 1.5 0.6 -1.8 0.5 -0.1 0.6 -0.1 0.5 -0.2 0.6 0.5 0.5 -1.6 0.6 1 0.5 1.5 0.6 -0.4 0.5 -0.3 0.6 -0.3 0.5 2.1 0.6 -0.3 0.5 0.6 0.6 -0.6 0.5 0.9 0.6 0.8 0.5 0.7 0.6 0.8 0.5 1.4 0.6 0 0.5 0.9 0.6 0.5 0.5 0.8 0.6 1.4 0.5 0.3 0.6 -0.4 0.5 2.1 0.6 1.6 0.5 0.7 0.6 1.1 0.5 0.8 0.6 2.1 0.5 -0.4 0.6 1 0.5 1.5 0.6 1.7 0.5 -0.8 0.6 1.3 0.5 1.3 0.6 0.2 0.5 0.2 0.6 0.6 0.5 1.6 0.6 0.9 0.5 -0.3 0.6 0.7 0.5 1 0.6 0.7 0.5 -0.2 0.6 0.3 0.5 1.4 0.6 0.8 0.5 -1.7 0.6 0.8 0.5 0.8 0.6 1.1 0.5 -1.2 0.6 0.1 0.5 0.6 0.6 -0.5 0.5 -0.1 0.6 -1 0.5 0.6 0.6 -0.4 0.5 -1.3 0.6 0.1 0.5 0.8 0.6 -1 0.5 -1.2 0.6 -1.6 0.5 0.9 0.6 -0.8 0.5 -1.9 0.6 -0.8 0.5 1.1 0.6 -0.8 0.5 -2.9 0.6 -0.9 0.5 1.3 0.6 -1.1 0.5 -2 0.6 -1.1 0.5 0.3 0.6 -1.6 0.5 -2.4 0.6 -0.5 0.5 -0.4 0.6 0.9 0.5 -2.9 0.6 -0.7 0.5 0.8 0.6 -1.1 0.5 -3 0.6 -0.7 0.5 0 0.6 0.5 0.5 -1.9 0.6 -1.2 0.5 0.3 0.6 -0.7 0.5 -1.3 0.6 -0.2 0.5 1 0.6 -0.4 0.5 -1.5 0.6 -1.1 0.5 0.8 0.6 -0.3 0.5 -0.1 0.6 -1.6 0.5 1 0.6 0.3 0.5 0.1 0.6 -0.1 0.5 0.4 0.6 1.2 0.5 -0.7 0.6 -0.6 0.5 1.1 0.6 1.5 0.5 -1.4 0.6 0 0.5 3.1 0.6 -0.1 0.5 -0.6 0.6 1 0.5 1.2 0.6 0.5 0.5 0.3 0.6 0.7 0.5 1.3 0.6 1.6 0.5 0.5 0.6 0 0.5 2.7 0.6 0.9 0.5 -1 0.6 0.6 0.5 3.2 0.6 0.9 0.5 -0.8 0.6 0.7 0.5 3.2 0.6 1.1 0.5 -1.5 0.6 1.4 0.5 1.9 0.6 0.5 0.5 -0.9 0.6 1.2 0.5 2.4 0.6 0.7 0.5 -0.7 0.6 -0.2 0.5 1.8 0.6 0.8 0.5 -0.5 0.6 0.2 0.5 2.5 0.6 -1.1 0.5 0.7 0.6 -1.2 0.5 2.4 0.6 -1 0.5 -0.5 0.6 -0.5 0.5 0.5 0.6 1.3 0.5 -1.3 0.6 -1.3 0.5 1.8 0.6 -0.8 0.5 -0.6 0.6 -2.3 0.5 1.3 0.6 -0.8 0.5 -1 0.6 -0.4 0.5 0.6 0.6 -1.1 0.5 -2.2 0.6 -0.1 0.5 -0.9 0.6 -0.5 0.5 -1.1 0.6 -1.5 0.5 1.2 0.6 -2.4 0.5 -1.4 0.6 -1.4 0.5 -0.2 0.6 -0.7 0.5 -2.1 0.6 -0.5 0.5 0.3 0.6 -0.7 0.5 -2.4 0.6 -0.2 0.5 -0.1 0.6 0.1 0.5 -3.4 0.6 -0.3 0.5 0.3 0.6 -0.8 0.5 -1 0.6 -1.9 0.5 1.7 0.6 -1.4 0.5 -1.7 0.6 0 0.5 0.6 0.6 -0.8 0.5 -1.9 0.6 1.2 0.5 -0.1 0.6 -0.6 0.5 -0.3 0.6 -0.3 0.5 0.7 0.6 0.1 0.5 -0.1 0.6 -0.8 0.5 1.5 0.6 1.3 0.5 -1.9 0.6 0.3 0.5 1.1 0.6 1.5 0.5 -0.6 0.6 0 0.5 1.7 0.6 0.4 0.5 0.5 0.6 0.1 0.5 2.5 0.6 0 0.5 0.4 0.6 -0.6 0.5 2.4 0.6 2.3 0.5 -0.8 0.6 0.8 0.5 1.8 0.6 0.9 0.5 -0.7 0.6 0.9 0.5 2.9 0.6 1.1 0.5 -1 0.6 1.5 0.5 1.1 0.6 1.8 0.5 -1 0.6 1.3 0.5 1.6 0.6 1.3 0.5 -1.1 0.6 1.3 0.5 2 0.6 -0.1 0.5 -0.2 0.6 1.1 0.5 1.4 0.6 0.7 0.5 -0.4 0.6 -0.1 0.5 0.8 0.6 0.8 0.5 -0.3 0.6 -0.4 0.5 1.6 0.6 -0.5 0.5 -1 0.6 0.8 0.5 0.7 0.6 -0.4 0.5 -2.3 0.6 0.6 0.5 -0.3 0.6 1.4 0.5 -1.5 0.6 -1 0.5 -0.2 0.6 0.5 0.5 -2.9 0.6 0.4 0.5 -0.1 0.6 -1.5 0.5 -0.3 0.6 -1.7 0.5 1 0.6 -1 0.5 -2.3 0.6 -0.3 0.5 -1 0.6 0.4 0.5 -3 0.6 -1.6 0.5 0.7 0.6 -1.3 0.5 -2 0.6 -0.1 0.5 -0.7 0.6 -0.7 0.5 -1.8 0.6 -1 0.5 1.5 0.6 -0.8 0.5 -2 0.6 -0.7 0.5 -0.6 0.6 0 0.5 -2.7 0.6 0.5 0.5 0.3 0.6 -0.6 0.5 -2.6 0.6 -0.7 0.5 2.2 0.6 -1 0.5 -1.3 0.6 0.1 0.5 -0.3 0.6 0.9 0.5 -1.6 0.6 0.4 0.5 0.6 0.6 -0.4 0.5 0.4 0.6 -1.1 0.5 2.2 0.6 0.5 0.5 -1.8 0.6 1.1 0.5 1 0.6 0.3 0.5 -0.6 0.6 1.8 0.5 0.7 0.6 1 0.5 -0.5 0.6 -0.2 0.5 3.2 0.6 0.9 0.5 -0.1 0.6 -0.2 0.5 1.7 0.6 1.3 0.5 0.4 0.6 0.7 0.5 1.6 0.6 1.3 0.5 -0.9 0.6 2.2 0.5 1.3 0.6 1.1 0.5 0.2 0.6 -0.2 0.5 3 0.6 0.3 0.5 0.5 0.6 -0.5 0.5 2.2 0.6 1.5 0.5 -0.7 0.6 0.5 0.5 2.1 0.6 0.1 0.5 -0.2 0.6 -0.3 0.5 3 0.6 -0.4 0.5 0.3 0.6 -0.3 0.5 1.5 0.6 0.4 0.5 -1.8 0.6 1.2 0.5 0.3 0.6 1.2 0.5 -1.3 0.6 -0.4 0.5 1.2 0.6 -0.8 0.5 -0.9 0.6 0.1 0.5 -0.6 0.6 -0.5 0.5 -1 0.6 -0.4 0.5 -0.1 0.6 -0.3 0.5 -0.6 0.6 -1.6 0.5 0 0.6 -0.6 0.5 -1.2 0.6 -1.6 0.5 0.8 0.6 -0.7 0.5 -2.1 0.6 -0.9 0.5 0.8 0.6 -2.3 0.5 -0.4 0.6 -2.3 0.5 -0.1 0.6 0.4 0.5 -2.4 0.6 -1 0.5 -0.4 0.6 0.2 0.5 -2.9 0.6 -0.2 0.5 -0.6 0.6 -0.1 0.5 -1.8 0.6 -1.3 0.5 0.6 0.6 -1.4 0.5 -0.7 0.6 -0.6 0.5 -0.4 0.6 0.3 0.5 -1.3 0.6 -1.7 0.5 2.1 0.6 -0.2 0.5 -2.8 0.6 0 0.5 0.7 0.6 0.2 0.5 -1.5 0.6 0.7 0.5 0.7 0.6 0.3 0.5 -0.7 0.6 0 0.5 2.1 0.6 0.3 0.5 -1.9 0.6 0.6 0.5 1.2 0.6 1.1 0.5 -0.9 0.6 1.6 0.5 1.9 0.6 1.1 0.5 -1.8 0.6 0.3 0.5 3.3 0.6 0.2 0.5 0.7 0.6 -0.2 0.5 1.8 0.6 0.6 0.5 1.3 0.6 0.1 0.5 1.9 0.6 1 0.5 0.4 0.6 1 0.5 1.4 0.6 0.5 0.5 0.2 0.6 1.7 0.5 1.1 0.6 1.4 0.5 -0.5 0.6 0.6 0.5 2.1 0.6 0.2 0.5 0.2 0.6 1.1 0.5 0.4 0.6 1.2 0.5 0.3 0.6 0.6 0.5 -0.1 0.6 1.6 0.5 -0.8 0.6 0.6 0.5 0.8 0.6 -0.4 0.5 -0.6 0.6 0.7 0.5 1.2 0.6 -0.8 0.5 -0.4 0.6 -0.2 0.5 0.9 0.6 -1.2 0.5 -0.7 0.6 -0.6 0.5 1.2 0.6 -0.8 0.5 -2 0.6 0.4 0.5 -0.1 0.6 0.3 0.5 -2.6 0.6 -0.3 0.5 0.8 0.6 -1.9 0.5 -0.8 0.6 -2.1 0.5 1.9 0.6 -2.5 0.5 -0.7 0.6 -1.6 0.5 -0.2 0.6 -0.4 0.5 -1.9 0.6 -1.2 0.5 -0.3 0.6 -0.1 0.5 -2.5 0.6 0.2 0.5 -0.8 0.6 -0.7 0.5 -2.4 0.6 0.4 0.5 -0.9 0.6 -0.1 0.5 -1.6 0.6 -1.6 0.5 1.1 0.6 -1.4 0.5 -2.1 0.6 -0.8 0.5 1.3 0.6 0.4 0.5 -2.8 0.6 -0.1 0.5 1.4 0.6 -1.1 0.5 -1.6 0.6 0.4 0.5 0.8 0.6 0.9 0.5 -1.2 0.6 -1.3 0.5 1.8 0.6 0 0.5 -1.6 0.6 0.9 0.5 2.2 0.6 -0.7 0.5 -0.2 0.6 0.6 0.5 0.5 0.6 2.1 0.5 -2 0.6 0.9 0.5 2.5 0.6 -0.4 0.5 0.2 0.6 0.2 0.5 2.6 0.6 0.1 0.5 -0.1 0.6 1 0.5 1.7 0.6 1 0.5 0 0.6 1.4 0.5 1.4 0.6 2.2 0.5 -0.9 0.6 0.6 0.5 2 0.6 2.1 0.5 -1.7 0.6 2.1 0.5 0.8 0.6 2.5 0.5 -1.3 0.6 1.1 0.5 2.3 0.6 -0.5 0.5 -0.5 0.6 1.7 0.5 1.5 0.6 0.9 0.5 -1.4 0.6 0.8 0.5 1 0.6 0.9 0.5 -1 0.6 0.7 0.5 0.9 0.6 0.2 0.5 -0.4 0.6 -1 0.5 2.5 0.6 -0.5 0.5 -1.7 0.6 -0.5 0.5 1.7 0.6 -0.2 0.5 -1.1 0.6 -1 0.5 0.8 0.6 0.4 0.5 -2.7 0.6 0.6 0.5 0.4 0.6 -0.4 0.5 -1.8 0.6 -2.1 0.5 1.4 0.6 -1 0.5 -2.7 0.6 0.5 0.5 -0.3 0.6 -0.5 0.5 -2.5 0.6 -1.9 0.5 1.6 0.6 -2 0.5 -1.9 0.6 -0.4 0.5 -0.6 0.6 -0.4 0.5 -1.6 0.6 -2.1 0.5 1.3 0.6 -1.8 0.5 -1.3 0.6 -0.6 0.5 0.3 0.6 -1.8 0.5 -1.6 0.6 0.5 0.5 -0.5 0.6 -0.5 0.5 -1.9 0.6 0 0.5 0.7 0.6 -0.6 0.5 -2 0.6 -0.1 0.5 0.7 0.6 -0.8 0.5 0 0.6 -0.2 0.5 0.7 0.6 0.4 0.5 -2.1 0.6 0.7 0.5 0.1 0.6 1.2 0.5 -1 0.6 0.6 0.5 1.3 0.6 0.5 0.5 -1.8 0.6 1.3 0.5 1.1 0.6 0.3 0.5 -0.4 0.6 1.4 0.5 1.9 0.6 0.8 0.5 -0.7 0.6 -0.2 0.5 1.9 0.6 1.6 0.5 -0.9 0.6 1.1 0.5 1.6 0.6 1.1 0.5 0.8 0.6 -0.1 0.5 3.2 0.6 0.1 0.5 0.7 0.6 -0.1 0.5 2 0.6 1.2 0.5 -0.9 0.6 1.5 0.5 1.9 0.6 0.3 0.5 1.2 0.6 -0.2 0.5 1.2 0.6 2.5 0.5 -1.8 0.6 0.6 0.5 1.3 0.6 0.8 0.5 0.5 0.6 0.1 0.5 1.4 0.6 0 0.5 -0.7 0.6 1.4 0.5 0.2 0.6 1.4 0.5 -1.3 0.6 -1.4 0.5 2.4 0.6 -1.4 0.5 -0.1 0.6 0 0.5 0.7 0.6 -0.5 0.5 -1 0.6 -1.7 0.5 1.4 0.6 -0.9 0.5 -1.4 0.6 -1 0.5 1.4 0.6 -0.8 0.5 -1.4 0.6 -1.1 0.5 0.3 0.6 -0.1 0.5 -2.2 0.6 -1.3 0.5 -0.2 0.6 0.3 0.5 -3.1 0.6 -1.4 0.5 0.6 0.6 -0.2 0.5 -1.7 0.6 -1.5 0.5 0.2 0.6 -0.3 0.5 -2.4 0.6 -1.5 0.5 0.2 0.6 -0.2 0.5 -2.8 0.6 -1.3 0.5 1.3 0.6 -0.4 0.5 -2.8 0.6 0 0.5 0.8 0.6 -1.9 0.5 -1.7 0.6 0 0.5 0.4 0.6 0.7 0.5 -1.4 0.6 -1.4 0.5 1.4 0.6 -0.4 0.5 -2.2 0.6 1.2 0.5 -0.3 0.6 -0.2 0.5 -0.4 0.6 -0.8 0.5 2.1 0.6 0.2 0.5 0.1 0.6 -0.8 0.5 2.3 0.6 0.4 0.5 -1.1 0.6 -0.2 0.5 1.8 0.6 1 0.5 -0.7 0.6 1.1 0.5 1.5 0.6 0.5 0.5 0.2 0.6 1.4 0.5 0.5 0.6 1.2 0.5 -0.8 0.6 0.9 0.5 2 0.6 1.7 0.5 0.5 0.6 0.6 0.5 2.5 0.6 0.8 0.5 -0.6 0.6 0.8 0.5 1 0.6 1.7 0.5 -0.5 0.6 1.4 0.5 1 0.6 1.8 0.5 -0.7 0.6 0.9 0.5 1.7 0.6 0.2 0.5 0.7 0.6 0.7 0.5 1.3 0.6 -0.3 0.5 0.2 0.6 0.9 0.5 1.7 0.6 0 0.5 -2.1 0.6 1.6 0.5 0.9 0.6 -0.5 0.5 0.1 0.6 -0.2 0.5 1.2 0.6 -1.2 0.5 -0.7 0.6 -0.6 0.5 0.7 0.6 0.6 0.5 -1.8 0.6 -1 0.5 1.1 0.6 0.2 0.5 -2.3 0.6 0 0.5 -0.2 0.6 0.2 0.5 -3.6 0.6 0 0.5 0.5 0.6 -0.4 0.5 -1.6 0.6 -1.5 0.5 0 0.6 -0.6 0.5 -2.2 0.6 -0.7 0.5 0.7 0.6 -2.6 0.5 -1.5 0.6 0 0.5 -1.3 0.6 0.5 0.5 -3.4 0.6 0.1 0.5 0.5 0.6 -1.7 0.5 -1.7 0.6 -1.2 0.5 1.2 0.6 -1 0.5 -1.7 0.6 -1.3 0.5 1 0.6 0.1 0.5 -2 0.6 -0.2 0.5 -0.6 0.6 0.1 0.5 -1.7 0.6 -0.5 0.5 1.7 0.6 -1.3 0.5 -0.6 0.6 0.2 0.5 1.4 0.6 -1.6 0.5 -0.6 0.6 0.5 0.5 2.1 0.6 -1.1 0.5 0.3 0.6 -0.5 0.5 1.8 0.6 1.2 0.5 -2.2 0.6 0.9 0.5 1.4 0.6 0.6 0.5 -0.2 0.6 1.4 0.5 1.6 0.6 0 0.5 0.9 0.6 0.2 0.5 1.3 0.6 2.2 0.5 -0.3 0.6 -0.2 0.5 3.3 0.6 0.8 0.5 -1.3 0.6 0.5 0.5 3.6 0.6 0.9 0.5 -1.5 0.6 2.1 0.5 2 0.6 0.7 0.5 0.1 0.6 1.1 0.5 0.8 0.6 1.7 0.5 -0.1 0.6 -0.5 0.5 2.5 0.6 0.8 0.5 -0.2 0.6 0 0.5 1.1 0.6 0.5 0.5 -0.1 0.6 -0.4 0.5 2.8 0.6 0.4 0.5 -2 0.6 0.9 0.5 1.2 0.6 -0.8 0.5 0.1 0.6 -0.1 0.5 0.2 0.6 -0.4 0.5 -1 0.6 0.5 0.5 0.3 0.6 0.4 0.5 -2.7 0.6 -0.6 0.5 1 0.6 0.5 0.5 -3 0.6 -0.8 0.5 1.7 0.6 -1.8 0.5 -0.9 0.6 -1.9 0.5 0.7 0.6 0 0.5 -1.6 0.6 -1.8 0.5 0.3 0.6 -1.6 0.5 -1.5 0.6 -1.1 0.5 1.1 0.6 -0.9 0.5 -2 0.6 -1.5 0.5 0.6 0.6 -1.9 0.5 -1.6 0.6 -1.1 0.5 0.2 0.6 0.1 0.5 -2.9 0.6 -0.7 0.5 0.3 0.6 0.4 0.5 -2.2 0.6 -1.1 0.5 0.4 0.6 0.5 0.5 -1.7 0.6 -1.4 0.5 0.9 0.6 0.2 0.5 -2.5 0.6 -0.4 0.5 0.6 0.6 0.6 0.5 -0.8 0.6 -1.2 0.5 1.6 0.6 1.1 0.5 -1.9 0.6 -0.1 0.5 2.1 0.6 0.4 0.5 -1.7 0.6 -0.2 0.5 2.5 0.6 0.7 0.5 -0.3 0.6 0 0.5 1.1 0.6 1.1 0.5 -0.9 0.6 0.9 0.5 1.9 0.6 1.7 0.5 -0.4 0.6 0.8 0.5 1.2 0.6 1.8 0.5 -1.7 0.6 2.2 0.5 1.6 0.6 1.4 0.5 -1 0.6 1.9 0.5 0.3 0.6 2.5 0.5 -0.3 0.6 0.1 0.5 2.8 0.6 -0.1 0.5 0.7 0.6 0.2 0.5 1.9 0.6 0.4 0.5 0.8 0.6 0.5 0.5 0.6 0.6 2.4 0.5 -1.9 0.6 0.7 0.5 1.7 0.6 0.9 0.5 -0.2 0.6 0.4 0.5 0.9 0.6 -0.1 0.5 -1.4 0.6 0 0.5 2.1 0.6 0.2 0.5 -1.3 0.6 0.8 0.5 0 0.6 -0.2 0.5 -1.2 0.6 -0.8 0.5 2.2 0.6 -0.9 0.5 -1.7 0.6 -0.7 0.5 0.3 0.6 -0.4 0.5 -1.4 0.6 -0.8 0.5 1.4 0.6 -1.4 0.5 -2.5 0.6 -1.2 0.5 0.6 0.6 -0.5 0.5 -1.2 0.6 -0.7 0.5 -1 0.6 0.2 0.5 -2.7 0.6 -0.8 0.5 0.2 0.6 -1.8 0.5 -2 0.6 0.1 0.5 0.2 0.6 -1.4 0.5 -1 0.6 -1.2 0.5 -0.6 0.6 -1.2 0.5 -1 0.6 -0.7 0.5 -0.4 0.6 -1 0.5 -1 0.6 -1.5 0.5 1.8 0.6 -0.7 0.5 -2.2 0.6 -0.3 0.5 0.4 0.6 -0.4 0.5 -1.4 0.6 0.8 0.5 0.2 0.6 0.4 0.5 -1.9 0.6 0.7 0.5 0.8 0.6 0.3 0.5 -1.5 0.6 0.4 0.5 0.7 0.6 1.8 0.5 -1.4 0.6 0.1 0.5 1.7 0.6 -0.4 0.5 -0.2 0.6 0.3 0.5 2.9 0.6 -0.8 0.5 0.4 0.6 1.4 0.5 1.7 0.6 0.8 0.5 -1.1 0.6 0.6 0.5 2.9 0.6 0.2 0.5 0.6 0.6 0.1 0.5 2.8 0.6 0.7 0.5 0.2 0.6 1.2 0.5 1 0.6 2.1 0.5 -2 0.6 2.4 0.5 0.5 0.6 1.9 0.5 -0.6 0.6 1.4 0.5 1.1 0.6 0.7 0.5 0.6 0.6 0.2 0.5 2.2 0.6 0.2 0.5 -1.3 0.6 1.7 0.5 0.7 0.6 0.9 0.5 -1.5 0.6 0.7 0.5 2.2 0.6 0.5 0.5 -1.2 0.6 -0.3 0.5 1.7 0.6 0 0.5 -2 0.6 0.4 0.5 1.1 0.6 0.2 0.5 -2.4 0.6 -0.1 0.5 0.8 0.6 -0.8 0.5 -1.1 0.6 0.1 0.5 0.4 0.6 -1.3 0.5 -0.7 0.6 -1.9 0.5 1.6 0.6 -1.8 0.5 -1.9 0.6 -0.6 0.5 0.7 0.6 -1.2 0.5 -0.9 0.6 -0.9 0.5 -0.9 0.6 0 0.5 -2.2 0.6 -1.2 0.5 -0.4 0.6 0.4 0.5 -2 0.6 -2.7 0.5 0.8 0.6 -0.9 0.5 -2.2 0.6 -0.5 0.5 1.1 0.6 -2.3 0.5 -0.5 0.6 -1.8 0.5 -0.1 0.6 1 0.5 -2.9 0.6 -0.8 0.5 0.4 0.6 0 0.5 -2.1 0.6 -0.4 0.5 0.9 0.6 0.3 0.5 -1.6 0.6 -0.6 0.5 1.4 0.6 0.4 0.5 -1.3 0.6 -0.8 0.5 2.2 0.6 0 0.5 -1.4 0.6 0 0.5 1.1 0.6 0 0.5 0.6 0.6 -0.2 0.5 0.7 0.6 2.1 0.5 -0.7 0.6 -1 0.5 3 0.6 -0.1 0.5 0.1 0.6 1.2 0.5 1.1 0.6 1.1 0.5 0 0.6 0 0.5 2.7 0.6 0.7 0.5 0.7 0.6 -0.5 0.5 3 0.6 -0.2 0.5 0.2 0.6 0.6 0.5 2.1 0.6 1.7 0.5 -0.9 0.6 1.9 0.5 0.8 0.6 1.9 0.5 0.1" fill="none" stroke="#e3334f" stroke-width="2.6" stroke-linejoin="round"/>
<path d="M3 770.8l0.6 1 0.5 3.2 0.5 4.6 0.6 3.7 0.5 1 0.6 3.3 0.5 5.7 0.6 3.1 0.5 2.2 0.6 3.3 0.5 4.8 0.6 3.9 0.6 1.9 0.5 2.6 0.6 5.6 0.5 3.2 0.6 1.2 0.5 2.6 0.6 4.2 0.5 3.3 0.6 -0.2 0.5 2.5 0.6 3.7 0.5 1.5 0.6 -0.1 0.5 0.8 0.6 3.1 0.5 0.2 0.6 -0.7 0.5 -0.5 0.6 2.1 0.5 -0.6 0.6 -2.2 0.5 -1.5 0.6 0.9 0.5 -1.7 0.6 -3.2 0.5 -2.3 0.6 0.3 0.5 -2.3 0.6 -4.6 0.5 -2.4 0.6 -1 0.5 -2.9 0.6 -5.7 0.5 -2.9 0.6 -1.5 0.5 -3.3 0.6 -5.8 0.5 -2.9 0.6 -2.1 0.5 -3.3 0.6 -5.1 0.5 -4 0.6 -1.7 0.5 -2.5 0.6 -5.5 0.5 -3.4 0.6 -1 0.5 -1.9 0.6 -4.6 0.5 -3 0.5 -0.4 0.6 -1.2 0.5 -3.8 0.6 -1.7 0.5 0.2 0.6 -0.6 0.5 -2.2 0.6 -1.4 0.5 2 0.6 -0.1 0.5 -0.8 0.6 -0.2 0.5 3.3 0.6 1.2 0.5 -0.6 0.6 0.9 0.5 4.2 0.6 2 0.5 0.5 0.6 2 0.5 4.8 0.6 3.2 0.5 0.6 0.6 3.5 0.5 4.7 0.6 3.3 0.5 1.6 0.6 3.5 0.5 5.5 0.6 3.6 0.5 1.9 0.6 3.1 0.5 5.3 0.6 3.9 0.5 0.8 0.6 2.9 0.5 5.2 0.6 3.1 0.5 0.8 0.6 2.8 0.5 3.9 0.6 3.1 0.5 -0.1 0.6 2 0.5 3.2 0.6 1.5 0.5 -0.7 0.6 0.3 0.5 2.8 0.6 0 0.5 -1.5 0.6 -0.4 0.5 1.5 0.6 -1.1 0.5 -2.7 0.6 -1 0.5 0.2 0.6 -1.4 0.5 -4.5 0.6 -2.3 0.5 -0.7 0.6 -1.9 0.5 -4.6 0.6 -3.1 0.5 -1.2 0.6 -3.2 0.5 -5.1 0.6 -3.2 0.5 -1.9 0.6 -3.3 0.5 -5.4 0.6 -3.7 0.5 -1.5 0.6 -3.5 0.5 -5.6 0.6 -3.2 0.5 -1.4 0.6 -3 0.5 -4.8 0.6 -3.1 0.5 -0.8 0.6 -2.4 0.5 -4.2 0.6 -1.7 0.5 -0.8 0.6 -1.6 0.5 -2.7 0.6 -1.5 0.5 1 0.6 -0.4 0.5 -2.4 0.6 -0.4 0.5 1.8 0.6 1.3 0.5 -1.1 0.6 0.2 0.5 3.2 0.6 1.5 0.5 -0.4 0.6 2.5 0.5 3.9 0.6 2 0.5 0.7 0.6 3 0.5 4.7 0.6 2.9 0.5 1.3 0.6 3 0.5 5.6 0.6 3.6 0.5 1.7 0.6 2.8 0.5 5.7 0.6 4 0.5 1.4 0.6 3.1 0.5 4.9 0.6 3.4 0.5 1.8 0.6 2.4 0.5 5.4 0.6 2.7 0.5 0.6 0.6 2.6 0.5 4 0.6 1.8 0.5 -0.5 0.6 1.8 0.5 2.9 0.6 1 0.5 -0.6 0.6 0.2 0.5 1.5 0.6 0.2 0.5 -2.1 0.6 -0.5 0.5 0.7 0.6 -0.9 0.5 -2.9 0.6 -2.2 0.5 0.4 0.6 -2.3 0.5 -3.6 0.6 -2.6 0.5 -1.3 0.6 -2.5 0.5 -5.2 0.6 -3 0.5 -1.2 0.6 -3.2 0.5 -5.5 0.6 -3.8 0.5 -1.6 0.6 -3.1 0.5 -5.6 0.6 -3.5 0.5 -1.4 0.6 -3 0.5 -5.5 0.6 -3.5 0.5 -1 0.6 -3.1 0.5 -4.2 0.6 -3.2 0.5 -0.6 0.6 -1.9 0.5 -3.5 0.6 -2.5 0.5 0.3 0.6 -1.3 0.5 -2.8 0.6 -0.9 0.5 1.4 0.6 0.1 0.5 -2.1 0.6 0.2 0.5 2.3 0.6 1.2 0.5 -0.7 0.6 0.8 0.5 3.8 0.6 1.3 0.5 0.8 0.6 1.7 0.5 4.4 0.6 2.5 0.5 0.8 0.6 2.7 0.5 5.5 0.6 2.9 0.5 1.8 0.6 3 0.5 5.4 0.6 3.3 0.5 1.7 0.6 3.5 0.5 5.6 0.6 3.5 0.5 1.1 0.6 3.8 0.5 4.9 0.6 2.9 0.5 1.3 0.6 2.7 0.5 5 0.6 2.4 0.6 0.3 0.5 1.9 0.6 3.7 0.5 1.8 0.6 -0.4 0.5 1.4 0.6 2.7 0.5 0.7 0.6 -1.3 0.5 -0.3 0.6 1.3 0.5 -0.4 0.6 -2.4 0.5 -1.1 0.6 0.9 0.5 -1.1 0.6 -3.8 0.5 -2.1 0.6 -0.5 0.5 -1.6 0.6 -4.6 0.5 -3.2 0.6 -1.3 0.5 -2.1 0.6 -5.6 0.5 -2.9 0.6 -2.1 0.5 -2.9 0.6 -5.6 0.5 -3.2 0.6 -2.1 0.5 -3.6 0.6 -5.2 0.5 -3.1 0.6 -1.4 0.5 -3.4 0.6 -4.9 0.5 -3.5 0.6 -1.1 0.5 -2.7 0.6 -3.7 0.5 -3.3 0.6 0.2 0.5 -2 0.6 -3.7 0.5 -1.4 0.6 1 0.5 -1.4 0.6 -2.6 0.5 -0.2 0.6 1.7 0.5 0.1 0.6 -1.8 0.5 1.1 0.6 2.1 0.5 1.3 0.6 -0.4 0.5 1.7 0.6 3.7 0.5 2.3 0.6 0.6 0.5 2.5 0.6 4.2 0.5 2.6 0.6 1.8 0.5 2.3 0.6 5.3 0.5 3.3 0.6 2 0.5 3.5 0.6 4.8 0.5 3.8 0.6 2.1 0.5 3.2 0.6 4.8 0.5 4 0.6 1.6 0.5 2.7 0.6 4.7 0.5 3.5 0.6 0.7 0.5 2.3 0.6 4.3 0.5 2.5 0.6 0 0.5 1.8 0.6 3.5 0.5 1.5 0.6 -0.9 0.5 0.9 0.6 1.8 0.5 0.6 0.6 -1.3 0.5 -0.5 0.6 1.3 0.5 -0.8 0.6 -3 0.5 -1.3 0.6 0.1 0.5 -2 0.6 -3.7 0.5 -2.5 0.6 0 0.5 -2.9 0.6 -4.6 0.5 -3 0.6 -1.6 0.5 -2.6 0.6 -5 0.5 -3.5 0.6 -1.6 0.5 -3.8 0.6 -5.5 0.5 -3.1 0.6 -1.8 0.5 -3.6 0.6 -5.2 0.5 -3.6 0.6 -0.9 0.5 -3.3 0.6 -4.5 0.5 -3.3 0.6 -0.9 0.5 -2.2 0.6 -3.9 0.5 -2.1 0.6 -0.4 0.5 -1.3 0.6 -3.4 0.5 -0.9 0.6 0.9 0.5 -0.6 0.6 -2.4 0.5 -0.3 0.6 2.6 0.5 0.5 0.6 -1.5 0.5 0.6 0.6 3.2 0.5 2.2 0.6 -0.8 0.5 2.4 0.6 3.8 0.5 2.5 0.6 0.7 0.5 2.5 0.6 4.9 0.5 2.8 0.6 2 0.5 2.5 0.6 5.2 0.5 4 0.6 1.6 0.5 3.5 0.6 5.3 0.5 3.8 0.6 1 0.5 3.2 0.6 5.4 0.5 3.8 0.6 0.8 0.5 3.2 0.6 4.9 0.5 2.4 0.6 1 0.5 2.5 0.6 3.9 0.5 1.7 0.6 0 0.5 1.1 0.6 3.6 0.5 0.9 0.6 -1.2 0.5 0 0.6 2.3 0.5 -0.1 0.6 -2 0.5 -1.1 0.6 1.3 0.5 -1.2 0.6 -3.4 0.5 -1.7 0.6 0.2 0.5 -2.2 0.6 -3.8 0.5 -3.4 0.6 -0.2 0.5 -2.8 0.6 -5 0.5 -3 0.6 -2 0.5 -3 0.6 -5 0.5 -3.5 0.6 -2 0.5 -2.9 0.6 -5.6 0.5 -4.1 0.6 -1.6 0.5 -3.3 0.6 -4.7 0.5 -3.5 0.6 -1.3 0.5 -2.7 0.6 -4.9 0.5 -2 0.6 -0.6 0.5 -2.3 0.6 -4 0.5 -2 0.6 0.6 0.5 -1.4 0.6 -2.3 0.5 -0.9 0.6 1.1 0.5 0 0.6 -2.4 0.5 0.2 0.6 2.5 0.5 0.8 0.6 -0.5 0.5 1.6 0.6 3.3 0.5 2.1 0.6 -0.4 0.5 2.1 0.6 4.1 0.5 3 0.6 0.8 0.5 3.2 0.6 4.7 0.5 3.7 0.6 1.3 0.5 3.3 0.6 5.1 0.5 4 0.6 1.6 0.5 3.4 0.6 5.2 0.5 3.5 0.6 1.5 0.5 3 0.6 5.4 0.5 3.3 0.6 0.8 0.5 3.2 0.6 4.5 0.5 2.6 0.6 0.4 0.5 1.7 0.6 3.4 0.5 1.8 0.6 -0.1 0.5 1.2 0.6 2 0.5 0.6 0.6 -1.2 0.5 -0.1 0.6 1.8 0.5 -0.7 0.6 -2 0.5 -1.6 0.6 1.1 0.5 -1.9 0.6 -3.5 0.5 -2.2 0.6 0.2 0.5 -2.5 0.6 -4.2 0.5 -3.5 0.6 -0.7 0.5 -2.8 0.6 -4.8 0.5 -3.4 0.6 -2.3 0.5 -3 0.6 -4.9 0.5 -4 0.6 -1.3 0.5 -4 0.6 -5.5 0.5 -2.8 0.6 -2 0.5 -2.9 0.6 -5.2 0.5 -2.9 0.6 -0.8 0.5 -2.5 0.6 -4.4 0.5 -3 0.6 0.2 0.5 -2.5 0.6 -3.2 0.5 -1.1 0.6 0.1 0.5 -0.7 0.6 -2.3 0.5 -0.9 0.6 2.1 0.5 0.2 0.6 -1.9 0.5 1.2 0.6 2.1 0.5 1.8 0.6 -0.7 0.5 1.4 0.6 3.7 0.5 3 0.6 0.3 0.5 2.1 0.6 4.8 0.5 3.1 0.6 1.2 0.5 2.7 0.6 4.9 0.5 3.6 0.6 2 0.5 3.1 0.6 5.3 0.5 3.8 0.6 1.3 0.5 3.5 0.6 5.5 0.5 3 0.6 2 0.5 2.4 0.6 5.3 0.5 3 0.6 0.6 0.5 3.1 0.6 3.8 0.5 2.2 0.6 0.3 0.5 1.7 0.6 3.2 0.5 1.1 0.6 -0.8 0.5 1.2 0.6 1.8 0.5 0.5 0.6 -1.5 0.5 -0.4 0.6 1.3 0.5 -1.3 0.6 -3 0.5 -0.9 0.6 0.1 0.5 -1.9 0.6 -4.1 0.5 -2.1 0.6 -0.8 0.5 -2.2 0.6 -4.4 0.5 -3.7 0.6 -1.3 0.5 -2.6 0.6 -5.7 0.5 -3.4 0.6 -1.4 0.5 -3 0.6 -5.9 0.5 -3.6 0.6 -1.5 0.5 -3.6 0.6 -5.1 0.5 -3.2 0.6 -1.6 0.5 -2.6 0.6 -5.3 0.5 -3 0.6 -0.4 0.5 -2.5 0.6 -3.7 0.5 -2.8 0.6 0.5 0.5 -1.5 0.6 -3.4 0.5 -1.4 0.6 1.4 0.5 -0.4 0.6 -2.3 0.5 -0.2 0.6 2.2 0.5 0.6 0.6 -1.2 0.5 0.7 0.6 3.3 0.5 1.7 0.6 0.2 0.5 2 0.6 3.6 0.5 2.4 0.6 0.7 0.5 2.9 0.6 4.9 0.5 2.8 0.6 1.7 0.5 3.4 0.6 4.7 0.5 4 0.6 1.3 0.5 3.5 0.6 5.5 0.5 3.1 0.6 1.8 0.5 3.8 0.6 4.4 0.5 3.6 0.6 1.4 0.5 3.1 0.6 4.6 0.5 3.1 0.6 0.5 0.5 1.6 0.6 4 0.5 2 0.6 0.1 0.5 1 0.6 3.4 0.5 1.1 0.6 -1.5 0.5 0.8 0.6 1.6 0.5 0.4 0.6 -2.7 0.5 -0.6 0.6 0.8 0.5 -1.3 0.6 -2.8 0.5 -2.5 0.6 0.1 0.5 -1.9 0.6 -3.7 0.5 -3 0.6 -1.3 0.5 -2.5 0.6 -4.6 0.5 -3.1 0.6 -2 0.5 -2.7 0.6 -5.5 0.5 -3.5 0.6 -1.8 0.5 -3.4 0.6 -4.9 0.5 -3.7 0.6 -1.6 0.5 -3.3 0.6 -5.2 0.5 -3.7 0.6 -1.3 0.5 -2.2 0.6 -4.7 0.5 -2.7 0.6 -0.8 0.5 -2.1 0.6 -3.2 0.5 -2.2 0.6 -0.1 0.5 -0.8 0.6 -2.9 0.5 -1 0.6 2 0.5 -0.1 0.6 -1.8 0.5 -0.5 0.6 2.8 0.5 0.7 0.6 -0.2 0.5 1.3 0.6 3.4 0.5 2 0.6 -0.3 0.5 2.1 0.6 4.3 0.5 3.4 0.6 1 0.5 2.6 0.6 4.7 0.5 3.9 0.6 0.9 0.5 3.4 0.6 5.1 0.5 4.4 0.6 1.2 0.5 3.7 0.6 5.3 0.5 3.4 0.6 1.9 0.5 3 0.6 5.2 0.5 3.2 0.6 0.4 0.5 3.2 0.6 4.1 0.5 2.6 0.6 0.4 0.5 2.5 0.6 2.9 0.5 1.9 0.6 -0.7 0.5 1.6 0.6 2.3 0.5 0.8 0.6 -1.7 0.5 0.1 0.6 1.2 0.5 -0.3 0.6 -2.3 0.5 -1.2 0.6 0.7 0.5 -1.9 0.6 -3.2 0.5 -2.2 0.6 -0.5 0.5 -2.4 0.6 -4.3 0.5 -3.3 0.6 -1.1 0.5 -2.8 0.6 -5.2 0.5 -3.4 0.6 -1.1 0.5 -3.3 0.6 -5.4 0.5 -3.9 0.6 -1.3 0.5 -3.3 0.6 -5.5 0.5 -3.8 0.6 -1.3 0.5 -3.2 0.6 -5.1 0.5 -3.2 0.6 -0.4 0.5 -2.8 0.6 -4.1 0.5 -3 0.6 -0.2 0.5 -1.5 0.6 -3.9 0.5 -1.3 0.6 0.9 0.5 -0.8 0.6 -2.2 0.5 -0.7 0.6 1.8 0.5 0.2 0.6 -1.2 0.5 0.2 0.6 2.5 0.5 2.1 0.6 -0.5 0.5 1.1 0.6 3.7 0.5 2.4 0.6 0.8 0.5 2 0.6 4.5 0.5 3.4 0.6 0.8 0.5 3.2 0.6 5.2 0.5 3.4 0.6 1.4 0.5 3.6 0.6 5.3 0.5 3.7 0.6 1.8 0.5 3.3 0.6 5.2 0.5 3.2 0.6 2.1 0.5 3 0.6 4.7 0.5 2.6 0.6 1.1 0.5 2.9 0.6 3.9 0.5 2.1 0.6 0.6 0.5 1.6 0.6 2.7 0.5 1.7 0.6 -0.9 0.5 0.3 0.6 2.4 0.5 0.6 0.6 -1.9 0.5 -0.5 0.6 1.2 0.5 -1 0.6 -3.2 0.5 -1.5 0.6 0.8 0.5 -1.7 0.6 -3.9 0.5 -3 0.6 -0.1 0.5 -3.1 0.6 -4.5 0.5 -3.2 0.6 -0.8 0.5 -3.1 0.6 -5.2 0.5 -3.9 0.6 -1.2 0.5 -3.9 0.6 -5.1 0.5 -3.5 0.6 -2 0.5 -3.2 0.6 -5.5 0.5 -2.9 0.6 -1.8 0.5 -3 0.6 -4.7 0.5 -2.6 0.6 -0.8 0.5 -2.4 0.6 -3.7 0.5 -2.3 0.6 -0.4 0.5 -1.1 0.6 -3.4 0.5 -1.2 0.6 1 0.5 -0.5 0.6 -1.8 0.5 0.3 0.6 1.9 0.5 0.2 0.6 -0.9 0.5 1.2 0.6 3.1 0.5 1.3 0.6 0 0.5 2.2 0.6 4.1 0.5 2.2 0.6 1.3 0.5 2.2 0.6 5.1 0.5 3.1 0.6 1.3 0.5 3.6 0.6 4.8 0.5 3.6 0.6 1.8 0.5 3.6 0.6 5.4 0.5 3.5 0.6 1.5 0.5 3.4 0.6 5.1 0.5 3.6 0.6 1.3 0.5 2.7 0.6 4.2 0.5 3.1 0.6 0.5 0.5 2 0.6 4.4 0.5 1.5 0.6 0.2 0.5 1.1 0.6 2.9 0.5 1.2 0.6 -1.2 0.5 0.4 0.6 1.9 0.5 -0.2 0.6 -2.7 0.5 -0.5 0.6 0.7 0.5 -0.7 0.6 -3.7 0.5 -2 0.6 -0.3 0.5 -1.7 0.6 -4.2 0.5 -2.8 0.6 -1.1 0.5 -2.5 0.6 -5.2 0.5 -3.2 0.6 -1.2 0.5 -3.3 0.6 -5.2 0.5 -3.5 0.6 -1.8 0.5 -3.6 0.6 -5.5 0.5 -3.1 0.6 -1.3 0.5 -3.8 0.6 -5 0.5 -3.3 0.6 -0.9 0.5 -2.9 0.6 -4.4 0.5 -3.3 0.6 -0.4 0.5 -1.9 0.6 -3.7 0.5 -1.8 0.6 0.4 0.5 -0.6 0.6 -3.2 0.5 -0.7 0.6 1.7 0.5 -0.3 0.6 -1.8 0.5 0.5 0.6 2 0.5 0.8 0.6 0.1 0.5 0.9 0.6 3.5 0.5 1.6 0.6 0.8 0.5 1.9 0.6 4.6 0.5 2.5 0.6 1.5 0.5 2.4 0.6 4.9 0.5 3.9 0.6 1 0.5 3.3 0.6 5.4 0.5 4.1 0.6 1 0.5 3.4 0.6 5.8 0.5 3 0.6 1.8 0.5 3.5 0.6 5 0.5 3.2 0.6 0.6 0.5 3.2 0.6 4 0.5 3 0.6 0.1 0.5 2.2 0.6 3.2 0.5 1.5 0.6 -0.6 0.5 1.2 0.6 2.2 0.5 0.7 0.6 -1 0.5 -0.4 0.6 1.8 0.5 -1 0.6 -2.4 0.5 -1.2 0.6 0.2 0.5 -1.3 0.6 -3.1 0.5 -2.3 0.6 -0.6 0.5 -2.2 0.6 -4.3 0.5 -2.8 0.6 -1.5 0.5 -3.3 0.6 -4.4 0.5 -4 0.6 -1.5 0.5 -3.4 0.6 -5.1 0.5 -3.6 0.6 -1.7 0.5 -3.4 0.6 -5.6 0.5 -3 0.6 -1.7 0.5 -3.2 0.6 -4.6 0.5 -3 0.6 -1 0.5 -2.5 0.6 -5 0.5 -2.1 0.6 -0.2 0.5 -1.9 0.6 -3 0.5 -1.4 0.6 0.1 0.5 -0.4 0.6 -2.1 0.5 -0.5 0.6 1.4 0.5 0.1 0.6 -1.1 0.5 0.7 0.6 3 0.5 0.9 0.6 -0.3 0.5 2.2 0.6 3 0.5 2.8 0.6 0.2 0.5 2.9 0.6 4.3 0.5 3.5 0.6 0.6 0.5 3.6 0.6 4.6 0.5 3.3 0.6 1.7 0.5 3.3 0.6 5.6 0.5 4.1 0.6 1.2 0.5 3.6 0.6 4.8 0.5 3.8 0.6 1.5 0.5 2.6 0.5 5.3 0.6 2.9 0.5 0.7 0.6 2.8 0.5 4.1 0.6 1.8 0.5 0.1 0.6 1.5 0.5 3.4 0.6 1.6 0.5 -0.6 0.6 0.5 0.5 2.2 0.6 -0.3 0.5 -1.4 0.6 -0.6 0.5 1 0.6 -0.4 0.5 -3.3 0.6 -2 0.5 0.3 0.6 -1.8 0.5 -3.6 0.6 -2.5 0.5 -0.4 0.6 -3.3 0.5 -4.7 0.6 -2.3 0.5 -1.9 0.6 -3.1 0.5 -4.7 0.6 -4.2 0.5 -1.1 0.6 -3.3 0.5 -5.6 0.6 -3.6 0.5 -2.1 0.6 -2.9 0.5 -5.2 0.6 -3.3 0.5 -1.5 0.6 -3.3 0.5 -4.6 0.6 -2.6 0.5 -1.2 0.6 -2.2 0.5 -3.9 0.6 -1.7 0.5 -0.1 0.6 -1.6 0.5 -2.6 0.6 -1.4 0.5 0.8 0.6 -0.1 0.5 -1.9 0.6 -0.4 0.5 2.2 0.6 0.8 0.5 -0.7 0.6 0.7 0.5 2.8 0.6 2.1 0.5 -0.3 0.6 2.1 0.5 4.3 0.6 2 0.5 1.2 0.6 2.5 0.5 5 0.6 3.4 0.5 1.1 0.6 3.4 0.5 4.9 0.6 3.6 0.5 1.8 0.6 3.4 0.5 5.1 0.6 4.1 0.5 1.4 0.6 3.2 0.5 5 0.6 3.9 0.5 1.3 0.6 2.8 0.5 4.1 0.6 2.7 0.5 1 0.6 1.7 0.5 4.5 0.6 1.8 0.5 -0.5 0.6 1.3 0.5 3.1 0.6 0.6 0.5 -1.1 0.6 0.5 0.5 1.8 0.6 -0.2 0.5 -2.7 0.6 -0.8 0.5 0.9 0.6 -1.4 0.5 -2.8 0.6 -2 0.5 0.2 0.6 -2.4 0.5 -3.9 0.6 -3.1 0.5 -0.9 0.6 -3 0.5 -4.7 0.6 -2.9 0.5 -1.9 0.6 -3.6 0.5 -5 0.6 -3.7 0.5 -1.4 0.6 -3.4 0.5 -5.4 0.6 -3.2 0.5 -1.8 0.6 -3.7 0.5 -5.1 0.6 -2.8 0.5 -1.2 0.6 -2.7 0.5 -4.7 0.6 -3 0.5 -0.1 0.6 -1.7 0.5 -3.9 0.6 -2.3 0.5 0.5 0.6 -0.4 0.5 -3 0.6 -1.1 0.5 1.8 0.6 0.2 0.5 -1.7 0.6 0.1 0.5 2.6 0.6 0.5 0.5 -0.3 0.6 1.6 0.5 3.1 0.6 1.9 0.5 0.9 0.6 2 0.5 3.8 0.6 2.9 0.5 1.4 0.6 3.2 0.5 4.8 0.6 3.6 0.5 0.9 0.6 3.6 0.5 5 0.6 3.8 0.5 1.5 0.6 3.6 0.5 5 0.6 4.1 0.5 1.5 0.6 3.4 0.5 4.9 0.6 2.6 0.5 1.7 0.6 2.4 0.5 4.7 0.6 2.1 0.5 0 0.6 2.4 0.5 3.1 0.6 2.3 0.5 -0.9 0.6 1.1 0.5 2.3 0.6 0.4 0.5 -1.3 0.6 -0.2 0.5 1.3 0.6 -0.6 0.5 -2.6 0.6 -1 0.5 0.1 0.6 -1.5 0.5 -3.4 0.6 -2.1 0.5 -0.9 0.6 -2.2 0.5 -3.9 0.6 -3.5 0.5 -0.8 0.6 -3.3 0.5 -5.2 0.6 -3.2 0.5 -1.2 0.6 -3.4 0.5 -6 0.6 -3.1 0.5 -1.7 0.6 -3.5 0.5 -5.1 0.6 -3.7 0.5 -1.7 0.6 -2.7 0.5 -5.4 0.6 -2.9 0.5 -0.5 0.6 -2.8 0.5 -4.3 0.6 -2.2 0.5 -0.4 0.6 -1.7 0.5 -3.3 0.6 -1.9 0.5 1 0.6 -0.9 0.5 -1.6 0.6 -0.5 0.5 1.6 0.6 0 0.5 -0.8 0.6 0.2 0.5 3.3 0.6 1.3 0.5 -0.4 0.6 1.8 0.5 3.4 0.6 2.8 0.5 0.4 0.6 2.6 0.5 4.7 0.6 2.6 0.5 1.3 0.6 3.1 0.5 4.9 0.6 4.1 0.5 1.5 0.6 3.2 0.5 5.4 0.6 3.9 0.5 1 0.6 3.6 0.5 5.5 0.6 3.3 0.5 1.4 0.6 2.8 0.5 4.8 0.6 3.3 0.5 0.6 0.6 2.9 0.5 4.1 0.6 2.3 0.5 -0.5 0.6 1.7 0.5 2.9 0.6 1.5 0.5 -1.2 0.6 0.8 0.5 2.6 0.6 0.1 0.5 -2.3 0.6 -0.7 0.5 1.7 0.6 -1.5 0.5 -2.4 0.6 -1.6 0.5 -0.5 0.6 -1.1 0.5 -4.2 0.6 -2.7 0.5 -0.7 0.6 -2.4 0.5 -4.8 0.6 -2.9 0.5 -1.3 0.6 -3.6 0.5 -5.4 0.6 -3 0.5 -1.7 0.6 -3.4 0.5 -5.8 0.6 -3.6 0.5 -1 0.6 -3.8 0.5 -5.1 0.6 -3 0.5 -1.9 0.6 -2.6 0.5 -5.2 0.6 -2.4 0.5 -0.6 0.6 -2.7 0.5 -3.5 0.6 -1.9 0.5 0 0.6 -1.4 0.5 -3 0.6 -1.2 0.5 0.9 0.6 -0.1 0.5 -2 0.6 -0.2 0.5 2.2 0.6 0.4 0.5 -0.9 0.6 1 0.5 3.7 0.6 1.7 0.5 -0.4 0.6 2.5 0.5 3.4 0.6 2.6 0.5 1 0.6 2.5 0.5 5.6 0.6 2.7 0.5 1.5 0.6 3.5 0.5 5 0.6 3.7 0.5 1.5 0.6 3.4 0.5 5.7 0.6 3.1 0.5 1.8 0.6 3.3 0.5 4.8 0.6 3.4 0.5 1.5 0.6 3 0.5 4.4 0.6 2.4 0.5 1.3 0.6 1.5 0.5 4.4 0.6 1.3 0.5 0.2 0.6 0.7 0.5 3 0.6 1.1 0.5 -1.1 0.6 -0.1 0.5 1.9 0.6 -0.2 0.5 -2.3 0.6 -1.1 0.5 1.3 0.6 -1.7 0.5 -3.5 0.6 -1.6 0.5 -0.3 0.6 -1.8 0.5 -4.8 0.6 -2.2 0.5 -1.2 0.6 -2.4 0.5 -5.4 0.6 -3.2 0.5 -1.6 0.6 -3.1 0.5 -5.4 0.6 -3.4 0.5 -1.8 0.6 -3.2 0.5 -5.7 0.6 -3.4 0.5 -1.5 0.6 -3.1 0.5 -5.1 0.6 -3.4 0.5 -1.5 0.6 -2.7 0.5 -4.4 0.6 -2.6 0.5 -0.5 0.6 -1.5 0.5 -4 0.6 -1.3 0.5 -0.1 0.6 -1 0.5 -2.7 0.6 -0.8 0.5 1.9 0.6 -0.1 0.5 -1.9 0.6 0.8 0.5 2.4 0.6 0.9 0.5 -0.4 0.6 1.4 0.5 3.3 0.6 1.8 0.5 0.6 0.6 2.7 0.5 3.9 0.6 3.1 0.5 0.6 0.6 3.5 0.5 5 0.6 3 0.5 1.6 0.6 3.4 0.5 5.1 0.6 3.6 0.5 1.6 0.6 3.8 0.5 5.2 0.6 3.9 0.5 1.5 0.6 3.1 0.5 5.1 0.6 3 0.5 0.4 0.6 2.7 0.5 5.1 0.6 2.4 0.5 0.1 0.6 1.8 0.5 3.4 0.6 1.5 0.5 -0.8 0.6 1.2 0.5 2.3 0.6 0.4 0.5 -1.1 0.6 -0.4 0.5 1.7 0.6 -1 0.5 -2.5 0.6 -1.5 0.5 0.9 0.6 -2 0.5 -3.4 0.6 -2.3 0.5 -0.6 0.6 -2.6 0.5 -4.2 0.6 -2.9 0.5 -1 0.6 -3.4 0.5 -5.1 0.6 -3.4 0.5 -1.2 0.6 -3.8 0.5 -5 0.6 -4.1 0.5 -1.7 0.6 -2.8 0.5 -5.5 0.6 -3.8 0.5 -1.2 0.6 -2.7 0.5 -5.3 0.6 -2.9 0.5 -1.1 0.6 -2.4 0.5 -4.6 0.6 -1.7 0.5 -0.4 0.6 -1.8 0.5 -3.4 0.6 -1.5 0.5 1.4 0.6 -0.8 0.5 -2.7 0.6 -0.2 0.5 1.8 0.6 0.2 0.5 -1.4 0.6 1.2 0.5 2.4 0.6 1.8 0.5 -0.7 0.6 1.7 0.5 4 0.6 2.7 0.5 0.6 0.6 2.8 0.5 4.4 0.6 2.9 0.5 0.9 0.6 3.8 0.5 4.8 0.6 3.8 0.5 1 0.6 3.9 0.5 5.1 0.6 3.5 0.5 1.8 0.6 3 0.5 5.7 0.6 3.1 0.5 1.8 0.6 2.6 0.5 5.2 0.6 2.9 0.5 0.9 0.6 2.5 0.5 3.6 0.6 2.5 0.5 -0.2 0.6 1.9 0.5 3.1 0.6 1.2 0.5 -1.1 0.6 0.2 0.5 2.7 0.6 0.2 0.5 -2 0.6 -1.1 0.5 1.5 0.6 -1 0.5 -2.9 0.6 -1.7 0.5 -0.2 0.6 -1.8 0.5 -3.7 0.6 -2.6 0.5 -0.9 0.6 -2.3 0.5 -5.4 0.6 -3.2 0.5 -1 0.6 -3.4 0.5 -4.6 0.6 -4.2 0.5 -1 0.6 -3.9 0.5 -5.5 0.6 -3.1 0.5 -1.7 0.6 -3.5 0.5 -5 0.6 -3.5 0.5 -1 0.6 -3.2 0.5 -4.7 0.6 -2.9 0.5 -0.7 0.6 -2 0.5 -4.4 0.6 -1.6 0.5 0.3 0.6 -1.4 0.5 -3.2 0.6 -1.3 0.5 1 0.6 -0.3 0.5 -1.6 0.6 0.2 0.5 2.3 0.6 0.2 0.5 -0.5 0.6 1.1 0.5 3 0.6 2.1 0.5 -0.5 0.6 2.1 0.5 4.3 0.6 2.8 0.5 0.6 0.6 2.6 0.5 5.3 0.6 2.9 0.5 1.5 0.6 3 0.5 5.5 0.6 3.7 0.5 1.4 0.6 3.7 0.5 5.2 0.6 3.2 0.5 2.4 0.6 2.7 0.5 5.3 0.6 3.7 0.5 0.6 0.6 2.7 0.5 4.7 0.6 2.7 0.5 1.1 0.6 1.8 0.5 3.4 0.6 2.1 0.5 -0.1 0.6 0.8 0.5 3 0.6 1.4 0.5 -1.7 0.6 -0.1 0.5 2.1 0.6 -0.6 0.5 -2.1 0.6 -0.8 0.5 0.3 0.6 -0.9 0.5 -3.6 0.6 -1.6 0.5 -0.3 0.6 -1.9 0.5 -4.5 0.6 -3.1 0.5 -1 0.6 -2.4 0.5 -4.8 0.6 -4 0.5 -1.2 0.6 -3.4 0.5 -5.1 0.6 -3.3 0.5 -1.9 0.6 -3.3 0.5 -5.3 0.6 -4 0.5 -1.3 0.6 -3.3 0.5 -5 0.6 -3.2 0.5 -1 0.6 -3.1 0.5 -3.9 0.6 -3.2 0.5 -0.3 0.6 -1.5 0.5 -3.5 0.6 -2.2 0.5 0.9 0.6 -1.7 0.5 -1.9 0.6 -1.3 0.5 1.3 0.6 0.7 0.5 -2.1 0.6 0.8 0.5 2 0.6 1.3 0.5 -0.4 0.6 1.1 0.5 3.9 0.6 2 0.5 0.7 0.6 2.1 0.5 4.8 0.6 2.8 0.5 0.5 0.6 3.5 0.5 5 0.6 3.2 0.5 1.5 0.6 3 0.5 5.4 0.6 3.6 0.5 1.7 0.6 3.7 0.5 5.1 0.6 3.9 0.5 1.3 0.6 3.3 0.5 4.4 0.6 3.8 0.5 0.7 0.6 2.7 0.5 4 0.6 2.9 0.5 0 0.6 2 0.5 3.4 0.6 1.2 0.5 -0.5 0.6 1.1 0.5 1.9 0.6 1.1 0.5 -1.8 0.6 -0.1 0.5 1.1 0.6 -0.5 0.5 -2.7 0.6 -1.1 0.5 -0.2 0.6 -1.1 0.5 -4 0.6 -2 0.5 -0.7 0.6 -2.5 0.5 -4.5 0.6 -2.5 0.5 -1.6 0.6 -2.6 0.5 -5.2 0.6 -3.8 0.5 -1.4 0.6 -3.8 0.5 -4.6 0.6 -3.9 0.5 -2.1 0.6 -3 0.5 -5.3 0.6 -3.3 0.5 -1.8 0.6 -2.5 0.5 -5.1 0.6 -3.5 0.5 -0.3 0.6 -2.4 0.5 -4.7 0.6 -2 0.5 0 0.6 -1.6 0.5 -4 0.6 -0.8 0.5 0.4 0.6 -0.2 0.5 -2.4 0.6 -0.5 0.5 2.2 0.6 0.4 0.5 -1.1 0.6 0.7 0.5 2.6 0.6 1.7 0.5 -0.3 0.6 1.5 0.5 3.9 0.6 2.4 0.5 0.4 0.6 2.6 0.5 5.1 0.6 3.1 0.5 1.2 0.6 3.1 0.5 5 0.6 3.6 0.5 1.7 0.6 2.8 0.5 5.7 0.6 4.1 0.5 1 0.6 3.6 0.5 4.9 0.6 3.5 0.5 1.9 0.6 2.3 0.5 5.4 0.6 2.9 0.5 0.9 0.6 1.8 0.5 4.6 0.6 1.8 0.5 0 0.6 1.8 0.5 2.9 0.6 1.3 0.5 -1.5 0.6 0.4 0.5 2.3 0.6 0 0.5 -1.5 0.6 -1.1 0.5 1.7 0.6 -1.1 0.5 -3.5 0.6 -1.3 0.5 -0.2 0.6 -1.7 0.5 -4.4 0.6 -2 0.5 -0.8 0.6 -2.8 0.5 -4.6 0.6 -3.5 0.5 -1.5 0.6 -3 0.5 -4.9 0.6 -3.7 0.5 -2 0.6 -3.3 0.5 -5.2 0.6 -4 0.5 -1.6 0.6 -3 0.5 -5.4 0.6 -2.8 0.5 -1.9 0.6 -2.3 0.5 -4.7 0.6 -3.2 0.5 -0.5 0.6 -1.8 0.5 -4.2 0.6 -2.2 0.5 0.6 0.6 -1.8 0.5 -2.5 0.6 -1.5 0.5 1.3 0.6 -0.4 0.5 -1.6 0.6 0.2 0.5 2.1 0.6 0.4 0.5 -0.2 0.6 0.8 0.5 3.1 0.6 2.1 0.5 -0.5 0.6 2.4 0.5 4.4 0.6 2.6 0.5 0.8 0.6 2.3 0.5 5.2 0.6 3.1 0.5 1.7 0.6 3 0.5 5.3 0.6 3.7 0.5 1.7 0.6 3.7 0.5 4.8 0.6 3.6 0.5 1.6 0.6 3.1 0.5 5.7 0.6 3.4 0.5 0.6 0.6 2.9 0.5 5 0.6 2.7 0.5 0.6 0.6 2.1 0.5 3.2 0.6 1.7 0.5 -0.2 0.6 1.3 0.5 2.4 0.6 1 0.5 -1.2 0.6 0.3 0.5 1.3 0.6 -0.2 0.5 -2.3 0.6 -1.2 0.5 0.7 0.6 -1.2 0.5 -2.9 0.6 -2 0.5 -0.9 0.6 -1.5 0.5 -4.3 0.6 -2.9 0.5 -1.3 0.6 -2.4 0.5 -5.6 0.6 -3.4 0.5 -0.7 0.6 -3.9 0.5 -4.7 0.6 -3.8 0.5 -2.3 0.6 -3.3 0.5 -4.9 0.6 -4 0.5 -1.1 0.6 -3.2 0.5 -5.4 0.6 -3 0.5 -1.3 0.6 -2.1 0.5 -4.7 0.6 -2.5 0.5 -0.5 0.6 -2.3 0.5 -3 0.6 -1.7 0.5 0.3 0.6 -0.9 0.5 -2.7 0.6 -0.5 0.5 1.4 0.6 -0.1 0.5 -1.3 0.6 0.1 0.5 2.5 0.6 1.6 0.5 -0.3 0.6 1.3 0.5 3.2 0.6 2.4 0.5 0.4 0.6 2.3 0.5 4.4 0.6 2.9 0.5 1.2 0.6 3.1 0.5 4.8 0.6 3.6 0.5 1.5 0.6 2.9 0.5 5.4 0.6 3.7 0.5 1.7 0.6 3.5 0.5 5.1 0.6 4.1 0.5 1.3 0.6 2.8 0.5 5.3 0.6 3.3 0.5 0.4 0.6 2.9 0.5 4.6 0.6 1.9 0.5 0.7 0.6 1.6 0.5 3.1 0.6 1.4 0.5 -0.2 0.6 0.5 0.5 2.4 0.6 0.6 0.5 -1.6 0.6 -0.1 0.5 1.4 0.6 -0.7 0.5 -3.3 0.6 -1.2 0.5 0.1 0.6 -1.5 0.5 -3.6 0.6 -2.4 0.5 -0.3 0.6 -2.7 0.5 -4.2 0.6 -3.2 0.5 -1.3 0.6 -2.7 0.5 -5.4 0.6 -3.7 0.5 -1 0.6 -3.4 0.5 -5.2 0.6 -4.1 0.5 -1.7 0.6 -3 0.5 -5.7 0.6 -2.9 0.5 -1.7 0.6 -3.1 0.5 -5.2 0.6 -2.9 0.5 -0.7 0.6 -2 0.5 -4.9 0.6 -1.9 0.5 -0.5 0.6 -0.9 0.5 -3.5 0.6 -1.3 0.5 0.9 0.6 -1.1 0.5 -2.2 0.6 -0.4 0.5 2.3 0.6 0.1 0.5 -1.1 0.6 0.7 0.5 3.6 0.6 1.4 0.5 -0.6 0.6 2.3 0.5 3.3 0.6 2.4 0.5 0.9 0.6 2.8 0.5 4.1 0.6 3.7 0.5 1.1 0.6 3.3 0.5 4.8 0.6 3.3 0.5 1.7 0.6 3.9 0.5 5.2 0.6 3.8 0.5 1.2 0.6 3.4 0.5 5.2 0.6 3.9 0.5 1.2 0.6 2.5 0.5 5.3 0.6 2.3 0.5 1.1 0.6 2.2 0.5 4.4 0.6 2.1 0.5 -0.1 0.6 1 0.5 3.1 0.6 1.6 0.5 -1 0.6 -0.2 0.5 2.8 0.6 0.2 0.5 -2.6 0.6 -0.5 0.5 1.1 0.6 -0.7 0.5 -3.4 0.6 -1.8 0.5 0.3 0.6 -2.2 0.5 -4.4 0.6 -2.2 0.5 -0.8 0.6 -2.8 0.5 -4.7 0.6 -3.4 0.5 -1.3 0.6 -2.8 0.5 -5.1 0.6 -3.9 0.5 -1.4 0.6 -3.9 0.5 -5.1 0.6 -3.4 0.5 -1.6 0.6 -3.6 0.5 -5.3 0.6 -2.8 0.5 -1.5 0.6 -2.8 0.5 -4.9 0.6 -3 0.5 -0.3 0.6 -2.3 0.5 -3.5 0.6 -2.2 0.5 0.3 0.6 -1.4 0.5 -2.8 0.6 -1.5 0.5 2 0.6 -0.6 0.5 -1.9 0.6 -0.2 0.5 2.2 0.6 1.3 0.5 -0.8 0.6 1.1 0.5 3 0.6 2 0.5 0.4 0.6 1.9 0.5 4.4 0.6 2.1 0.5 1.4 0.6 2.2 0.5 5.3 0.6 3.3 0.5 1 0.6 3.6 0.5 5.4 0.6 3.8 0.5 1 0.6 3.8 0.5 5.5 0.6 3.1 0.5 2.2 0.6 3.3 0.5 4.6 0.6 3.2 0.5 1.1 0.6 2.8 0.5 4.7 0.6 2.9 0.5 0.7 0.6 1.7 0.5 4.1 0.6 1.4 0.5 -0.2 0.6 0.5 0.5 3.1 0.6 0.5 0.5 -1.3 0.6 0.6 0.5 1.1 0.6 -0.1 0.5 -2.3 0.6 -1 0.5 0.3 0.6 -1.3 0.5 -3 0.6 -2.2 0.5 -0.5 0.6 -1.9 0.5 -4.4 0.6 -2.4 0.5 -1.7 0.6 -2.8 0.5 -5.1 0.6 -3 0.5 -1.1 0.6 -3.5 0.5 -5.8 0.6 -3.3 0.5 -1.8 0.6 -2.9 0.5 -5.5 0.6 -3.7 0.5 -1.8 0.6 -3 0.5 -5 0.6 -3.3 0.5 -0.9 0.6 -3.1 0.5 -4.1 0.6 -2.1 0.5 -0.8 0.6 -1.8 0.5 -3.4 0.6 -1.6 0.5 0.5 0.6 -1.2 0.5 -2.3 0.6 -1.1 0.5 2 0.6 -0.4 0.5 -1.3 0.6 0.4 0.5 2.8 0.6 1.5 0.5 -1.1 0.6 2.2 0.5 3 0.6 2.8 0.5 0.5 0.6 2 0.5 4.7 0.6 3 0.5 0.7 0.6 3.3 0.5 4.4 0.6 4 0.5 1.5 0.6 3.4 0.5 4.8 0.6 3.6 0.5 2.1 0.6 3.4 0.5 5.3 0.6 3.2 0.5 1.8 0.6 3.4 0.5 4.3 0.6 3.6 0.5 1.1 0.6 2.3 0.5 4.1 0.6 2.4 0.5 0.2 0.6 1.5 0.5 3.3 0.6 1.7 0.5 -0.8 0.6 1.3 0.5 2 0.6 0.8 0.5 -2 0.6 -0.1 0.5 1.4 0.6 -0.8 0.5 -3.1 0.6 -1.5 0.5 0.6 0.6 -1.8 0.5 -3.4 0.6 -3 0.5 -0.1 0.6 -2.6 0.5 -4.6 0.6 -2.9 0.5 -0.9 0.6 -3 0.5 -5.6 0.6 -3.1 0.5 -1.6 0.6 -3.7 0.5 -5.3 0.6 -3.9 0.5 -1.2 0.6 -3.6 0.5 -5 0.6 -3.4 0.5 -1.7 0.6 -2.9 0.5 -5 0.6 -3.3 0.5 -0.6 0.6 -2.7 0.5 -4.1 0.6 -1.6 0.5 -0.5 0.6 -1.8 0.5 -3 0.6 -1.6 0.5 1.3 0.6 -0.8 0.5 -2.2 0.6 0 0.5 2.2 0.6 -0.2 0.5 -0.6 0.6 0.7 0.5 2.9 0.6 1.6 0.5 -0.5 0.6 2 0.5 4.1 0.6 2.3 0.5 1.2 0.6 2.1 0.5 5.1 0.6 3.1 0.5 1.3 0.6 2.9 0.5 5.1 0.6 3.9 0.5 1 0.6 3.5 0.5 5.2 0.6 4 0.5 1.6 0.6 3.7 0.5 5.2 0.6 3 0.5 1.4 0.6 2.6 0.5 5.3 0.6 2.7 0.5 0.5 0.6 2.8 0.5 3.3 0.6 2.3 0.5 0.1 0.6 1.8 0.5 2.4 0.6 1.2 0.5 -0.6 0.6 0 0.5 2.5 0.6 -0.7 0.5 -1.9 0.6 -0.7 0.5 1.4 0.6 -1.6 0.5 -2.7 0.6 -1.5 0.5 0 0.6 -2 0.5 -4.7 0.6 -2.3 0.5 -1 0.6 -2.8 0.5 -4.7 0.6 -2.8 0.5 -1.5 0.6 -3.6 0.5 -5.1 0.6 -3.7 0.5 -1 0.6 -3.5 0.5 -5.6 0.6 -3.3 0.5 -1.6 0.6 -3.8 0.5 -5.2 0.6 -3.3 0.5 -1 0.6 -2.8 0.5 -4.7 0.6 -2.6 0.5 -0.8 0.6 -2.3 0.5 -3.6 0.6 -1.7 0.5 -0.4 0.6 -0.9 0.5 -3.2 0.6 -0.5 0.5 1 0.6 0.2 0.5 -2 0.6 0.3 0.5 2.1 0.6 0.9 0.5 -0.5 0.6 1 0.5 3 0.6 1.7 0.5 0.8 0.6 1.4 0.5 4.9 0.6 2.7 0.5 0.7 0.6 3.1 0.5 4.6 0.6 3.4 0.5 1.3 0.6 3 0.5 5.2 0.6 4.1 0.5 1.4 0.6 3.2 0.5 5.7 0.6 3.3 0.5 1.6 0.6 3.7 0.5 4.9 0.6 3.3 0.5 1.3 0.6 2.4 0.5 4.5 0.6 2.6 0.5 0.5 0.6 2.3 0.5 3.8 0.6 1.3 0.5 -0.1 0.6 0.6 0.5 2.6 0.6 1.3 0.5 -1.3 0.6 -0.4 0.5 2.2 0.6 -0.5 0.5 -2.9 0.6 -0.7 0.5 0.7 0.6 -1.9 0.5 -2.9 0.6 -2.4 0.5 -0.4 0.6 -2.1 0.5 -4.3 0.6 -2.8 0.5 -1.3 0.6 -3 0.5 -4.6 0.6 -3.3 0.5 -1.5 0.6 -3.6 0.5 -4.9 0.6 -4.3 0.5 -1.6 0.6 -3.5 0.5 -4.9 0.6 -3.6 0.5 -1.7 0.6 -2.9 0.5 -5.5 0.6 -3.1 0.5 -0.3 0.6 -2.7 0.5 -5.1 0.6 -2 0.5 -0.5 0.6 -1.8 0.5 -3.3 0.6 -1.7 0.5 0.8 0.6 -1.1 0.5 -2.4 0.6 -1.2 0.5 2.2 0.6 -0.2 0.5 -1 0.6 0.4 0.5 2.8 0.6 1.1 0.5 -0.8 0.6 1.6 0.5 3.9 0.6 1.6 0.5 0.9 0.6 2.3 0.5 4.7 0.6 2.6 0.5 1.4 0.6 3.1 0.5 4.7 0.6 3.7 0.5 1.8 0.6 2.9 0.5 5.4 0.6 3.7 0.5 1.9 0.6 2.9 0.5 5.3 0.6 3.6 0.5 1.7 0.6 2.7 0.5 5.6 0.6 2.7 0.5 1.1 0.6 2.2 0.5 4 0.6 2.7 0.5 0.3 0.6 1.3 0.5 4.1 0.6 1.1 0.5 -0.9 0.6 0.4 0.5 2.5 0.6 0.5 0.5 -1.6 0.6 -0.7 0.5 1.5 0.6 -0.8 0.5 -2.6 0.6 -1.4 0.5 0.2 0.6 -1.5 0.5 -3.9 0.6 -2.8 0.5 -0.1 0.6 -2.6 0.5 -4.4 0.6 -2.9 0.5 -1.7 0.6 -2.7 0.5 -5.6 0.6 -3.2 0.5 -2.1 0.6 -2.7 0.5 -5.7 0.6 -3.6 0.5 -1.7 0.6 -3.4 0.5 -5.4 0.6 -3.1 0.5 -1.4 0.6 -3.5 0.5 -4.6 0.6 -2.5 0.5 -1.3 0.6 -2.4 0.5 -3.9 0.6 -2.4 0.5 0.5 0.6 -1.5 0.5 -3.9 0.6 -1.2 0.5 0.9 0.6 -0.3 0.5 -2.3 0.6 0.1 0.5 2.1 0.6 0 0.5 -1.2 0.6 0.9 0.5 3.2 0.6 1.5 0.5 0.1 0.6 1.7 0.5 4.3 0.6 2.7 0.5 0.7 0.6 2.1 0.5 4.9 0.6 2.8 0.5 1.7 0.6 3.4 0.5 5.1 0.6 3 0.5 1.7 0.6 3.9 0.5 5.2 0.6 3.7 0.5 1.1 0.6 3.8 0.5 4.7 0.6 3.9 0.5 1.4 0.6 2.5 0.5 4.5 0.6 3.5 0.5 0.9 0.6 1.9 0.5 3.8 0.6 2 0.5 0.3 0.6 1.5 0.5 2.5 0.6 1 0.5 -0.5 0.6 -0.1 0.5 2 0.6 -0.1 0.5 -1.8 0.6 -0.6 0.5 0.6 0.6 -0.7 0.5 -3.6 0.6 -1.8 0.5 0.3 0.6 -1.8 0.5 -4.3 0.6 -2.7 0.5 -0.7 0.6 -2.6 0.5 -4.8 0.6 -3.6 0.5 -1.6 0.6 -3.5 0.5 -4.8 0.6 -3.7 0.5 -2 0.6 -2.6 0.5 -5.9 0.6 -3.1 0.5 -2.3 0.6 -3 0.5 -4.8 0.6 -3.4 0.5 -1.3 0.6 -2.9 0.5 -4.9 0.6 -2.2 0.5 -0.6 0.6 -2.4 0.5 -3.7 0.6 -1.7 0.5 0 0.6 -1.2 0.5 -2.9 0.6 -0.7 0.5 1.3 0.6 -0.4 0.5 -1.5 0.6 -0.2 0.5 2.6 0.6 0.7 0.5 -0.3 0.6 1.2 0.5 3.3 0.6 1.6 0.5 0.1 0.6 2.2 0.5 4.4 0.6 2.3 0.5 1.4 0.6 3.1 0.5 4.2 0.6 4 0.5 1.2 0.6 3.6 0.5 5.1 0.6 3.6 0.5 1.7 0.6 3.1 0.5 5.1 0.6 4.2 0.5 1.6 0.6 3.1 0.5 4.6 0.6 3.5 0.5 1.2 0.6 2.5 0.5 4.6 0.6 2.6 0.5 0.9 0.6 1.6 0.5 4 0.6 1.7 0.5 -1 0.6 1.4 0.5 2.4 0.6 0.9 0.5 -1.5 0.6 0.1 0.5 1.3 0.6 0 0.5 -2.8 0.6 -0.8 0.5 0.3 0.6 -1.2 0.5 -3.3 0.6 -2.6 0.5 -0.6 0.6 -1.5 0.5 -4.7 0.6 -2.8 0.5 -0.9 0.6 -2.8 0.5 -5.4 0.6 -3 0.5 -2 0.6 -3 0.5 -5.2 0.6 -4.1 0.5 -1.6 0.6 -3.4 0.5 -5.3 0.6 -3.5 0.5 -1.2 0.6 -3.8 0.5 -4.2 0.6 -3.3 0.5 -1.3 0.6 -2.5 0.5 -4.6 0.6 -2.1 0.5 -0.3 0.6 -2.1 0.5 -3.5 0.6 -1.8 0.5 0.7 0.6 -0.4 0.5 -2.7 0.6 -0.7 0.5 1.9 0.6 -0.2 0.5 -1.6 0.6 0.8 0.5 2.9 0.6 1 0.5 -0.1 0.6 1.3 0.5 3.7 0.6 2.6 0.5 0.2 0.6 2.7 0.5 4.5 0.6 2.7 0.5 0.9 0.6 3.6 0.5 4.8 0.6 3.5 0.5 1.7 0.6 3.2 0.5 5.7 0.6 2.9 0.5 2.4 0.6 3.1 0.5 5.1 0.6 3.9 0.5 1.5 0.6 2.8 0.5 4.4 0.6 3.6 0.5 0.7 0.6 2.6 0.5 4.5 0.6 1.8 0.5 0.7 0.6 1.2 0.5 3.3 0.6 1.2 0.5 -0.7 0.6 0.8 0.5 2.5 0.6 0.7 0.5 -2.5 0.6 -0.3 0.5 1.3 0.6 -0.4 0.5 -3.2 0.6 -1.2 0.5 -0.1 0.6 -1.8 0.5 -3.4 0.6 -2.3 0.5 -1.1 0.6 -2.6 0.5 -4.1 0.6 -3.6 0.5 -0.5 0.6 -3.3 0.5 -5.6 0.6 -3.3 0.5 -1.9 0.6 -3.3 0.5 -5.2 0.6 -3.2 0.5 -1.6 0.6 -3.5 0.5 -5.3 0.6 -3.5 0.5 -1.5 0.6 -2.8 0.5 -5 0.6 -3 0.5 -0.5 0.6 -2.7 0.5 -4 0.6 -2 0.5 0.2 0.6 -1.9 0.5 -3.2 0.6 -1.2 0.5 0.8 0.6 -0.3 0.5 -1.9 0.6 -0.6 0.5 2.3 0.6 0.4 0.5 -0.8 0.6 1 0.5 2.5 0.6 2 0.5 -0.4 0.6 2.2 0.5 4.1 0.6 2.1 0.5 0.8 0.6 2.7 0.5 4.7 0.6 3.7 0.5 1.3 0.6 3.1 0.5 4.9 0.6 3.6 0.5 1.4 0.6 3.6 0.5 5.8 0.6 2.9 0.5 1.9 0.6 3.1 0.5 5.7 0.6 3 0.5 1.4 0.6 2.6 0.5 5.2 0.6 2.7 0.5 0.9 0.6 2.1 0.5 4 0.6 1.7 0.5 -0.2 0.6 1.6 0.5 2.5 0.6 1.8 0.5 -1.3 0.6 0.1 0.5 1.8 0.6 -0.2 0.5 -1.8 0.6 -0.6 0.5 0.3 0.6 -1 0.5 -2.8 0.6 -2 0.5 0.2 0.6 -2.3 0.5 -3.7 0.6 -2.7 0.5 -1.3 0.6 -2.6 0.5 -4.8 0.6 -3.4 0.5 -1.1 0.6 -3.3 0.5 -5.2 0.6 -4 0.5 -1.5 0.6 -3.3 0.5 -5.4 0.6 -4 0.5 -1 0.6 -3.5 0.5 -5.4 0.6 -2.7 0.5 -1.5 0.6 -2.6 0.5 -4.6 0.6 -2.8 0.5 -0.3 0.6 -2.8 0.5 -3.6 0.6 -2 0.5 0.7 0.6 -1.5 0.5 -3 0.6 -0.8 0.5 1.4 0.6 0.2 0.5 -1.8 0.6 0.2 0.5 2 0.6 1.4 0.5 -1 0.6 1.1 0.5 3.4 0.6 2.1 0.5 0.4 0.6 1.9 0.5 4.6 0.6 2.5 0.5 1.4 0.6 3 0.5 4.5 0.6 3.1 0.5 2.2 0.6 2.6 0.5 5.7 0.6 3.7 0.5 1.5 0.6 3.7 0.5 4.7 0.6 4.1 0.5 1.7 0.6 3.2 0.5 5 0.6 2.9 0.5 1.2 0.6 2.9 0.5 4.1 0.6 2.5 0.5 0.2 0.6 2.1 0.5 3.6 0.6 2.3 0.5 -1 0.6 1 0.5 3.2 0.6 0.5 0.5 -1.8 0.6 -0.3 0.5 1.8 0.6 -0.4 0.5 -2.1 0.6 -1.6 0.5 1 0.6 -1.9 0.5 -3.8 0.6 -1.4 0.5 -1 0.6 -1.7 0.5 -4.6 0.6 -3.2 0.5 -0.6 0.6 -3.3 0.5 -4.5 0.6 -3.8 0.5 -1.2 0.6 -3.3 0.5 -5.8 0.6 -3.4 0.5 -1.7 0.6 -3.4 0.5 -5.8 0.6 -3 0.5 -1.5 0.6 -3.5 0.5 -5.1 0.6 -3.1 0.5 -0.7 0.6 -2.9 0.5 -3.7 0.6 -2.8 0.5 0.1 0.6 -1.9 0.5 -3.8 0.6 -1.7 0.5 0.9 0.6 -0.7 0.5 -2.3 0.6 -0.4 0.5 1.2 0.6 0.1 0.5 -1 0.6 0.6 0.5 2.8 0.6 1.4 0.5 -0.4 0.6 1.4 0.5 3.9 0.6 1.7 0.5 1.2 0.6 2.2 0.5 4.1 0.6 3 0.5 1.6 0.6 2.7 0.5 5.6 0.6 3 0.5 1.7 0.6 3.4 0.5 5.7 0.6 3.1 0.5 2.2 0.6 3.2 0.5 5.1 0.6 3.8 0.5 1.4 0.6 3 0.5 4.7 0.6 2.6 0.5 1.1 0.6 2.8 0.5 3.7 0.6 2.8 0.5 -0.1 0.6 1.6 0.5 3.7 0.6 1.4 0.5 -1 0.6 0.4 0.5 2.4 0.6 0.7 0.5 -2 0.6 -0.7 0.5 0.8 0.6 -0.1 0.5 -3.6 0.6 -1.4 0.5 0.6 0.6 -2.1 0.5 -3.4 0.6 -2.5 0.5 -1 0.6 -2 0.5 -4.6 0.6 -3.3 0.5 -1 0.6 -3.3 0.5 -5.4 0.6 -3.3 0.5 -1.5 0.6 -3.6 0.5 -5.8 0.6 -3.4 0.5 -1.4 0.6 -3.6 0.5 -5.4 0.6 -3.2 0.5 -1.6 0.6 -2.7 0.5 -5.1 0.6 -2.4 0.5 -1.2 0.6 -1.8 0.5 -4.7 0.6 -1.7 0.5 0 0.6 -1.8 0.5 -2.8 0.6 -1.3 0.5 1.1 0.6 -0.7 0.5 -1.9 0.6 0.1 0.5 1.9 0.6 0.4 0.5 -1 0.6 1.3 0.5 2.5 0.6 2 0.5 0 0.6 1.8 0.5 3.7 0.6 2.6 0.5 1.4 0.6 2.3 0.5 4.6 0.6 3.4 0.5 1 0.6 3.2 0.5 5.8 0.6 3.5 0.5 1.2 0.6 3.5 0.5 5.2 0.6 3.8 0.5 1.8 0.6 3.5 0.5 4.9 0.6 3.7 0.5 1.4 0.6 2.5 0.5 4.3 0.6 2.8 0.5 1.1 0.6 1.8 0.5 4.5 0.6 1.3 0.5 -0.1 0.6 2 0.5 2.5 0.6 1.1 0.5 -1.1 0.6 -0.2 0.5 2.1 0.6 0 0.5 -2 0.6 -0.8 0.5 0.8 0.6 -1.4 0.5 -3.1 0.6 -1.5 0.5 -0.7 0.6 -1.9 0.5 -3.9 0.6 -2.4 0.5 -1.7 0.6 -2.2 0.5 -5 0.6 -3.3 0.5 -1.1 0.6 -3.9 0.5 -4.8 0.6 -3.9 0.5 -1.3 0.6 -3.4 0.5 -5.6 0.6 -3.8 0.5 -1.1 0.6 -3.3 0.5 -5.2 0.6 -3.2 0.5 -1 0.6 -3.3 0.5 -4.2 0.6 -2.6 0.5 -1 0.6 -1.5 0.5 -4.3 0.6 -1.3 0.5 0.1 0.6 -0.8 0.5 -2.9 0.6 -0.9 0.5 1 0.6 0.1 0.5 -1.7 0.6 0.4 0.5 2.1 0.6 1.4 0.5 -1.2 0.6 1.5 0.5 3.2 0.6 2 0.5 0.3 0.6 2 0.5 4.7 0.6 2.9 0.5 0.8 0.6 3.2 0.5 4.7 0.6 3.5 0.5 1 0.6 3.5 0.5 5 0.6 3.8 0.5 2.2 0.6 2.8 0.5 5.7 0.6 3.4 0.5 1.8 0.6 3.3 0.5 5 0.6 3.3 0.5 1.2 0.6 2.2 0.5 4.9 0.6 2.3 0.5 0 0.6 2 0.5 3.7 0.6 2 0.5 -1.1 0.6 1.5 0.5 2.5 0.6 0.6 0.5 -1.8 0.6 -0.1 0.5 1.6 0.6 -0.2 0.5 -2.8 0.6 -1 0.5 0.6 0.6 -2 0.5 -3.7 0.6 -1.4 0.5 -1 0.6 -1.8 0.5 -4.8 0.6 -3 0.5 -1.3 0.6 -2.6 0.5 -4.9 0.6 -3.9 0.5 -1.6 0.6 -3.1 0.5 -4.8 0.6 -3.8 0.5 -2.1 0.6 -3.2 0.5 -5.3 0.6 -3.3 0.5 -1.8 0.6 -3.1 0.5 -4.8 0.6 -3.3 0.5 -0.9 0.6 -2.3 0.5 -4.5 0.6 -2.8 0.5 0 0.6 -1.5 0.5 -3.7" fill="none" stroke="#f49b2d" stroke-width="2.8" stroke-linejoin="round"/>
</g>
<g stroke="#a6a6a6" stroke-width="1.4" stroke-dasharray="3.5 3" fill="none">
<path d="M171 56V915"/>
<path d="M348 56V915"/>
<path d="M526.5 56V915"/>
<path d="M702 56V915"/>
<path d="M879.5 84V915"/>
<path d="M1057.5 56V915"/>
<path d="M1234.5 56V915"/>
<path d="M1411 56V915"/>
<path d="M1589.5 56V915"/>
</g>
<g stroke="#a6a6a6" stroke-width="1.5" stroke-dasharray="4.5 2.1" fill="none">
<path d="M24 74.9H1732"/>
<path d="M24 164H1732"/>
<path d="M24 252.1H1732"/>
<path d="M24 340.3H1732"/>
<path d="M24 427.5H1742"/>
<path d="M24 515.9H1742"/>
<path d="M24 604.7H1737"/>
<path d="M24 693.8H1730"/>
<path d="M24 781H1730"/>
<path d="M24 868.2H1730"/>
</g>
<path d="M3 292.3H1766" stroke="#d9822b" stroke-width="2" stroke-dasharray="6.5 6.5"/>
<path d="M1765.5 34V913" stroke="#d4964a" stroke-width="2" stroke-dasharray="5.5 3"/>
<g stroke="none">
<rect x="170" y="31.5" width="2" height="12" fill="#85743a"/>
<path d="M165.3 42.9H176.7L171 54Z" fill="#fbbf00"/>
<rect x="347" y="31.5" width="2" height="12" fill="#85743a"/>
<path d="M342.3 42.9H353.7L348 54Z" fill="#fbbf00"/>
<rect x="525.5" y="31.5" width="2" height="12" fill="#85743a"/>
<path d="M520.8 42.9H532.2L526.5 54Z" fill="#fbbf00"/>
<rect x="701" y="31.5" width="2" height="12" fill="#85743a"/>
<path d="M696.3 42.9H707.7L702 54Z" fill="#fbbf00"/>
<rect x="1056.5" y="31.5" width="2" height="12" fill="#85743a"/>
<path d="M1051.8 42.9H1063.2L1057.5 54Z" fill="#fbbf00"/>
<rect x="1233.5" y="31.5" width="2" height="12" fill="#85743a"/>
<path d="M1228.8 42.9H1240.2L1234.5 54Z" fill="#fbbf00"/>
<rect x="1410" y="31.5" width="2" height="12" fill="#85743a"/>
<path d="M1405.3 42.9H1416.7L1411 54Z" fill="#fbbf00"/>
<rect x="1588.5" y="31.5" width="2" height="12" fill="#85743a"/>
<path d="M1583.8 42.9H1595.2L1589.5 54Z" fill="#fbbf00"/>
</g>
<g>
<rect x="2" y="74" width="10" height="1.8" fill="#7a6520"/>
<path d="M11.5 69.5L21.8 74.9L11.5 80.3Z" fill="#f9bc00"/>
<rect x="2" y="251.2" width="10" height="1.8" fill="#7a6520"/>
<path d="M11.5 246.7L21.8 252.1L11.5 257.5Z" fill="#f9bc00"/>
<rect x="2" y="426.6" width="10" height="1.8" fill="#7a6520"/>
<path d="M11.5 422.1L21.8 427.5L11.5 432.9Z" fill="#f9bc00"/>
<rect x="2" y="603.6" width="10" height="1.8" fill="#7a6520"/>
<path d="M11.5 599.1L21.8 604.5L11.5 609.9Z" fill="#f9bc00"/>
<rect x="2" y="692.7" width="10" height="1.8" fill="#7a6520"/>
<path d="M11.5 688.2L21.8 693.6L11.5 699Z" fill="#f9bc00"/>
<rect x="2" y="779.8" width="10" height="1.8" fill="#7a6520"/>
<path d="M11.5 775.3L21.8 780.7L11.5 786.1Z" fill="#f9bc00"/>
<rect x="2" y="867.3" width="10" height="1.8" fill="#7a6520"/>
<path d="M11.5 862.8L21.8 868.2L11.5 873.6Z" fill="#f9bc00"/>
</g>
<g fill="#76b33a" font-size="16.5" text-anchor="end">
<text x="1769" y="80.9">25 A</text>
<text x="1769" y="170">20 A</text>
<text x="1769" y="258.1">15 A</text>
<text x="1769" y="346.3">10 A</text>
<text x="1769" y="433.5">5 A</text>
<text x="1769" y="521.9">0 A</text>
<text x="1769" y="610.7">-5 A</text>
<text x="1769" y="699.8">-10 A</text>
<text x="1769" y="787">-15 A</text>
<text x="1769" y="874.2">-20 A</text>
</g>
<g fill="#b8b8b8" font-size="16.5">
<text x="141.5" y="909" textLength="57" lengthAdjust="spacingAndGlyphs">-800 ms</text>
<text x="318.5" y="909" textLength="57" lengthAdjust="spacingAndGlyphs">-600 ms</text>
<text x="497" y="909" textLength="57" lengthAdjust="spacingAndGlyphs">-400 ms</text>
<text x="672.5" y="909" textLength="57" lengthAdjust="spacingAndGlyphs">-200 ms</text>
<text x="868.1" y="909" textLength="20.8" lengthAdjust="spacingAndGlyphs">0 s</text>
<text x="1030.2" y="909" textLength="52.5" lengthAdjust="spacingAndGlyphs">200 ms</text>
<text x="1207.2" y="909" textLength="52.5" lengthAdjust="spacingAndGlyphs">400 ms</text>
<text x="1383.8" y="909" textLength="52.5" lengthAdjust="spacingAndGlyphs">600 ms</text>
<text x="1562.2" y="909" textLength="52.5" lengthAdjust="spacingAndGlyphs">800 ms</text>
</g>
<path d="M865.7 34H892.9L879.3 46.8Z" fill="#f0902a"/>
<path d="M867.5 48.5H891V72H884L879.3 77L874.6 72H867.5Z" fill="#000" stroke="#f0902a" stroke-width="3"/>
<path d="M874.5 55.5H884.5M879.5 55.5V68" stroke="#f0902a" stroke-width="2.4"/>
<path d="M874 73.5H884.6L879.3 83.5Z" fill="#f0902a"/>
<path d="M1723 43.4H1764.6Q1766.6 43.4 1766.6 45.4V86.8L1721.3 44.6Z" fill="#585858" fill-opacity="0.95"/>
<circle cx="1756.5" cy="51.8" r="5.3" fill="none" stroke="#a8a8a8" stroke-width="1.9"/>
<path d="M1751.8 56.5L1745 63.5" stroke="#a8a8a8" stroke-width="3" stroke-linecap="round"/>
<rect x="0" y="0" width="2.2" height="917" fill="#ececec"/>
<rect x="1772.6" y="0" width="1.4" height="917" fill="#d8d8d8"/>
<rect x="0" y="915" width="1774" height="2" fill="#d8d8d8"/>
<rect x="5" y="114" width="100" height="55" fill="url(#lg)"/>
<text x="33.5" y="153.3" font-size="30.5" fill="#111">U</text>
<text x="54.6" y="160.6" font-size="20" fill="#111">sA</text>
<rect x="5" y="305" width="100" height="55" fill="url(#lg)"/>
<text x="33.5" y="344.9" font-size="30.5" fill="#111">U</text>
<text x="54.6" y="351.4" font-size="20" fill="#111">sB</text>
<rect x="5" y="489" width="100" height="55" fill="url(#lg)"/>
<text x="21" y="528.2" font-size="30" fill="#111">i</text>
<text x="28.5" y="536" font-size="21" fill="#111">a_sum</text>
<rect x="4" y="632" width="96" height="55" fill="url(#lg)"/>
<text x="44" y="671.5" font-size="30" fill="#111">i</text>
<text x="51.5" y="678.9" font-size="20" fill="#111">c</text>
<rect x="4" y="776" width="87" height="54" fill="url(#lg)"/>
<path d="M21 780.5H91" stroke="#ffe9a8" stroke-opacity="0.5" stroke-width="1.4" stroke-dasharray="4 2.7"/>
<path d="M10.5 774.8L21.5 780.5L10.5 786.2Z" fill="#f4b800" fill-opacity="0.6"/>
<text x="38.3" y="814" font-size="30" fill="#111">i</text>
<text x="46" y="821.8" font-size="20" fill="#111">e</text>
<rect x="976" y="74" width="721.5" height="441" fill="#fff"/>
<path d="M1058 104.4H1682.2V435" fill="none" stroke="#3a3a3a" stroke-width="1.2"/>
<g stroke="#5c5c5c" stroke-width="1.5" stroke-dasharray="6.5 4.8">
<path d="M1061 368.7H1682"/>
<path d="M1061 302.6H1682"/>
<path d="M1061 236.6H1682"/>
<path d="M1061 170.5H1682"/>
</g>
<g stroke-width="1">
<rect x="1072.4" y="307.5" width="10.4" height="127.2" fill="#ff3434" stroke="#5a1a1a"/>
<rect x="1082.8" y="126.3" width="10.4" height="308.4" fill="#429dff" stroke="#1f3f66"/>
<rect x="1097.9" y="357.4" width="10.4" height="77.3" fill="#ff5252" stroke="#5a1a1a"/>
<rect x="1108.3" y="282.1" width="10.4" height="152.6" fill="#429dff" stroke="#1f3f66"/>
<rect x="1123.4" y="348.5" width="10.4" height="86.2" fill="#ff5252" stroke="#5a1a1a"/>
<rect x="1133.8" y="243.8" width="10.4" height="190.9" fill="#6ab2ff" stroke="#1f3f66"/>
<rect x="1148.8" y="395.1" width="10.4" height="39.6" fill="#ff3434" stroke="#5a1a1a"/>
<rect x="1159.2" y="379.9" width="10.4" height="54.8" fill="#429dff" stroke="#1f3f66"/>
<rect x="1174.3" y="393.8" width="10.4" height="40.9" fill="#ff3434" stroke="#5a1a1a"/>
<rect x="1184.7" y="339.1" width="10.4" height="95.6" fill="#6ab2ff" stroke="#1f3f66"/>
<rect x="1199.8" y="431" width="10.4" height="3.7" fill="#ff3434" stroke="#5a1a1a"/>
<rect x="1210.2" y="411.3" width="10.4" height="23.4" fill="#429dff" stroke="#1f3f66"/>
<rect x="1225.3" y="393.1" width="10.4" height="41.6" fill="#ff3434" stroke="#5a1a1a"/>
<rect x="1235.7" y="353.3" width="10.4" height="81.4" fill="#6ab2ff" stroke="#1f3f66"/>
<rect x="1250.8" y="428.4" width="10.4" height="6.3" fill="#ff3434" stroke="#5a1a1a"/>
<rect x="1261.2" y="422.2" width="10.4" height="12.5" fill="#429dff" stroke="#1f3f66"/>
<rect x="1276.2" y="394.1" width="10.4" height="40.6" fill="#ff3434" stroke="#5a1a1a"/>
<rect x="1286.6" y="355.5" width="10.4" height="79.2" fill="#6ab2ff" stroke="#1f3f66"/>
<rect x="1301.7" y="426.5" width="10.4" height="8.2" fill="#ff3434" stroke="#5a1a1a"/>
<rect x="1312.1" y="418.9" width="10.4" height="15.8" fill="#429dff" stroke="#1f3f66"/>
<rect x="1327.2" y="395.1" width="10.4" height="39.6" fill="#ff3434" stroke="#5a1a1a"/>
<rect x="1337.6" y="379.4" width="10.4" height="55.3" fill="#429dff" stroke="#1f3f66"/>
<rect x="1352.7" y="432.7" width="10.4" height="2" fill="#ff3434" stroke="#5a1a1a"/>
<rect x="1363.1" y="432.7" width="10.4" height="2" fill="#429dff" stroke="#1f3f66"/>
<rect x="1378.2" y="415.5" width="10.4" height="19.2" fill="#ff3434" stroke="#5a1a1a"/>
<rect x="1388.6" y="397.7" width="10.4" height="37" fill="#6ab2ff" stroke="#1f3f66"/>
<rect x="1403.6" y="433.4" width="10.4" height="1.3" fill="#ff3434" stroke="#5a1a1a"/>
<rect x="1414" y="429.2" width="10.4" height="5.5" fill="#429dff" stroke="#1f3f66"/>
<rect x="1429.1" y="429.7" width="10.4" height="5" fill="#ff3434" stroke="#5a1a1a"/>
<rect x="1439.5" y="424.8" width="10.4" height="9.9" fill="#429dff" stroke="#1f3f66"/>
<rect x="1454.6" y="427.9" width="10.4" height="6.8" fill="#ff3434" stroke="#5a1a1a"/>
<rect x="1465" y="421.6" width="10.4" height="13.1" fill="#429dff" stroke="#1f3f66"/>
<rect x="1480.1" y="427.9" width="10.4" height="6.8" fill="#ff3434" stroke="#5a1a1a"/>
<rect x="1490.5" y="420.8" width="10.4" height="13.9" fill="#429dff" stroke="#1f3f66"/>
<rect x="1505.6" y="431.4" width="10.4" height="3.3" fill="#ff3434" stroke="#5a1a1a"/>
<rect x="1516" y="428.4" width="10.4" height="6.3" fill="#429dff" stroke="#1f3f66"/>
<rect x="1531" y="434" width="10.4" height="0.7" fill="#ff3434" stroke="#5a1a1a"/>
<rect x="1541.4" y="434" width="10.4" height="0.7" fill="#429dff" stroke="#1f3f66"/>
<rect x="1556.5" y="434" width="10.4" height="0.7" fill="#ff3434" stroke="#5a1a1a"/>
<rect x="1566.9" y="430.1" width="10.4" height="4.6" fill="#429dff" stroke="#1f3f66"/>
<rect x="1633" y="434" width="10.4" height="0.7" fill="#ff3434" stroke="#5a1a1a"/>
<rect x="1643.4" y="432.1" width="10.4" height="2.6" fill="#429dff" stroke="#1f3f66"/>
<rect x="1658.4" y="433.4" width="10.4" height="1.3" fill="#ff3434" stroke="#5a1a1a"/>
<rect x="1668.8" y="433.4" width="10.4" height="1.3" fill="#429dff" stroke="#1f3f66"/>
</g>
<g stroke="#000" stroke-opacity="0.22" stroke-width="1.5" stroke-dasharray="6.5 4.8">
<path d="M1061 368.7H1682"/>
<path d="M1061 302.6H1682"/>
<path d="M1061 236.6H1682"/>
<path d="M1061 170.5H1682"/>
</g>
<path d="M1057.7 102.7V434.7H1683.5" fill="none" stroke="#000" stroke-width="4"/>
<g stroke="#000" stroke-width="4" stroke-linecap="round">
<path d="M1058 434.7H1069"/>
<path d="M1058 368.7H1069"/>
<path d="M1058 302.6H1069"/>
<path d="M1058 236.6H1069"/>
<path d="M1058 170.5H1069"/>
<path d="M1058 104.5H1069"/>
<path d="M1082.8 437V446.5"/>
<path d="M1108.3 437V446.5"/>
<path d="M1133.8 437V446.5"/>
<path d="M1159.2 437V446.5"/>
<path d="M1184.7 437V446.5"/>
<path d="M1210.2 437V446.5"/>
<path d="M1235.7 437V446.5"/>
<path d="M1261.2 437V446.5"/>
<path d="M1286.6 437V446.5"/>
<path d="M1312.1 437V446.5"/>
<path d="M1337.6 437V446.5"/>
<path d="M1363.1 437V446.5"/>
<path d="M1388.6 437V446.5"/>
<path d="M1414 437V446.5"/>
<path d="M1439.5 437V446.5"/>
<path d="M1465 437V446.5"/>
<path d="M1490.5 437V446.5"/>
<path d="M1516 437V446.5"/>
<path d="M1541.4 437V446.5"/>
<path d="M1566.9 437V446.5"/>
<path d="M1592.4 437V446.5"/>
<path d="M1617.9 437V446.5"/>
<path d="M1643.4 437V446.5"/>
<path d="M1668.8 437V446.5"/>
</g>
<g font-size="19.4" fill="#111" text-anchor="end">
<text x="1050" y="444.7">0</text>
<text x="1050" y="378.7">0.1</text>
<text x="1050" y="312.6">0.2</text>
<text x="1050" y="246.6">0.3</text>
<text x="1050" y="180.5">0.4</text>
<text x="1050" y="114.5">0.5</text>
</g>
<g font-size="19.5" fill="#111" text-anchor="middle">
<text x="1087.3" y="469.2">3</text>
<text x="1112.8" y="481.9">5</text>
<text x="1138.3" y="469.2">7</text>
<text x="1163.7" y="481.9">9</text>
<text x="1189.2" y="469.2">11</text>
<text x="1214.7" y="481.9">13</text>
<text x="1240.2" y="469.2">15</text>
<text x="1265.7" y="481.9">17</text>
<text x="1291.1" y="469.2">19</text>
<text x="1316.6" y="481.9">21</text>
<text x="1342.1" y="469.2">23</text>
<text x="1367.6" y="481.9">25</text>
<text x="1393.1" y="469.2">27</text>
<text x="1418.5" y="481.9">29</text>
<text x="1444" y="469.2">31</text>
<text x="1469.5" y="481.9">33</text>
<text x="1495" y="469.2">35</text>
<text x="1520.5" y="481.9">37</text>
<text x="1545.9" y="469.2">39</text>
<text x="1571.4" y="481.9">41</text>
<text x="1596.9" y="469.2">43</text>
<text x="1622.4" y="481.9">45</text>
<text x="1647.9" y="469.2">47</text>
<text x="1673.3" y="481.9">49</text>
</g>
<text x="1226.5" y="512.5" font-size="21" fill="#111" textLength="351.7" lengthAdjust="spacingAndGlyphs">Order of stator voltage harmonics</text>
<text transform="translate(1006.3 394.5) rotate(-90)" x="0" y="0" font-size="21.5" fill="#111" textLength="257.5" lengthAdjust="spacingAndGlyphs">Mag (% of Fundamental)</text>
<g font-weight="bold" fill="#000">
<text x="1224.6" y="154.3" font-size="32" textLength="68" lengthAdjust="spacingAndGlyphs">THD</text>
<text x="1292.6" y="158.8" font-size="23" textLength="40" lengthAdjust="spacingAndGlyphs">UsA</text>
<text x="1341" y="154.3" font-size="32" textLength="123" lengthAdjust="spacingAndGlyphs">= 1.52%</text>
<text x="1224.6" y="199.2" font-size="32" textLength="68" lengthAdjust="spacingAndGlyphs">THD</text>
<text x="1292.6" y="204.5" font-size="23" textLength="39" lengthAdjust="spacingAndGlyphs">UsB</text>
<text x="1340.5" y="199.2" font-size="32" textLength="123" lengthAdjust="spacingAndGlyphs">= 3.54%</text>
</g>
<rect x="1478" y="108.3" width="143.5" height="101" rx="13" ry="13" fill="#fff" stroke="#444" stroke-width="1.2"/>
<text x="1526" y="127.6" font-size="19" fill="#111" textLength="63.7" lengthAdjust="spacingAndGlyphs">Legend</text>
<rect x="1490.8" y="136.6" width="51.8" height="16.8" fill="#ff3434" stroke="#8a2020" stroke-width="1.2"/>
<text x="1558.5" y="151" font-size="18.5" fill="#111" textLength="54" lengthAdjust="spacingAndGlyphs">Gen A</text>
<rect x="1491.5" y="177.7" width="52" height="17.5" fill="#46a0ff" stroke="#24507a" stroke-width="1.2"/>
<text x="1558.5" y="195.6" font-size="18.5" fill="#111" textLength="53.5" lengthAdjust="spacingAndGlyphs">Gen B</text>
</svg></body></html>
